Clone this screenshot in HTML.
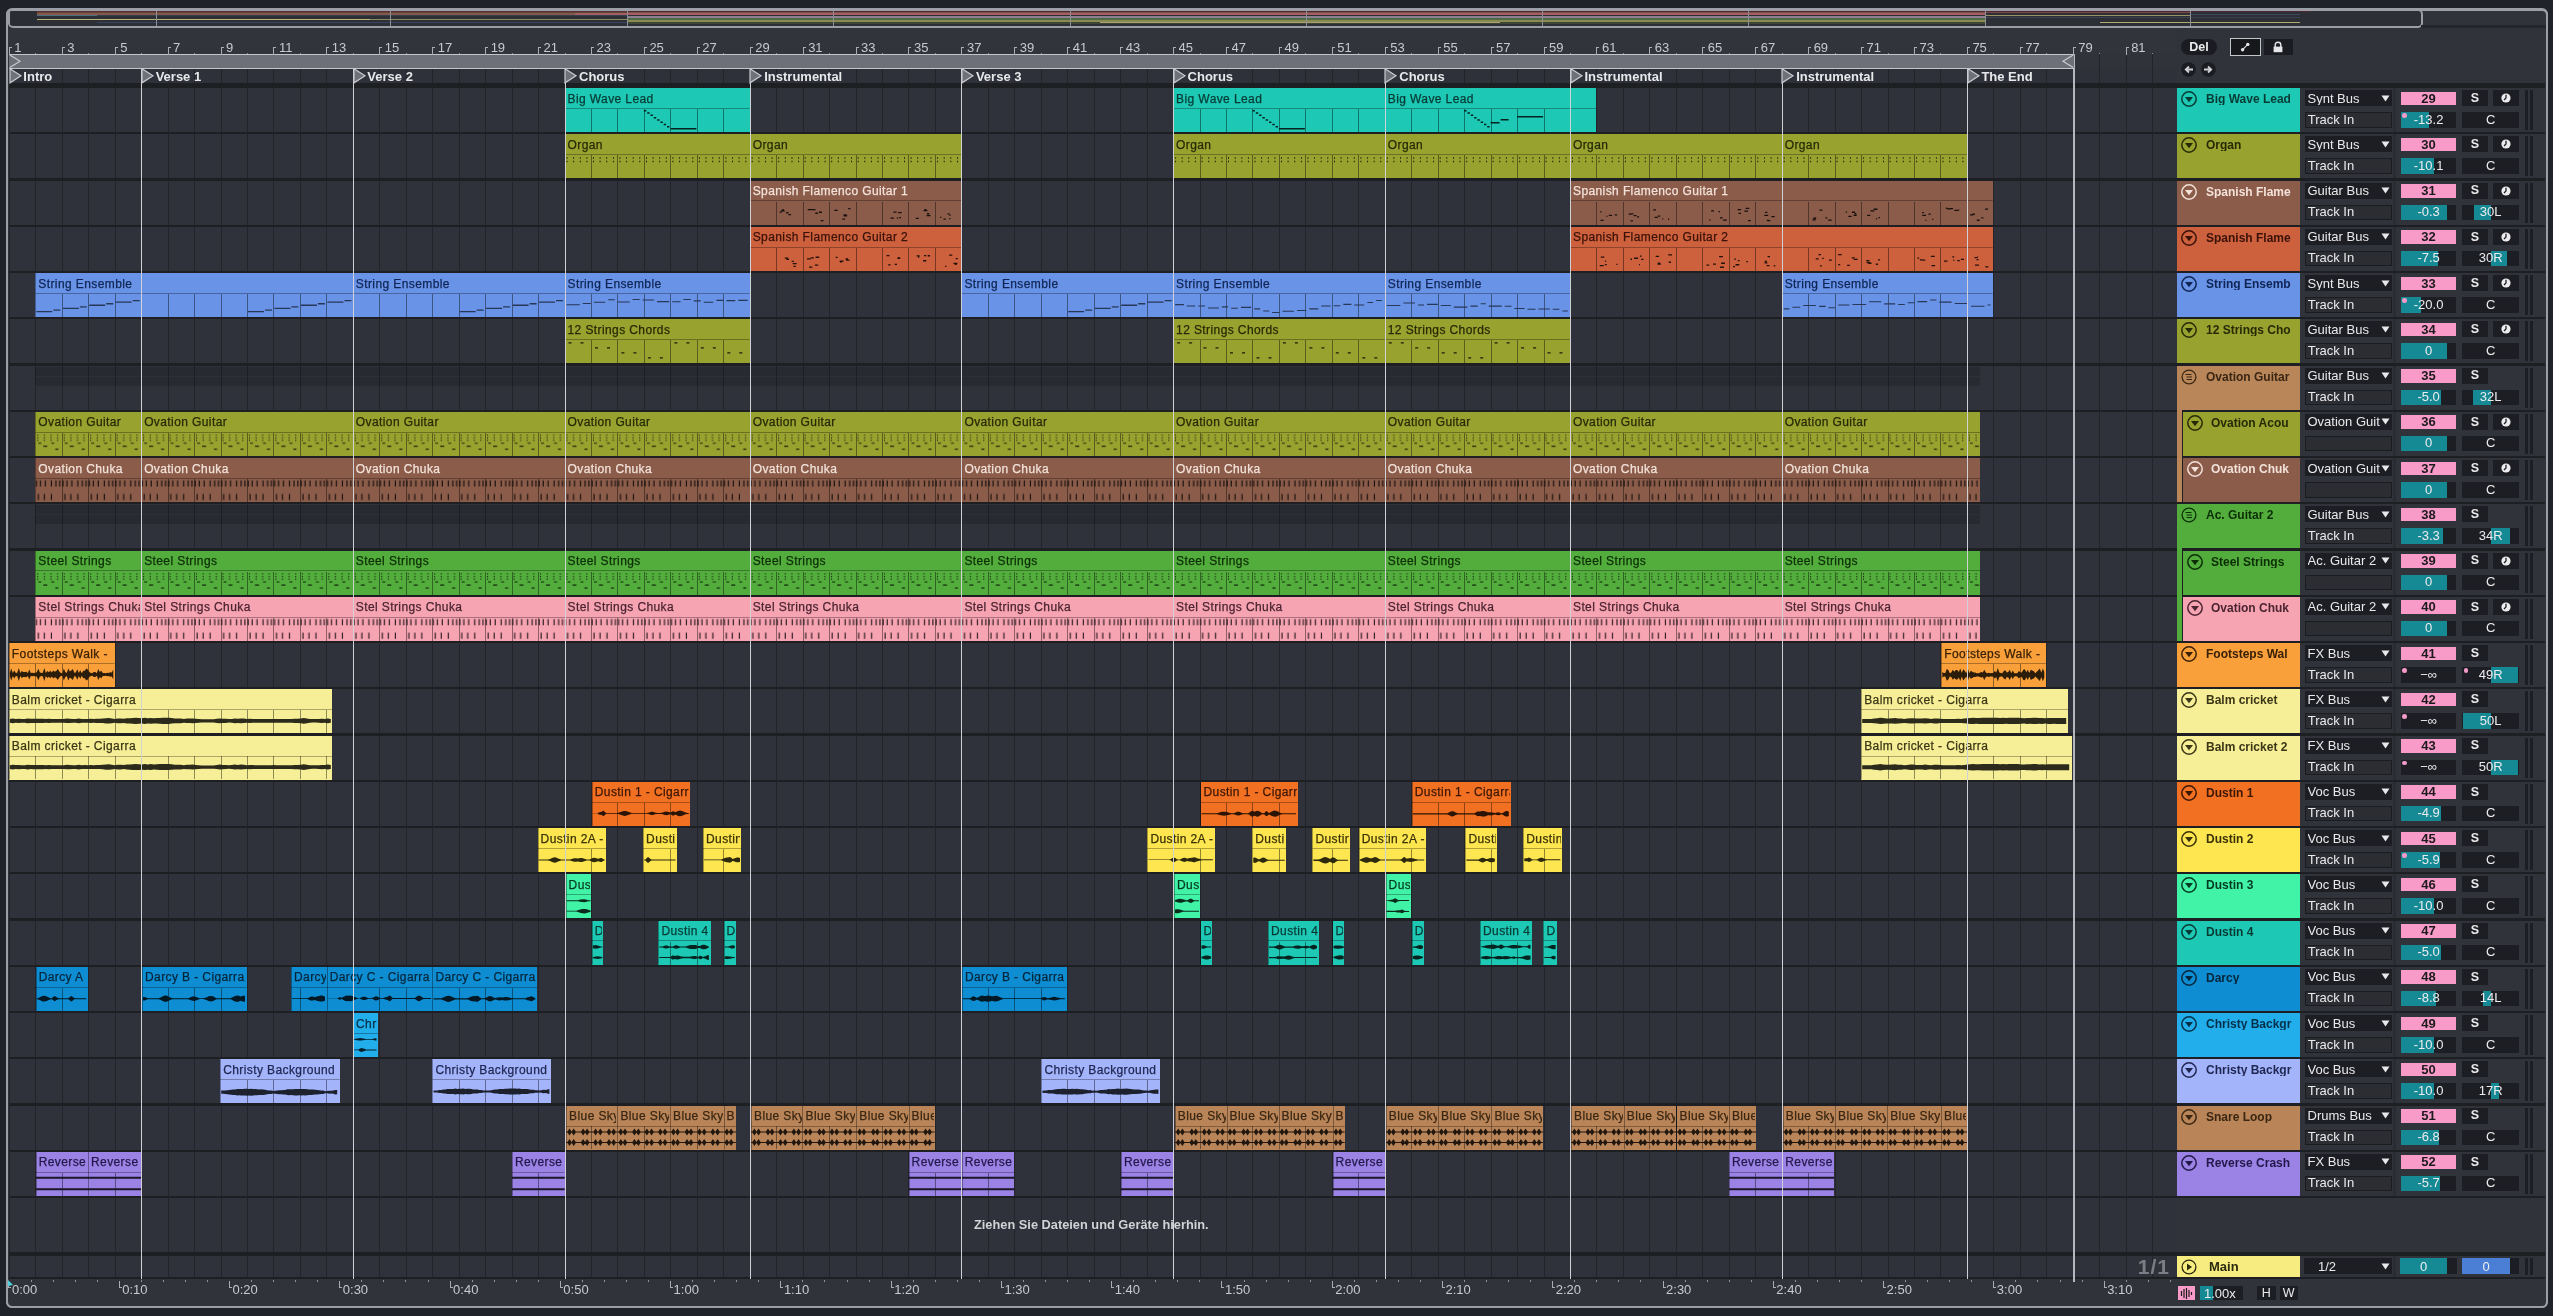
<!DOCTYPE html><html><head><meta charset="utf-8"><style>
html,body{margin:0;padding:0;background:#1f2228;width:2553px;height:1316px;overflow:hidden}
div,i{position:absolute;box-sizing:border-box;display:block}
body{font-family:'Liberation Sans', sans-serif;position:relative}
.t{white-space:nowrap;overflow:hidden;line-height:1}.cl{font-size:12px;letter-spacing:0.4px;padding-left:3px;height:15px;-webkit-text-stroke:0.25px currentColor}
svg{position:absolute;overflow:visible}
#root{position:absolute;left:0;top:0;width:2553px;height:1316px;will-change:transform}
</style></head><body><div id="root">
<i style="left:6px;top:8px;width:2542px;height:1300px;background:#30333a;border:2px solid #9b9ea6;border-radius:6px"></i>
<i style="left:7.5px;top:9px;width:2415px;height:19px;background:#2c2f36;border:2px solid #9b9ea6;border-radius:5px"></i>
<i style="left:37px;top:10.2px;width:590px;height:1.5px;background:#5a2f35"></i>
<i style="left:37px;top:11.7px;width:590px;height:1.6px;background:#5f4639"></i>
<i style="left:37px;top:13.3px;width:538px;height:1.3px;background:#86584c"></i>
<i style="left:575px;top:13.3px;width:52px;height:2.2px;background:#a55e62"></i>
<i style="left:97px;top:14.6px;width:530px;height:1.9px;background:#33404e"></i>
<i style="left:37px;top:14.6px;width:60px;height:1.9px;background:#4a7080"></i>
<i style="left:37px;top:18.5px;width:333px;height:1.3px;background:#bdb678"></i>
<i style="left:370px;top:18.5px;width:257px;height:1.3px;background:#8c8a5a"></i>
<i style="left:97px;top:21.5px;width:530px;height:1.5px;background:#384560"></i>
<i style="left:627px;top:10.2px;width:1683px;height:1.4px;background:#4a2a30"></i>
<i style="left:627px;top:11.6px;width:1358px;height:1.6px;background:#80504a"></i>
<i style="left:627px;top:13.2px;width:1358px;height:2.3px;background:#a55e62"></i>
<i style="left:627px;top:15.5px;width:1358px;height:2px;background:#8e8090"></i>
<i style="left:627px;top:17.5px;width:1358px;height:2px;background:#4e6a45"></i>
<i style="left:627px;top:19.5px;width:1358px;height:2px;background:#8a8a55"></i>
<i style="left:627px;top:21.5px;width:1358px;height:2px;background:#3d4535"></i>
<i style="left:1100px;top:22.2px;width:400px;height:1px;background:#a8a070"></i>
<i style="left:1985px;top:11.6px;width:205px;height:1.4px;background:#7a4448"></i>
<i style="left:1985px;top:14.5px;width:205px;height:1.2px;background:#9a9060"></i>
<i style="left:1985px;top:16.5px;width:315px;height:1.5px;background:#3a4050"></i>
<i style="left:2100px;top:21.8px;width:200px;height:1px;background:#b0ac70"></i>
<i style="left:2190px;top:13.5px;width:110px;height:1px;background:#3e4660"></i>
<i style="left:10px;top:10.5px;width:27px;height:14.5px;background:#2a2d33"></i>
<i style="left:155.5px;top:10px;width:1px;height:16px;background:#8d9098"></i>
<i style="left:390px;top:10px;width:1px;height:16px;background:#8d9098"></i>
<i style="left:627px;top:10px;width:1px;height:16px;background:#8d9098"></i>
<i style="left:833px;top:10px;width:1px;height:16px;background:#8d9098"></i>
<i style="left:1070px;top:10px;width:1px;height:16px;background:#8d9098"></i>
<i style="left:1306px;top:10px;width:1px;height:16px;background:#8d9098"></i>
<i style="left:1542px;top:10px;width:1px;height:16px;background:#8d9098"></i>
<i style="left:1748px;top:10px;width:1px;height:16px;background:#8d9098"></i>
<i style="left:1985px;top:10px;width:1px;height:16px;background:#8d9098"></i>
<i style="left:2190px;top:10px;width:1px;height:16px;background:#8d9098"></i>
<i style="left:2421px;top:25px;width:125px;height:3px;background:#24262b"></i>
<i style="left:8px;top:28px;width:2537px;height:26px;background:#31343b"></i>
<i style="left:9px;top:68px;width:2167.5px;height:1211px;background:#2f323a"></i>
<i style="left:9px;top:68px;width:2167.5px;height:15px;background:#2e3139"></i>
<i style="left:9px;top:54px;width:1px;height:1225px;background:#222429"></i>
<i style="left:35px;top:54px;width:1px;height:1225px;background:#222429"></i>
<i style="left:62px;top:54px;width:1px;height:1225px;background:#222429"></i>
<i style="left:88px;top:54px;width:1px;height:1225px;background:#222429"></i>
<i style="left:115px;top:54px;width:1px;height:1225px;background:#222429"></i>
<i style="left:141px;top:54px;width:1px;height:1225px;background:#222429"></i>
<i style="left:168px;top:54px;width:1px;height:1225px;background:#222429"></i>
<i style="left:194px;top:54px;width:1px;height:1225px;background:#222429"></i>
<i style="left:221px;top:54px;width:1px;height:1225px;background:#222429"></i>
<i style="left:247px;top:54px;width:1px;height:1225px;background:#222429"></i>
<i style="left:273px;top:54px;width:1px;height:1225px;background:#222429"></i>
<i style="left:300px;top:54px;width:1px;height:1225px;background:#222429"></i>
<i style="left:326px;top:54px;width:1px;height:1225px;background:#222429"></i>
<i style="left:353px;top:54px;width:1px;height:1225px;background:#222429"></i>
<i style="left:379px;top:54px;width:1px;height:1225px;background:#222429"></i>
<i style="left:406px;top:54px;width:1px;height:1225px;background:#222429"></i>
<i style="left:432px;top:54px;width:1px;height:1225px;background:#222429"></i>
<i style="left:459px;top:54px;width:1px;height:1225px;background:#222429"></i>
<i style="left:485px;top:54px;width:1px;height:1225px;background:#222429"></i>
<i style="left:512px;top:54px;width:1px;height:1225px;background:#222429"></i>
<i style="left:538px;top:54px;width:1px;height:1225px;background:#222429"></i>
<i style="left:565px;top:54px;width:1px;height:1225px;background:#222429"></i>
<i style="left:591px;top:54px;width:1px;height:1225px;background:#222429"></i>
<i style="left:617px;top:54px;width:1px;height:1225px;background:#222429"></i>
<i style="left:644px;top:54px;width:1px;height:1225px;background:#222429"></i>
<i style="left:670px;top:54px;width:1px;height:1225px;background:#222429"></i>
<i style="left:697px;top:54px;width:1px;height:1225px;background:#222429"></i>
<i style="left:723px;top:54px;width:1px;height:1225px;background:#222429"></i>
<i style="left:750px;top:54px;width:1px;height:1225px;background:#222429"></i>
<i style="left:776px;top:54px;width:1px;height:1225px;background:#222429"></i>
<i style="left:803px;top:54px;width:1px;height:1225px;background:#222429"></i>
<i style="left:829px;top:54px;width:1px;height:1225px;background:#222429"></i>
<i style="left:856px;top:54px;width:1px;height:1225px;background:#222429"></i>
<i style="left:882px;top:54px;width:1px;height:1225px;background:#222429"></i>
<i style="left:908px;top:54px;width:1px;height:1225px;background:#222429"></i>
<i style="left:935px;top:54px;width:1px;height:1225px;background:#222429"></i>
<i style="left:961px;top:54px;width:1px;height:1225px;background:#222429"></i>
<i style="left:988px;top:54px;width:1px;height:1225px;background:#222429"></i>
<i style="left:1014px;top:54px;width:1px;height:1225px;background:#222429"></i>
<i style="left:1041px;top:54px;width:1px;height:1225px;background:#222429"></i>
<i style="left:1067px;top:54px;width:1px;height:1225px;background:#222429"></i>
<i style="left:1094px;top:54px;width:1px;height:1225px;background:#222429"></i>
<i style="left:1120px;top:54px;width:1px;height:1225px;background:#222429"></i>
<i style="left:1147px;top:54px;width:1px;height:1225px;background:#222429"></i>
<i style="left:1173px;top:54px;width:1px;height:1225px;background:#222429"></i>
<i style="left:1200px;top:54px;width:1px;height:1225px;background:#222429"></i>
<i style="left:1226px;top:54px;width:1px;height:1225px;background:#222429"></i>
<i style="left:1252px;top:54px;width:1px;height:1225px;background:#222429"></i>
<i style="left:1279px;top:54px;width:1px;height:1225px;background:#222429"></i>
<i style="left:1305px;top:54px;width:1px;height:1225px;background:#222429"></i>
<i style="left:1332px;top:54px;width:1px;height:1225px;background:#222429"></i>
<i style="left:1358px;top:54px;width:1px;height:1225px;background:#222429"></i>
<i style="left:1385px;top:54px;width:1px;height:1225px;background:#222429"></i>
<i style="left:1411px;top:54px;width:1px;height:1225px;background:#222429"></i>
<i style="left:1438px;top:54px;width:1px;height:1225px;background:#222429"></i>
<i style="left:1464px;top:54px;width:1px;height:1225px;background:#222429"></i>
<i style="left:1491px;top:54px;width:1px;height:1225px;background:#222429"></i>
<i style="left:1517px;top:54px;width:1px;height:1225px;background:#222429"></i>
<i style="left:1544px;top:54px;width:1px;height:1225px;background:#222429"></i>
<i style="left:1570px;top:54px;width:1px;height:1225px;background:#222429"></i>
<i style="left:1596px;top:54px;width:1px;height:1225px;background:#222429"></i>
<i style="left:1623px;top:54px;width:1px;height:1225px;background:#222429"></i>
<i style="left:1649px;top:54px;width:1px;height:1225px;background:#222429"></i>
<i style="left:1676px;top:54px;width:1px;height:1225px;background:#222429"></i>
<i style="left:1702px;top:54px;width:1px;height:1225px;background:#222429"></i>
<i style="left:1729px;top:54px;width:1px;height:1225px;background:#222429"></i>
<i style="left:1755px;top:54px;width:1px;height:1225px;background:#222429"></i>
<i style="left:1782px;top:54px;width:1px;height:1225px;background:#222429"></i>
<i style="left:1808px;top:54px;width:1px;height:1225px;background:#222429"></i>
<i style="left:1835px;top:54px;width:1px;height:1225px;background:#222429"></i>
<i style="left:1861px;top:54px;width:1px;height:1225px;background:#222429"></i>
<i style="left:1888px;top:54px;width:1px;height:1225px;background:#222429"></i>
<i style="left:1914px;top:54px;width:1px;height:1225px;background:#222429"></i>
<i style="left:1940px;top:54px;width:1px;height:1225px;background:#222429"></i>
<i style="left:1967px;top:54px;width:1px;height:1225px;background:#222429"></i>
<i style="left:1993px;top:54px;width:1px;height:1225px;background:#222429"></i>
<i style="left:2020px;top:54px;width:1px;height:1225px;background:#222429"></i>
<i style="left:2046px;top:54px;width:1px;height:1225px;background:#222429"></i>
<i style="left:2073px;top:54px;width:1px;height:1225px;background:#222429"></i>
<i style="left:2099px;top:54px;width:1px;height:1225px;background:#222429"></i>
<i style="left:2126px;top:54px;width:1px;height:1225px;background:#222429"></i>
<i style="left:2152px;top:54px;width:1px;height:1225px;background:#222429"></i>
<i style="left:35.3px;top:366.5px;width:1944.7px;height:19px;background:rgba(0,0,0,0.14)"></i>
<i style="left:35.3px;top:375.5px;width:1944.7px;height:1px;background:rgba(255,255,255,0.03)"></i>
<i style="left:35.3px;top:505.25px;width:1944.7px;height:19px;background:rgba(0,0,0,0.14)"></i>
<i style="left:35.3px;top:514.25px;width:1944.7px;height:1px;background:rgba(255,255,255,0.03)"></i>
<i style="left:9px;top:83px;width:2536px;height:5px;background:#1d1f23"></i>
<i style="left:9px;top:132px;width:2536px;height:2.25px;background:#1d1f23"></i>
<i style="left:9px;top:178.25px;width:2536px;height:2.25px;background:#1d1f23"></i>
<i style="left:9px;top:224.5px;width:2536px;height:2.25px;background:#1d1f23"></i>
<i style="left:9px;top:270.75px;width:2536px;height:2.25px;background:#1d1f23"></i>
<i style="left:9px;top:317px;width:2536px;height:2.25px;background:#1d1f23"></i>
<i style="left:9px;top:363.25px;width:2536px;height:2.25px;background:#1d1f23"></i>
<i style="left:9px;top:409.5px;width:2536px;height:2.25px;background:#1d1f23"></i>
<i style="left:9px;top:455.75px;width:2536px;height:2.25px;background:#1d1f23"></i>
<i style="left:9px;top:502px;width:2536px;height:2.25px;background:#1d1f23"></i>
<i style="left:9px;top:548.25px;width:2536px;height:2.25px;background:#1d1f23"></i>
<i style="left:9px;top:594.5px;width:2536px;height:2.25px;background:#1d1f23"></i>
<i style="left:9px;top:640.75px;width:2536px;height:2.25px;background:#1d1f23"></i>
<i style="left:9px;top:687px;width:2536px;height:2.25px;background:#1d1f23"></i>
<i style="left:9px;top:733.25px;width:2536px;height:2.25px;background:#1d1f23"></i>
<i style="left:9px;top:779.5px;width:2536px;height:2.25px;background:#1d1f23"></i>
<i style="left:9px;top:825.75px;width:2536px;height:2.25px;background:#1d1f23"></i>
<i style="left:9px;top:872px;width:2536px;height:2.25px;background:#1d1f23"></i>
<i style="left:9px;top:918.25px;width:2536px;height:2.25px;background:#1d1f23"></i>
<i style="left:9px;top:964.5px;width:2536px;height:2.25px;background:#1d1f23"></i>
<i style="left:9px;top:1010.75px;width:2536px;height:2.25px;background:#1d1f23"></i>
<i style="left:9px;top:1057px;width:2536px;height:2.25px;background:#1d1f23"></i>
<i style="left:9px;top:1103.25px;width:2536px;height:2.25px;background:#1d1f23"></i>
<i style="left:9px;top:1149.5px;width:2536px;height:2.25px;background:#1d1f23"></i>
<i style="left:9px;top:1195.75px;width:2536px;height:2.25px;background:#1d1f23"></i>
<i style="left:564.51px;top:88px;width:185.22px;height:44px;background:#1dc8b4"></i>
<div class="t cl" style="left:564.51px;top:92.5px;width:184.22px;color:#083a34">Big Wave Lead</div>
<i style="left:1173.09px;top:88px;width:211.68px;height:44px;background:#1dc8b4"></i>
<div class="t cl" style="left:1173.09px;top:92.5px;width:210.68px;color:#083a34">Big Wave Lead</div>
<i style="left:1384.77px;top:88px;width:211.23px;height:44px;background:#1dc8b4"></i>
<div class="t cl" style="left:1384.77px;top:92.5px;width:210.23px;color:#083a34">Big Wave Lead</div>
<i style="left:564.51px;top:134.25px;width:185.22px;height:44px;background:#98a22f"></i>
<div class="t cl" style="left:564.51px;top:138.75px;width:184.22px;color:#262a06">Organ</div>
<i style="left:749.73px;top:134.25px;width:211.68px;height:44px;background:#98a22f"></i>
<div class="t cl" style="left:749.73px;top:138.75px;width:210.68px;color:#262a06">Organ</div>
<i style="left:1173.09px;top:134.25px;width:211.68px;height:44px;background:#98a22f"></i>
<div class="t cl" style="left:1173.09px;top:138.75px;width:210.68px;color:#262a06">Organ</div>
<i style="left:1384.77px;top:134.25px;width:185.22px;height:44px;background:#98a22f"></i>
<div class="t cl" style="left:1384.77px;top:138.75px;width:184.22px;color:#262a06">Organ</div>
<i style="left:1569.99px;top:134.25px;width:211.68px;height:44px;background:#98a22f"></i>
<div class="t cl" style="left:1569.99px;top:138.75px;width:210.68px;color:#262a06">Organ</div>
<i style="left:1781.67px;top:134.25px;width:185.22px;height:44px;background:#98a22f"></i>
<div class="t cl" style="left:1781.67px;top:138.75px;width:184.22px;color:#262a06">Organ</div>
<i style="left:749.73px;top:180.5px;width:211.68px;height:44px;background:#8b5c4a"></i>
<div class="t cl" style="left:749.73px;top:185px;width:210.68px;color:#f3e2da">Spanish Flamenco Guitar 1</div>
<i style="left:1569.99px;top:180.5px;width:422.61px;height:44px;background:#8b5c4a"></i>
<div class="t cl" style="left:1569.99px;top:185px;width:421.61px;color:#f3e2da">Spanish Flamenco Guitar 1</div>
<i style="left:749.73px;top:226.75px;width:211.68px;height:44px;background:#cd603d"></i>
<div class="t cl" style="left:749.73px;top:231.25px;width:210.68px;color:#3a1208">Spanish Flamenco Guitar 2</div>
<i style="left:1569.99px;top:226.75px;width:422.61px;height:44px;background:#cd603d"></i>
<div class="t cl" style="left:1569.99px;top:231.25px;width:421.61px;color:#3a1208">Spanish Flamenco Guitar 2</div>
<i style="left:35.31px;top:273px;width:317.52px;height:44px;background:#6993e6"></i>
<div class="t cl" style="left:35.31px;top:277.5px;width:316.52px;color:#0f2555">String Ensemble</div>
<i style="left:352.83px;top:273px;width:211.68px;height:44px;background:#6993e6"></i>
<div class="t cl" style="left:352.83px;top:277.5px;width:210.68px;color:#0f2555">String Ensemble</div>
<i style="left:564.51px;top:273px;width:185.22px;height:44px;background:#6993e6"></i>
<div class="t cl" style="left:564.51px;top:277.5px;width:184.22px;color:#0f2555">String Ensemble</div>
<i style="left:961.41px;top:273px;width:211.68px;height:44px;background:#6993e6"></i>
<div class="t cl" style="left:961.41px;top:277.5px;width:210.68px;color:#0f2555">String Ensemble</div>
<i style="left:1173.09px;top:273px;width:211.68px;height:44px;background:#6993e6"></i>
<div class="t cl" style="left:1173.09px;top:277.5px;width:210.68px;color:#0f2555">String Ensemble</div>
<i style="left:1384.77px;top:273px;width:185.22px;height:44px;background:#6993e6"></i>
<div class="t cl" style="left:1384.77px;top:277.5px;width:184.22px;color:#0f2555">String Ensemble</div>
<i style="left:1781.67px;top:273px;width:210.93px;height:44px;background:#6993e6"></i>
<div class="t cl" style="left:1781.67px;top:277.5px;width:209.93px;color:#0f2555">String Ensemble</div>
<i style="left:564.51px;top:319.25px;width:185.22px;height:44px;background:#98a22f"></i>
<div class="t cl" style="left:564.51px;top:323.75px;width:184.22px;color:#262a06">12 Strings Chords</div>
<i style="left:1173.09px;top:319.25px;width:211.68px;height:44px;background:#98a22f"></i>
<div class="t cl" style="left:1173.09px;top:323.75px;width:210.68px;color:#262a06">12 Strings Chords</div>
<i style="left:1384.77px;top:319.25px;width:185.22px;height:44px;background:#98a22f"></i>
<div class="t cl" style="left:1384.77px;top:323.75px;width:184.22px;color:#262a06">12 Strings Chords</div>
<i style="left:35.31px;top:411.75px;width:105.84px;height:44px;background:#98a22f"></i>
<div class="t cl" style="left:35.31px;top:416.25px;width:104.84px;color:#262a06">Ovation Guitar</div>
<i style="left:141.15px;top:411.75px;width:211.68px;height:44px;background:#98a22f"></i>
<div class="t cl" style="left:141.15px;top:416.25px;width:210.68px;color:#262a06">Ovation Guitar</div>
<i style="left:352.83px;top:411.75px;width:211.68px;height:44px;background:#98a22f"></i>
<div class="t cl" style="left:352.83px;top:416.25px;width:210.68px;color:#262a06">Ovation Guitar</div>
<i style="left:564.51px;top:411.75px;width:185.22px;height:44px;background:#98a22f"></i>
<div class="t cl" style="left:564.51px;top:416.25px;width:184.22px;color:#262a06">Ovation Guitar</div>
<i style="left:749.73px;top:411.75px;width:211.68px;height:44px;background:#98a22f"></i>
<div class="t cl" style="left:749.73px;top:416.25px;width:210.68px;color:#262a06">Ovation Guitar</div>
<i style="left:961.41px;top:411.75px;width:211.68px;height:44px;background:#98a22f"></i>
<div class="t cl" style="left:961.41px;top:416.25px;width:210.68px;color:#262a06">Ovation Guitar</div>
<i style="left:1173.09px;top:411.75px;width:211.68px;height:44px;background:#98a22f"></i>
<div class="t cl" style="left:1173.09px;top:416.25px;width:210.68px;color:#262a06">Ovation Guitar</div>
<i style="left:1384.77px;top:411.75px;width:185.22px;height:44px;background:#98a22f"></i>
<div class="t cl" style="left:1384.77px;top:416.25px;width:184.22px;color:#262a06">Ovation Guitar</div>
<i style="left:1569.99px;top:411.75px;width:211.68px;height:44px;background:#98a22f"></i>
<div class="t cl" style="left:1569.99px;top:416.25px;width:210.68px;color:#262a06">Ovation Guitar</div>
<i style="left:1781.67px;top:411.75px;width:198.33px;height:44px;background:#98a22f"></i>
<div class="t cl" style="left:1781.67px;top:416.25px;width:197.33px;color:#262a06">Ovation Guitar</div>
<i style="left:35.31px;top:458px;width:105.84px;height:44px;background:#8b5c4a"></i>
<div class="t cl" style="left:35.31px;top:462.5px;width:104.84px;color:#f3e2da">Ovation Chuka</div>
<i style="left:141.15px;top:458px;width:211.68px;height:44px;background:#8b5c4a"></i>
<div class="t cl" style="left:141.15px;top:462.5px;width:210.68px;color:#f3e2da">Ovation Chuka</div>
<i style="left:352.83px;top:458px;width:211.68px;height:44px;background:#8b5c4a"></i>
<div class="t cl" style="left:352.83px;top:462.5px;width:210.68px;color:#f3e2da">Ovation Chuka</div>
<i style="left:564.51px;top:458px;width:185.22px;height:44px;background:#8b5c4a"></i>
<div class="t cl" style="left:564.51px;top:462.5px;width:184.22px;color:#f3e2da">Ovation Chuka</div>
<i style="left:749.73px;top:458px;width:211.68px;height:44px;background:#8b5c4a"></i>
<div class="t cl" style="left:749.73px;top:462.5px;width:210.68px;color:#f3e2da">Ovation Chuka</div>
<i style="left:961.41px;top:458px;width:211.68px;height:44px;background:#8b5c4a"></i>
<div class="t cl" style="left:961.41px;top:462.5px;width:210.68px;color:#f3e2da">Ovation Chuka</div>
<i style="left:1173.09px;top:458px;width:211.68px;height:44px;background:#8b5c4a"></i>
<div class="t cl" style="left:1173.09px;top:462.5px;width:210.68px;color:#f3e2da">Ovation Chuka</div>
<i style="left:1384.77px;top:458px;width:185.22px;height:44px;background:#8b5c4a"></i>
<div class="t cl" style="left:1384.77px;top:462.5px;width:184.22px;color:#f3e2da">Ovation Chuka</div>
<i style="left:1569.99px;top:458px;width:211.68px;height:44px;background:#8b5c4a"></i>
<div class="t cl" style="left:1569.99px;top:462.5px;width:210.68px;color:#f3e2da">Ovation Chuka</div>
<i style="left:1781.67px;top:458px;width:198.33px;height:44px;background:#8b5c4a"></i>
<div class="t cl" style="left:1781.67px;top:462.5px;width:197.33px;color:#f3e2da">Ovation Chuka</div>
<i style="left:35.31px;top:550.5px;width:105.84px;height:44px;background:#53ad3c"></i>
<div class="t cl" style="left:35.31px;top:555px;width:104.84px;color:#0c2e06">Steel Strings</div>
<i style="left:141.15px;top:550.5px;width:211.68px;height:44px;background:#53ad3c"></i>
<div class="t cl" style="left:141.15px;top:555px;width:210.68px;color:#0c2e06">Steel Strings</div>
<i style="left:352.83px;top:550.5px;width:211.68px;height:44px;background:#53ad3c"></i>
<div class="t cl" style="left:352.83px;top:555px;width:210.68px;color:#0c2e06">Steel Strings</div>
<i style="left:564.51px;top:550.5px;width:185.22px;height:44px;background:#53ad3c"></i>
<div class="t cl" style="left:564.51px;top:555px;width:184.22px;color:#0c2e06">Steel Strings</div>
<i style="left:749.73px;top:550.5px;width:211.68px;height:44px;background:#53ad3c"></i>
<div class="t cl" style="left:749.73px;top:555px;width:210.68px;color:#0c2e06">Steel Strings</div>
<i style="left:961.41px;top:550.5px;width:211.68px;height:44px;background:#53ad3c"></i>
<div class="t cl" style="left:961.41px;top:555px;width:210.68px;color:#0c2e06">Steel Strings</div>
<i style="left:1173.09px;top:550.5px;width:211.68px;height:44px;background:#53ad3c"></i>
<div class="t cl" style="left:1173.09px;top:555px;width:210.68px;color:#0c2e06">Steel Strings</div>
<i style="left:1384.77px;top:550.5px;width:185.22px;height:44px;background:#53ad3c"></i>
<div class="t cl" style="left:1384.77px;top:555px;width:184.22px;color:#0c2e06">Steel Strings</div>
<i style="left:1569.99px;top:550.5px;width:211.68px;height:44px;background:#53ad3c"></i>
<div class="t cl" style="left:1569.99px;top:555px;width:210.68px;color:#0c2e06">Steel Strings</div>
<i style="left:1781.67px;top:550.5px;width:198.33px;height:44px;background:#53ad3c"></i>
<div class="t cl" style="left:1781.67px;top:555px;width:197.33px;color:#0c2e06">Steel Strings</div>
<i style="left:35.31px;top:596.75px;width:105.84px;height:44px;background:#f6a3b2"></i>
<div class="t cl" style="left:35.31px;top:601.25px;width:104.84px;color:#4a2430">Stel Strings Chuka</div>
<i style="left:141.15px;top:596.75px;width:211.68px;height:44px;background:#f6a3b2"></i>
<div class="t cl" style="left:141.15px;top:601.25px;width:210.68px;color:#4a2430">Stel Strings Chuka</div>
<i style="left:352.83px;top:596.75px;width:211.68px;height:44px;background:#f6a3b2"></i>
<div class="t cl" style="left:352.83px;top:601.25px;width:210.68px;color:#4a2430">Stel Strings Chuka</div>
<i style="left:564.51px;top:596.75px;width:185.22px;height:44px;background:#f6a3b2"></i>
<div class="t cl" style="left:564.51px;top:601.25px;width:184.22px;color:#4a2430">Stel Strings Chuka</div>
<i style="left:749.73px;top:596.75px;width:211.68px;height:44px;background:#f6a3b2"></i>
<div class="t cl" style="left:749.73px;top:601.25px;width:210.68px;color:#4a2430">Stel Strings Chuka</div>
<i style="left:961.41px;top:596.75px;width:211.68px;height:44px;background:#f6a3b2"></i>
<div class="t cl" style="left:961.41px;top:601.25px;width:210.68px;color:#4a2430">Stel Strings Chuka</div>
<i style="left:1173.09px;top:596.75px;width:211.68px;height:44px;background:#f6a3b2"></i>
<div class="t cl" style="left:1173.09px;top:601.25px;width:210.68px;color:#4a2430">Stel Strings Chuka</div>
<i style="left:1384.77px;top:596.75px;width:185.22px;height:44px;background:#f6a3b2"></i>
<div class="t cl" style="left:1384.77px;top:601.25px;width:184.22px;color:#4a2430">Stel Strings Chuka</div>
<i style="left:1569.99px;top:596.75px;width:211.68px;height:44px;background:#f6a3b2"></i>
<div class="t cl" style="left:1569.99px;top:601.25px;width:210.68px;color:#4a2430">Stel Strings Chuka</div>
<i style="left:1781.67px;top:596.75px;width:198.33px;height:44px;background:#f6a3b2"></i>
<div class="t cl" style="left:1781.67px;top:601.25px;width:197.33px;color:#4a2430">Stel Strings Chuka</div>
<i style="left:8.85px;top:643px;width:105.85px;height:44px;background:#f9a03a"></i>
<div class="t cl" style="left:8.85px;top:647.5px;width:104.85px;color:#3a2006">Footsteps Walk -</div>
<i style="left:1941.3px;top:643px;width:104.5px;height:44px;background:#f9a03a"></i>
<div class="t cl" style="left:1941.3px;top:647.5px;width:103.5px;color:#3a2006">Footsteps Walk -</div>
<i style="left:8.85px;top:689.25px;width:323.15px;height:44px;background:#f7ef97"></i>
<div class="t cl" style="left:8.85px;top:693.75px;width:322.15px;color:#3a3616">Balm cricket - Cigarra</div>
<i style="left:1861.2px;top:689.25px;width:206.8px;height:44px;background:#f7ef97"></i>
<div class="t cl" style="left:1861.2px;top:693.75px;width:205.8px;color:#3a3616">Balm cricket - Cigarra</div>
<i style="left:8.85px;top:735.5px;width:323.15px;height:44px;background:#f7ef97"></i>
<div class="t cl" style="left:8.85px;top:740px;width:322.15px;color:#3a3616">Balm cricket - Cigarra</div>
<i style="left:1861.2px;top:735.5px;width:211.3px;height:44px;background:#f7ef97"></i>
<div class="t cl" style="left:1861.2px;top:740px;width:210.3px;color:#3a3616">Balm cricket - Cigarra</div>
<i style="left:591.8px;top:781.75px;width:98.1px;height:44px;background:#f27022"></i>
<div class="t cl" style="left:591.8px;top:786.25px;width:97.1px;color:#3c1704">Dustin 1 - Cigarra</div>
<i style="left:1200.5px;top:781.75px;width:97.4px;height:44px;background:#f27022"></i>
<div class="t cl" style="left:1200.5px;top:786.25px;width:96.4px;color:#3c1704">Dustin 1 - Cigarra</div>
<i style="left:1411.8px;top:781.75px;width:99.2px;height:44px;background:#f27022"></i>
<div class="t cl" style="left:1411.8px;top:786.25px;width:98.2px;color:#3c1704">Dustin 1 - Cigarra</div>
<i style="left:537.6px;top:828px;width:68.4px;height:44px;background:#fde650"></i>
<div class="t cl" style="left:537.6px;top:832.5px;width:67.4px;color:#3a3206">Dustin 2A - Cigarra</div>
<i style="left:643.1px;top:828px;width:34.2px;height:44px;background:#fde650"></i>
<div class="t cl" style="left:643.1px;top:832.5px;width:33.2px;color:#3a3206">Dustin 2B</div>
<i style="left:703px;top:828px;width:38.2px;height:44px;background:#fde650"></i>
<div class="t cl" style="left:703px;top:832.5px;width:37.2px;color:#3a3206">Dustin 2C</div>
<i style="left:1147.4px;top:828px;width:67.3px;height:44px;background:#fde650"></i>
<div class="t cl" style="left:1147.4px;top:832.5px;width:66.3px;color:#3a3206">Dustin 2A - Cigarra</div>
<i style="left:1252.3px;top:828px;width:33.5px;height:44px;background:#fde650"></i>
<div class="t cl" style="left:1252.3px;top:832.5px;width:32.5px;color:#3a3206">Dustin 2B</div>
<i style="left:1312.4px;top:828px;width:37.2px;height:44px;background:#fde650"></i>
<div class="t cl" style="left:1312.4px;top:832.5px;width:36.2px;color:#3a3206">Dustin 2C</div>
<i style="left:1358.7px;top:828px;width:67.3px;height:44px;background:#fde650"></i>
<div class="t cl" style="left:1358.7px;top:832.5px;width:66.3px;color:#3a3206">Dustin 2A - Cigarra</div>
<i style="left:1465.4px;top:828px;width:31.2px;height:44px;background:#fde650"></i>
<div class="t cl" style="left:1465.4px;top:832.5px;width:30.2px;color:#3a3206">Dustin 2B</div>
<i style="left:1523.3px;top:828px;width:38.7px;height:44px;background:#fde650"></i>
<div class="t cl" style="left:1523.3px;top:832.5px;width:37.7px;color:#3a3206">Dustin 2C</div>
<i style="left:565.6px;top:874.25px;width:25.5px;height:44px;background:#41f3a6"></i>
<div class="t cl" style="left:565.6px;top:878.75px;width:24.5px;color:#053a22">Dustin 3</div>
<i style="left:1174px;top:874.25px;width:25.6px;height:44px;background:#41f3a6"></i>
<div class="t cl" style="left:1174px;top:878.75px;width:24.6px;color:#053a22">Dustin 3</div>
<i style="left:1385.6px;top:874.25px;width:25.1px;height:44px;background:#41f3a6"></i>
<div class="t cl" style="left:1385.6px;top:878.75px;width:24.1px;color:#053a22">Dustin 3</div>
<i style="left:591.8px;top:920.5px;width:11.4px;height:44px;background:#1dc8b4"></i>
<div class="t cl" style="left:591.8px;top:925px;width:10.4px;color:#083a34">D</div>
<i style="left:658.4px;top:920.5px;width:52.6px;height:44px;background:#1dc8b4"></i>
<div class="t cl" style="left:658.4px;top:925px;width:51.6px;color:#083a34">Dustin 4</div>
<i style="left:723.6px;top:920.5px;width:12.3px;height:44px;background:#1dc8b4"></i>
<div class="t cl" style="left:723.6px;top:925px;width:11.3px;color:#083a34">D</div>
<i style="left:1200.5px;top:920.5px;width:11.6px;height:44px;background:#1dc8b4"></i>
<div class="t cl" style="left:1200.5px;top:925px;width:10.6px;color:#083a34">D</div>
<i style="left:1268px;top:920.5px;width:51.3px;height:44px;background:#1dc8b4"></i>
<div class="t cl" style="left:1268px;top:925px;width:50.3px;color:#083a34">Dustin 4</div>
<i style="left:1332.5px;top:920.5px;width:11.9px;height:44px;background:#1dc8b4"></i>
<div class="t cl" style="left:1332.5px;top:925px;width:10.9px;color:#083a34">D</div>
<i style="left:1411.8px;top:920.5px;width:11.9px;height:44px;background:#1dc8b4"></i>
<div class="t cl" style="left:1411.8px;top:925px;width:10.9px;color:#083a34">D</div>
<i style="left:1480px;top:920.5px;width:52px;height:44px;background:#1dc8b4"></i>
<div class="t cl" style="left:1480px;top:925px;width:51px;color:#083a34">Dustin 4</div>
<i style="left:1543.4px;top:920.5px;width:13.2px;height:44px;background:#1dc8b4"></i>
<div class="t cl" style="left:1543.4px;top:925px;width:12.2px;color:#083a34">D</div>
<i style="left:35.7px;top:966.75px;width:52.4px;height:44px;background:#0e8dd3"></i>
<div class="t cl" style="left:35.7px;top:971.25px;width:51.4px;color:#05263a">Darcy A</div>
<i style="left:142px;top:966.75px;width:104.8px;height:44px;background:#0e8dd3"></i>
<div class="t cl" style="left:142px;top:971.25px;width:103.8px;color:#05263a">Darcy B - Cigarra</div>
<i style="left:291px;top:966.75px;width:35.7px;height:44px;background:#0e8dd3"></i>
<div class="t cl" style="left:291px;top:971.25px;width:34.7px;color:#05263a">Darcy C</div>
<i style="left:326.7px;top:966.75px;width:105.7px;height:44px;background:#0e8dd3"></i>
<div class="t cl" style="left:326.7px;top:971.25px;width:104.7px;color:#05263a">Darcy C - Cigarra</div>
<i style="left:432.4px;top:966.75px;width:104.6px;height:44px;background:#0e8dd3"></i>
<div class="t cl" style="left:432.4px;top:971.25px;width:103.6px;color:#05263a">Darcy C - Cigarra</div>
<i style="left:961.9px;top:966.75px;width:104.8px;height:44px;background:#0e8dd3"></i>
<div class="t cl" style="left:961.9px;top:971.25px;width:103.8px;color:#05263a">Darcy B - Cigarra</div>
<i style="left:353px;top:1013px;width:24.9px;height:44px;background:#22aeea"></i>
<div class="t cl" style="left:353px;top:1017.5px;width:23.9px;color:#05304a">Christy</div>
<i style="left:220.2px;top:1059.25px;width:119.4px;height:44px;background:#a3b4fb"></i>
<div class="t cl" style="left:220.2px;top:1063.75px;width:118.4px;color:#1e2650">Christy Background</div>
<i style="left:432.4px;top:1059.25px;width:118.2px;height:44px;background:#a3b4fb"></i>
<div class="t cl" style="left:432.4px;top:1063.75px;width:117.2px;color:#1e2650">Christy Background</div>
<i style="left:1041.4px;top:1059.25px;width:118.4px;height:44px;background:#a3b4fb"></i>
<div class="t cl" style="left:1041.4px;top:1063.75px;width:117.4px;color:#1e2650">Christy Background</div>
<i style="left:566.1px;top:1105.5px;width:51.3px;height:44px;background:#b98558"></i>
<div class="t cl" style="left:566.1px;top:1110px;width:50.3px;color:#3a2612">Blue Sky</div>
<i style="left:617.4px;top:1105.5px;width:52.6px;height:44px;background:#b98558"></i>
<div class="t cl" style="left:617.4px;top:1110px;width:51.6px;color:#3a2612">Blue Sky</div>
<i style="left:670px;top:1105.5px;width:53.5px;height:44px;background:#b98558"></i>
<div class="t cl" style="left:670px;top:1110px;width:52.5px;color:#3a2612">Blue Sky</div>
<i style="left:723.5px;top:1105.5px;width:12.4px;height:44px;background:#b98558"></i>
<div class="t cl" style="left:723.5px;top:1110px;width:11.4px;color:#3a2612">Blue Sky</div>
<i style="left:751px;top:1105.5px;width:51.5px;height:44px;background:#b98558"></i>
<div class="t cl" style="left:751px;top:1110px;width:50.5px;color:#3a2612">Blue Sky</div>
<i style="left:802.5px;top:1105.5px;width:53.8px;height:44px;background:#b98558"></i>
<div class="t cl" style="left:802.5px;top:1110px;width:52.8px;color:#3a2612">Blue Sky</div>
<i style="left:856.3px;top:1105.5px;width:52.3px;height:44px;background:#b98558"></i>
<div class="t cl" style="left:856.3px;top:1110px;width:51.3px;color:#3a2612">Blue Sky</div>
<i style="left:908.6px;top:1105.5px;width:26px;height:44px;background:#b98558"></i>
<div class="t cl" style="left:908.6px;top:1110px;width:25px;color:#3a2612">Blue Sky</div>
<i style="left:1174.8px;top:1105.5px;width:51.8px;height:44px;background:#b98558"></i>
<div class="t cl" style="left:1174.8px;top:1110px;width:50.8px;color:#3a2612">Blue Sky</div>
<i style="left:1226.6px;top:1105.5px;width:52px;height:44px;background:#b98558"></i>
<div class="t cl" style="left:1226.6px;top:1110px;width:51px;color:#3a2612">Blue Sky</div>
<i style="left:1278.6px;top:1105.5px;width:54px;height:44px;background:#b98558"></i>
<div class="t cl" style="left:1278.6px;top:1110px;width:53px;color:#3a2612">Blue Sky</div>
<i style="left:1332.6px;top:1105.5px;width:12.1px;height:44px;background:#b98558"></i>
<div class="t cl" style="left:1332.6px;top:1110px;width:11.1px;color:#3a2612">Blue Sky</div>
<i style="left:1385.8px;top:1105.5px;width:52.2px;height:44px;background:#b98558"></i>
<div class="t cl" style="left:1385.8px;top:1110px;width:51.2px;color:#3a2612">Blue Sky</div>
<i style="left:1438px;top:1105.5px;width:53.4px;height:44px;background:#b98558"></i>
<div class="t cl" style="left:1438px;top:1110px;width:52.4px;color:#3a2612">Blue Sky</div>
<i style="left:1491.4px;top:1105.5px;width:51.5px;height:44px;background:#b98558"></i>
<div class="t cl" style="left:1491.4px;top:1110px;width:50.5px;color:#3a2612">Blue Sky</div>
<i style="left:1571px;top:1105.5px;width:52.8px;height:44px;background:#b98558"></i>
<div class="t cl" style="left:1571px;top:1110px;width:51.8px;color:#3a2612">Blue Sky</div>
<i style="left:1623.8px;top:1105.5px;width:52.7px;height:44px;background:#b98558"></i>
<div class="t cl" style="left:1623.8px;top:1110px;width:51.7px;color:#3a2612">Blue Sky</div>
<i style="left:1676.5px;top:1105.5px;width:52.4px;height:44px;background:#b98558"></i>
<div class="t cl" style="left:1676.5px;top:1110px;width:51.4px;color:#3a2612">Blue Sky</div>
<i style="left:1728.9px;top:1105.5px;width:27.2px;height:44px;background:#b98558"></i>
<div class="t cl" style="left:1728.9px;top:1110px;width:26.2px;color:#3a2612">Blue Sky</div>
<i style="left:1782.8px;top:1105.5px;width:52.2px;height:44px;background:#b98558"></i>
<div class="t cl" style="left:1782.8px;top:1110px;width:51.2px;color:#3a2612">Blue Sky</div>
<i style="left:1835px;top:1105.5px;width:52.2px;height:44px;background:#b98558"></i>
<div class="t cl" style="left:1835px;top:1110px;width:51.2px;color:#3a2612">Blue Sky</div>
<i style="left:1887.2px;top:1105.5px;width:53.8px;height:44px;background:#b98558"></i>
<div class="t cl" style="left:1887.2px;top:1110px;width:52.8px;color:#3a2612">Blue Sky</div>
<i style="left:1941px;top:1105.5px;width:26.4px;height:44px;background:#b98558"></i>
<div class="t cl" style="left:1941px;top:1110px;width:25.4px;color:#3a2612">Blue Sky</div>
<i style="left:35.7px;top:1151.75px;width:52.3px;height:44px;background:#9b83e6"></i>
<div class="t cl" style="left:35.7px;top:1156.25px;width:51.3px;color:#22184a">Reverse</div>
<i style="left:88px;top:1151.75px;width:53.2px;height:44px;background:#9b83e6"></i>
<div class="t cl" style="left:88px;top:1156.25px;width:52.2px;color:#22184a">Reverse</div>
<i style="left:511.9px;top:1151.75px;width:52.8px;height:44px;background:#9b83e6"></i>
<div class="t cl" style="left:511.9px;top:1156.25px;width:51.8px;color:#22184a">Reverse</div>
<i style="left:908.6px;top:1151.75px;width:53.2px;height:44px;background:#9b83e6"></i>
<div class="t cl" style="left:908.6px;top:1156.25px;width:52.2px;color:#22184a">Reverse</div>
<i style="left:961.8px;top:1151.75px;width:52.7px;height:44px;background:#9b83e6"></i>
<div class="t cl" style="left:961.8px;top:1156.25px;width:51.7px;color:#22184a">Reverse</div>
<i style="left:1121px;top:1151.75px;width:52.5px;height:44px;background:#9b83e6"></i>
<div class="t cl" style="left:1121px;top:1156.25px;width:51.5px;color:#22184a">Reverse</div>
<i style="left:1332.6px;top:1151.75px;width:52.7px;height:44px;background:#9b83e6"></i>
<div class="t cl" style="left:1332.6px;top:1156.25px;width:51.7px;color:#22184a">Reverse</div>
<i style="left:1728.9px;top:1151.75px;width:53.4px;height:44px;background:#9b83e6"></i>
<div class="t cl" style="left:1728.9px;top:1156.25px;width:52.4px;color:#22184a">Reverse</div>
<i style="left:1782.3px;top:1151.75px;width:52px;height:44px;background:#9b83e6"></i>
<div class="t cl" style="left:1782.3px;top:1156.25px;width:51px;color:#22184a">Reverse</div>
<svg width="2553" height="1316" style="left:0;top:0"><defs><pattern id="poolive" patternUnits="userSpaceOnUse" x="8.85" y="88" width="26.46" height="46.25"><path d="M2 23h1v1.2h-1zM2 25.5h1v1.2h-1zM2 28h1v1.2h-1zM8.6 23h1v1.2h-1zM8.6 25.5h1v1.2h-1zM8.6 28h1v1.2h-1zM15.2 23h1v1.2h-1zM15.2 25.5h1v1.2h-1zM15.2 28h1v1.2h-1zM21.8 23h1v1.2h-1zM21.8 25.5h1v1.2h-1zM21.8 28h1v1.2h-1zM3 31h3v1.1h-3zM16 31h3v1.1h-3zM8 34h4v1.1h-4zM20 37h3v1.1h-3z" fill="#1e2009"/></pattern><pattern id="pogreen" patternUnits="userSpaceOnUse" x="8.85" y="88" width="26.46" height="46.25"><path d="M2 23h1v1.2h-1zM2 25.5h1v1.2h-1zM2 28h1v1.2h-1zM8.6 23h1v1.2h-1zM8.6 25.5h1v1.2h-1zM8.6 28h1v1.2h-1zM15.2 23h1v1.2h-1zM15.2 25.5h1v1.2h-1zM15.2 28h1v1.2h-1zM21.8 23h1v1.2h-1zM21.8 25.5h1v1.2h-1zM21.8 28h1v1.2h-1zM3 31h3v1.1h-3zM16 31h3v1.1h-3zM8 34h4v1.1h-4zM20 37h3v1.1h-3z" fill="#10220c"/></pattern><pattern id="pcbrown" patternUnits="userSpaceOnUse" x="8.85" y="88" width="26.46" height="46.25"><path d="M0.6 22.5h1.2v6h-1.2zM4.6 22.5h1.2v6h-1.2zM9.5 22.5h1.2v6h-1.2zM15.5 22.5h1.2v6h-1.2zM20 22.5h1.2v6h-1.2zM23.8 22.5h1.2v6h-1.2zM2.5 36h1.2v6h-1.2zM8.5 36h1.2v6h-1.2zM15.5 36h1.2v6h-1.2z" fill="#1b120e"/></pattern><pattern id="pcpink" patternUnits="userSpaceOnUse" x="8.85" y="88" width="26.46" height="46.25"><path d="M0.6 22.5h1.2v6h-1.2zM4.6 22.5h1.2v6h-1.2zM9.5 22.5h1.2v6h-1.2zM15.5 22.5h1.2v6h-1.2zM20 22.5h1.2v6h-1.2zM23.8 22.5h1.2v6h-1.2zM2.5 36h1.2v6h-1.2zM8.5 36h1.2v6h-1.2zM15.5 36h1.2v6h-1.2z" fill="#312023"/></pattern></defs><rect x="35.3" y="432.8" width="105.8" height="23" fill="url(#poolive)"/><rect x="141.2" y="432.8" width="211.7" height="23" fill="url(#poolive)"/><rect x="352.8" y="432.8" width="211.7" height="23" fill="url(#poolive)"/><rect x="564.5" y="432.8" width="185.2" height="23" fill="url(#poolive)"/><rect x="749.7" y="432.8" width="211.7" height="23" fill="url(#poolive)"/><rect x="961.4" y="432.8" width="211.7" height="23" fill="url(#poolive)"/><rect x="1173.1" y="432.8" width="211.7" height="23" fill="url(#poolive)"/><rect x="1384.8" y="432.8" width="185.2" height="23" fill="url(#poolive)"/><rect x="1570" y="432.8" width="211.7" height="23" fill="url(#poolive)"/><rect x="1781.7" y="432.8" width="198.3" height="23" fill="url(#poolive)"/><rect x="35.3" y="571.5" width="105.8" height="23" fill="url(#pogreen)"/><rect x="141.2" y="571.5" width="211.7" height="23" fill="url(#pogreen)"/><rect x="352.8" y="571.5" width="211.7" height="23" fill="url(#pogreen)"/><rect x="564.5" y="571.5" width="185.2" height="23" fill="url(#pogreen)"/><rect x="749.7" y="571.5" width="211.7" height="23" fill="url(#pogreen)"/><rect x="961.4" y="571.5" width="211.7" height="23" fill="url(#pogreen)"/><rect x="1173.1" y="571.5" width="211.7" height="23" fill="url(#pogreen)"/><rect x="1384.8" y="571.5" width="185.2" height="23" fill="url(#pogreen)"/><rect x="1570" y="571.5" width="211.7" height="23" fill="url(#pogreen)"/><rect x="1781.7" y="571.5" width="198.3" height="23" fill="url(#pogreen)"/><rect x="35.3" y="479" width="105.8" height="23" fill="url(#pcbrown)"/><rect x="141.2" y="479" width="211.7" height="23" fill="url(#pcbrown)"/><rect x="352.8" y="479" width="211.7" height="23" fill="url(#pcbrown)"/><rect x="564.5" y="479" width="185.2" height="23" fill="url(#pcbrown)"/><rect x="749.7" y="479" width="211.7" height="23" fill="url(#pcbrown)"/><rect x="961.4" y="479" width="211.7" height="23" fill="url(#pcbrown)"/><rect x="1173.1" y="479" width="211.7" height="23" fill="url(#pcbrown)"/><rect x="1384.8" y="479" width="185.2" height="23" fill="url(#pcbrown)"/><rect x="1570" y="479" width="211.7" height="23" fill="url(#pcbrown)"/><rect x="1781.7" y="479" width="198.3" height="23" fill="url(#pcbrown)"/><rect x="35.3" y="617.8" width="105.8" height="23" fill="url(#pcpink)"/><rect x="141.2" y="617.8" width="211.7" height="23" fill="url(#pcpink)"/><rect x="352.8" y="617.8" width="211.7" height="23" fill="url(#pcpink)"/><rect x="564.5" y="617.8" width="185.2" height="23" fill="url(#pcpink)"/><rect x="749.7" y="617.8" width="211.7" height="23" fill="url(#pcpink)"/><rect x="961.4" y="617.8" width="211.7" height="23" fill="url(#pcpink)"/><rect x="1173.1" y="617.8" width="211.7" height="23" fill="url(#pcpink)"/><rect x="1384.8" y="617.8" width="185.2" height="23" fill="url(#pcpink)"/><rect x="1570" y="617.8" width="211.7" height="23" fill="url(#pcpink)"/><rect x="1781.7" y="617.8" width="198.3" height="23" fill="url(#pcpink)"/><path d="M591 109v23M617 109v23M644 109v23M670 109v23M697 109v23M723 109v23M1200 109v23M1226 109v23M1252 109v23M1279 109v23M1305 109v23M1332 109v23M1358 109v23M1411 109v23M1438 109v23M1464 109v23M1491 109v23M1517 109v23M1544 109v23M1570 109v23M591 155v23M617 155v23M644 155v23M670 155v23M697 155v23M723 155v23M776 155v23M803 155v23M829 155v23M856 155v23M882 155v23M908 155v23M935 155v23M1200 155v23M1226 155v23M1252 155v23M1279 155v23M1305 155v23M1332 155v23M1358 155v23M1411 155v23M1438 155v23M1464 155v23M1491 155v23M1517 155v23M1544 155v23M1596 155v23M1623 155v23M1649 155v23M1676 155v23M1702 155v23M1729 155v23M1755 155v23M1808 155v23M1835 155v23M1861 155v23M1888 155v23M1914 155v23M1940 155v23M776 202v23M803 202v23M829 202v23M856 202v23M882 202v23M908 202v23M935 202v23M1596 202v23M1623 202v23M1649 202v23M1676 202v23M1702 202v23M1729 202v23M1755 202v23M1782 202v23M1808 202v23M1835 202v23M1861 202v23M1888 202v23M1914 202v23M1940 202v23M1967 202v23M776 248v23M803 248v23M829 248v23M856 248v23M882 248v23M908 248v23M935 248v23M1596 248v23M1623 248v23M1649 248v23M1676 248v23M1702 248v23M1729 248v23M1755 248v23M1782 248v23M1808 248v23M1835 248v23M1861 248v23M1888 248v23M1914 248v23M1940 248v23M1967 248v23M62 294v23M88 294v23M115 294v23M141 294v23M168 294v23M194 294v23M221 294v23M247 294v23M273 294v23M300 294v23M326 294v23M379 294v23M406 294v23M432 294v23M459 294v23M485 294v23M512 294v23M538 294v23M591 294v23M617 294v23M644 294v23M670 294v23M697 294v23M723 294v23M988 294v23M1014 294v23M1041 294v23M1067 294v23M1094 294v23M1120 294v23M1147 294v23M1200 294v23M1226 294v23M1252 294v23M1279 294v23M1305 294v23M1332 294v23M1358 294v23M1411 294v23M1438 294v23M1464 294v23M1491 294v23M1517 294v23M1544 294v23M1808 294v23M1835 294v23M1861 294v23M1888 294v23M1914 294v23M1940 294v23M1967 294v23M591 340v23M617 340v23M644 340v23M670 340v23M697 340v23M723 340v23M1200 340v23M1226 340v23M1252 340v23M1279 340v23M1305 340v23M1332 340v23M1358 340v23M1411 340v23M1438 340v23M1464 340v23M1491 340v23M1517 340v23M1544 340v23M62 433v23M88 433v23M115 433v23M168 433v23M194 433v23M221 433v23M247 433v23M273 433v23M300 433v23M326 433v23M379 433v23M406 433v23M432 433v23M459 433v23M485 433v23M512 433v23M538 433v23M591 433v23M617 433v23M644 433v23M670 433v23M697 433v23M723 433v23M776 433v23M803 433v23M829 433v23M856 433v23M882 433v23M908 433v23M935 433v23M988 433v23M1014 433v23M1041 433v23M1067 433v23M1094 433v23M1120 433v23M1147 433v23M1200 433v23M1226 433v23M1252 433v23M1279 433v23M1305 433v23M1332 433v23M1358 433v23M1411 433v23M1438 433v23M1464 433v23M1491 433v23M1517 433v23M1544 433v23M1596 433v23M1623 433v23M1649 433v23M1676 433v23M1702 433v23M1729 433v23M1755 433v23M1808 433v23M1835 433v23M1861 433v23M1888 433v23M1914 433v23M1940 433v23M1967 433v23M62 479v23M88 479v23M115 479v23M168 479v23M194 479v23M221 479v23M247 479v23M273 479v23M300 479v23M326 479v23M379 479v23M406 479v23M432 479v23M459 479v23M485 479v23M512 479v23M538 479v23M591 479v23M617 479v23M644 479v23M670 479v23M697 479v23M723 479v23M776 479v23M803 479v23M829 479v23M856 479v23M882 479v23M908 479v23M935 479v23M988 479v23M1014 479v23M1041 479v23M1067 479v23M1094 479v23M1120 479v23M1147 479v23M1200 479v23M1226 479v23M1252 479v23M1279 479v23M1305 479v23M1332 479v23M1358 479v23M1411 479v23M1438 479v23M1464 479v23M1491 479v23M1517 479v23M1544 479v23M1596 479v23M1623 479v23M1649 479v23M1676 479v23M1702 479v23M1729 479v23M1755 479v23M1808 479v23M1835 479v23M1861 479v23M1888 479v23M1914 479v23M1940 479v23M1967 479v23M62 572v23M88 572v23M115 572v23M168 572v23M194 572v23M221 572v23M247 572v23M273 572v23M300 572v23M326 572v23M379 572v23M406 572v23M432 572v23M459 572v23M485 572v23M512 572v23M538 572v23M591 572v23M617 572v23M644 572v23M670 572v23M697 572v23M723 572v23M776 572v23M803 572v23M829 572v23M856 572v23M882 572v23M908 572v23M935 572v23M988 572v23M1014 572v23M1041 572v23M1067 572v23M1094 572v23M1120 572v23M1147 572v23M1200 572v23M1226 572v23M1252 572v23M1279 572v23M1305 572v23M1332 572v23M1358 572v23M1411 572v23M1438 572v23M1464 572v23M1491 572v23M1517 572v23M1544 572v23M1596 572v23M1623 572v23M1649 572v23M1676 572v23M1702 572v23M1729 572v23M1755 572v23M1808 572v23M1835 572v23M1861 572v23M1888 572v23M1914 572v23M1940 572v23M1967 572v23M62 618v23M88 618v23M115 618v23M168 618v23M194 618v23M221 618v23M247 618v23M273 618v23M300 618v23M326 618v23M379 618v23M406 618v23M432 618v23M459 618v23M485 618v23M512 618v23M538 618v23M591 618v23M617 618v23M644 618v23M670 618v23M697 618v23M723 618v23M776 618v23M803 618v23M829 618v23M856 618v23M882 618v23M908 618v23M935 618v23M988 618v23M1014 618v23M1041 618v23M1067 618v23M1094 618v23M1120 618v23M1147 618v23M1200 618v23M1226 618v23M1252 618v23M1279 618v23M1305 618v23M1332 618v23M1358 618v23M1411 618v23M1438 618v23M1464 618v23M1491 618v23M1517 618v23M1544 618v23M1596 618v23M1623 618v23M1649 618v23M1676 618v23M1702 618v23M1729 618v23M1755 618v23M1808 618v23M1835 618v23M1861 618v23M1888 618v23M1914 618v23M1940 618v23M1967 618v23M35 664v23M62 664v23M88 664v23M1967 664v23M1993 664v23M2020 664v23M35 710v23M62 710v23M88 710v23M115 710v23M141 710v23M168 710v23M194 710v23M221 710v23M247 710v23M273 710v23M300 710v23M326 710v23M1888 710v23M1914 710v23M1940 710v23M1967 710v23M1993 710v23M2020 710v23M2046 710v23M35 756v23M62 756v23M88 756v23M115 756v23M141 756v23M168 756v23M194 756v23M221 756v23M247 756v23M273 756v23M300 756v23M326 756v23M1888 756v23M1914 756v23M1940 756v23M1967 756v23M1993 756v23M2020 756v23M2046 756v23M617 803v23M644 803v23M670 803v23M1226 803v23M1252 803v23M1279 803v23M1438 803v23M1464 803v23M1491 803v23M565 849v23M591 849v23M670 849v23M723 849v23M1173 849v23M1200 849v23M1279 849v23M1332 849v23M1385 849v23M1411 849v23M1491 849v23M1544 849v23M670 942v23M697 942v23M1279 942v23M1305 942v23M1491 942v23M1517 942v23M62 988v23M168 988v23M194 988v23M221 988v23M300 988v23M353 988v23M379 988v23M406 988v23M459 988v23M485 988v23M512 988v23M988 988v23M1014 988v23M1041 988v23M247 1080v23M273 1080v23M300 1080v23M326 1080v23M459 1080v23M485 1080v23M512 1080v23M538 1080v23M1067 1080v23M1094 1080v23M1120 1080v23M1147 1080v23M591 1126v23M644 1126v23M697 1126v23M776 1126v23M829 1126v23M882 1126v23M1200 1126v23M1252 1126v23M1305 1126v23M1411 1126v23M1464 1126v23M1517 1126v23M1596 1126v23M1649 1126v23M1702 1126v23M1808 1126v23M1861 1126v23M1914 1126v23M62 1173v23M115 1173v23M538 1173v23M935 1173v23M988 1173v23M1147 1173v23M1358 1173v23M1755 1173v23M1808 1173v23" stroke="rgba(0,0,0,0.42)" stroke-width="1" transform="translate(0.5 0)"/><path d="M564.5 108.5h185.2M1173.1 108.5h211.7M1384.8 108.5h211.2M564.5 154.5h185.2M749.7 154.5h211.7M1173.1 154.5h211.7M1384.8 154.5h185.2M1570 154.5h211.7M1781.7 154.5h185.2M749.7 200.5h211.7M1570 200.5h422.6M749.7 247.5h211.7M1570 247.5h422.6M35.3 293.5h317.5M352.8 293.5h211.7M564.5 293.5h185.2M961.4 293.5h211.7M1173.1 293.5h211.7M1384.8 293.5h185.2M1781.7 293.5h210.9M564.5 339.5h185.2M1173.1 339.5h211.7M1384.8 339.5h185.2M35.3 432.5h105.8M141.2 432.5h211.7M352.8 432.5h211.7M564.5 432.5h185.2M749.7 432.5h211.7M961.4 432.5h211.7M1173.1 432.5h211.7M1384.8 432.5h185.2M1570 432.5h211.7M1781.7 432.5h198.3M35.3 478.5h105.8M141.2 478.5h211.7M352.8 478.5h211.7M564.5 478.5h185.2M749.7 478.5h211.7M961.4 478.5h211.7M1173.1 478.5h211.7M1384.8 478.5h185.2M1570 478.5h211.7M1781.7 478.5h198.3M35.3 570.5h105.8M141.2 570.5h211.7M352.8 570.5h211.7M564.5 570.5h185.2M749.7 570.5h211.7M961.4 570.5h211.7M1173.1 570.5h211.7M1384.8 570.5h185.2M1570 570.5h211.7M1781.7 570.5h198.3M35.3 617.5h105.8M141.2 617.5h211.7M352.8 617.5h211.7M564.5 617.5h185.2M749.7 617.5h211.7M961.4 617.5h211.7M1173.1 617.5h211.7M1384.8 617.5h185.2M1570 617.5h211.7M1781.7 617.5h198.3M8.8 663.5h105.9M1941.3 663.5h104.5M8.8 709.5h323.1M1861.2 709.5h206.8M8.8 756.5h323.1M1861.2 756.5h211.3M591.8 802.5h98.1M1200.5 802.5h97.4M1411.8 802.5h99.2M537.6 848.5h68.4M643.1 848.5h34.2M703 848.5h38.2M1147.4 848.5h67.3M1252.3 848.5h33.5M1312.4 848.5h37.2M1358.7 848.5h67.3M1465.4 848.5h31.2M1523.3 848.5h38.7M565.6 894.5h25.5M1174 894.5h25.6M1385.6 894.5h25.1M591.8 940.5h11.4M658.4 940.5h52.6M723.6 940.5h12.3M1200.5 940.5h11.6M1268 940.5h51.3M1332.5 940.5h11.9M1411.8 940.5h11.9M1480 940.5h52M1543.4 940.5h13.2M35.7 987.5h52.4M142 987.5h104.8M291 987.5h35.7M326.7 987.5h105.7M432.4 987.5h104.6M961.9 987.5h104.8M353 1033.5h24.9M220.2 1079.5h119.4M432.4 1079.5h118.2M1041.4 1079.5h118.4M566.1 1126.5h51.3M617.4 1126.5h52.6M670 1126.5h53.5M723.5 1126.5h12.4M751 1126.5h51.5M802.5 1126.5h53.8M856.3 1126.5h52.3M908.6 1126.5h26M1174.8 1126.5h51.8M1226.6 1126.5h52M1278.6 1126.5h54M1332.6 1126.5h12.1M1385.8 1126.5h52.2M1438 1126.5h53.4M1491.4 1126.5h51.5M1571 1126.5h52.8M1623.8 1126.5h52.7M1676.5 1126.5h52.4M1728.9 1126.5h27.2M1782.8 1126.5h52.2M1835 1126.5h52.2M1887.2 1126.5h53.8M1941 1126.5h26.4M35.7 1172.5h52.3M88 1172.5h53.2M511.9 1172.5h52.8M908.6 1172.5h53.2M961.8 1172.5h52.7M1121 1172.5h52.5M1332.6 1172.5h52.7M1728.9 1172.5h53.4M1782.3 1172.5h52" stroke="rgba(0,0,0,0.3)" stroke-width="1"/><path d="M565.5 88v44M1173.5 88v44M1385.5 88v44M565.5 134.2v44M750.5 134.2v44M1173.5 134.2v44M1385.5 134.2v44M1570.5 134.2v44M1782.5 134.2v44M750.5 180.5v44M1570.5 180.5v44M750.5 226.8v44M1570.5 226.8v44M35.5 273v44M353.5 273v44M565.5 273v44M961.5 273v44M1173.5 273v44M1385.5 273v44M1782.5 273v44M565.5 319.2v44M1173.5 319.2v44M1385.5 319.2v44M35.5 411.8v44M141.5 411.8v44M353.5 411.8v44M565.5 411.8v44M750.5 411.8v44M961.5 411.8v44M1173.5 411.8v44M1385.5 411.8v44M1570.5 411.8v44M1782.5 411.8v44M35.5 458v44M141.5 458v44M353.5 458v44M565.5 458v44M750.5 458v44M961.5 458v44M1173.5 458v44M1385.5 458v44M1570.5 458v44M1782.5 458v44M35.5 550.5v44M141.5 550.5v44M353.5 550.5v44M565.5 550.5v44M750.5 550.5v44M961.5 550.5v44M1173.5 550.5v44M1385.5 550.5v44M1570.5 550.5v44M1782.5 550.5v44M35.5 596.8v44M141.5 596.8v44M353.5 596.8v44M565.5 596.8v44M750.5 596.8v44M961.5 596.8v44M1173.5 596.8v44M1385.5 596.8v44M1570.5 596.8v44M1782.5 596.8v44M9.5 643v44M1941.5 643v44M9.5 689.2v44M1861.5 689.2v44M9.5 735.5v44M1861.5 735.5v44M592.5 781.8v44M1200.5 781.8v44M1412.5 781.8v44M538.5 828v44M643.5 828v44M703.5 828v44M1147.5 828v44M1252.5 828v44M1312.5 828v44M1359.5 828v44M1465.5 828v44M1523.5 828v44M566.5 874.2v44M1174.5 874.2v44M1386.5 874.2v44M592.5 920.5v44M658.5 920.5v44M724.5 920.5v44M1200.5 920.5v44M1268.5 920.5v44M1332.5 920.5v44M1412.5 920.5v44M1480.5 920.5v44M1543.5 920.5v44M36.5 966.8v44M142.5 966.8v44M291.5 966.8v44M327.5 966.8v44M432.5 966.8v44M962.5 966.8v44M353.5 1013v44M220.5 1059.2v44M432.5 1059.2v44M1041.5 1059.2v44M566.5 1105.5v44M617.5 1105.5v44M670.5 1105.5v44M724.5 1105.5v44M751.5 1105.5v44M802.5 1105.5v44M856.5 1105.5v44M909.5 1105.5v44M1175.5 1105.5v44M1227.5 1105.5v44M1279.5 1105.5v44M1333.5 1105.5v44M1386.5 1105.5v44M1438.5 1105.5v44M1491.5 1105.5v44M1571.5 1105.5v44M1624.5 1105.5v44M1676.5 1105.5v44M1729.5 1105.5v44M1783.5 1105.5v44M1835.5 1105.5v44M1887.5 1105.5v44M1941.5 1105.5v44M36.5 1151.8v44M88.5 1151.8v44M512.5 1151.8v44M909.5 1151.8v44M962.5 1151.8v44M1121.5 1151.8v44M1333.5 1151.8v44M1729.5 1151.8v44M1782.5 1151.8v44" stroke="rgba(0,0,0,0.35)" stroke-width="1"/><path d="M643.9 110h2.4v1.5h-2.4zM647.2 112.3h2.4v1.5h-2.4zM650.5 114.6h2.4v1.5h-2.4zM653.8 116.9h2.4v1.5h-2.4zM657.1 119.2h2.4v1.5h-2.4zM660.4 121.5h2.4v1.5h-2.4zM663.7 123.8h2.4v1.5h-2.4zM667 126.1h2.4v1.5h-2.4zM670.4 128h26v1.4h-26z" fill="#052420"/><path d="M1252.5 110h2.4v1.5h-2.4zM1255.8 112.3h2.4v1.5h-2.4zM1259.1 114.6h2.4v1.5h-2.4zM1262.4 116.9h2.4v1.5h-2.4zM1265.7 119.2h2.4v1.5h-2.4zM1269 121.5h2.4v1.5h-2.4zM1272.3 123.8h2.4v1.5h-2.4zM1275.6 126.1h2.4v1.5h-2.4zM1278.9 128h26v1.4h-26z" fill="#052420"/><path d="M1464.2 110h2.4v1.5h-2.4zM1467.5 112.3h2.4v1.5h-2.4zM1470.8 114.6h2.4v1.5h-2.4zM1474.1 116.9h2.4v1.5h-2.4zM1477.4 119.2h2.4v1.5h-2.4zM1480.7 121.5h2.4v1.5h-2.4zM1484 123.8h2.4v1.5h-2.4zM1487.2 126.1h2.4v1.5h-2.4zM1490.6 122h9v1.4h-9zM1500.6 119h8v1.4h-8zM1517.1 116h26v1.4h-26z" fill="#052420"/><path d="M566.5 157.2h1v1.6h-1zM566.5 160.8h1v1.4h-1zM573.1 157.2h1v1.6h-1zM573.1 160.8h1v1.4h-1zM579.8 157.2h1v1.6h-1zM579.8 160.8h1v1.4h-1zM586.4 157.2h1v1.6h-1zM586.4 160.8h1v1.4h-1zM593 157.2h1v1.6h-1zM593 160.8h1v1.4h-1zM599.6 157.2h1v1.6h-1zM599.6 160.8h1v1.4h-1zM606.2 157.2h1v1.6h-1zM606.2 160.8h1v1.4h-1zM612.9 157.2h1v1.6h-1zM612.9 160.8h1v1.4h-1zM619.5 157.2h1v1.6h-1zM619.5 160.8h1v1.4h-1zM626.1 157.2h1v1.6h-1zM626.1 160.8h1v1.4h-1zM632.7 157.2h1v1.6h-1zM632.7 160.8h1v1.4h-1zM639.3 157.2h1v1.6h-1zM639.3 160.8h1v1.4h-1zM646 157.2h1v1.6h-1zM646 160.8h1v1.4h-1zM652.6 157.2h1v1.6h-1zM652.6 160.8h1v1.4h-1zM659.2 157.2h1v1.6h-1zM659.2 160.8h1v1.4h-1zM665.8 157.2h1v1.6h-1zM665.8 160.8h1v1.4h-1zM672.4 157.2h1v1.6h-1zM672.4 160.8h1v1.4h-1zM679.1 157.2h1v1.6h-1zM679.1 160.8h1v1.4h-1zM685.7 157.2h1v1.6h-1zM685.7 160.8h1v1.4h-1zM692.3 157.2h1v1.6h-1zM692.3 160.8h1v1.4h-1zM698.9 157.2h1v1.6h-1zM698.9 160.8h1v1.4h-1zM705.5 157.2h1v1.6h-1zM705.5 160.8h1v1.4h-1zM712.2 157.2h1v1.6h-1zM712.2 160.8h1v1.4h-1zM718.8 157.2h1v1.6h-1zM718.8 160.8h1v1.4h-1zM725.4 157.2h1v1.6h-1zM725.4 160.8h1v1.4h-1zM732 157.2h1v1.6h-1zM732 160.8h1v1.4h-1zM738.6 157.2h1v1.6h-1zM738.6 160.8h1v1.4h-1zM745.3 157.2h1v1.6h-1zM745.3 160.8h1v1.4h-1z" fill="#1b1d08"/><path d="M751.7 157.2h1v1.6h-1zM751.7 160.8h1v1.4h-1zM758.4 157.2h1v1.6h-1zM758.4 160.8h1v1.4h-1zM765 157.2h1v1.6h-1zM765 160.8h1v1.4h-1zM771.6 157.2h1v1.6h-1zM771.6 160.8h1v1.4h-1zM778.2 157.2h1v1.6h-1zM778.2 160.8h1v1.4h-1zM784.8 157.2h1v1.6h-1zM784.8 160.8h1v1.4h-1zM791.5 157.2h1v1.6h-1zM791.5 160.8h1v1.4h-1zM798.1 157.2h1v1.6h-1zM798.1 160.8h1v1.4h-1zM804.7 157.2h1v1.6h-1zM804.7 160.8h1v1.4h-1zM811.3 157.2h1v1.6h-1zM811.3 160.8h1v1.4h-1zM817.9 157.2h1v1.6h-1zM817.9 160.8h1v1.4h-1zM824.6 157.2h1v1.6h-1zM824.6 160.8h1v1.4h-1zM831.2 157.2h1v1.6h-1zM831.2 160.8h1v1.4h-1zM837.8 157.2h1v1.6h-1zM837.8 160.8h1v1.4h-1zM844.4 157.2h1v1.6h-1zM844.4 160.8h1v1.4h-1zM851 157.2h1v1.6h-1zM851 160.8h1v1.4h-1zM857.7 157.2h1v1.6h-1zM857.7 160.8h1v1.4h-1zM864.3 157.2h1v1.6h-1zM864.3 160.8h1v1.4h-1zM870.9 157.2h1v1.6h-1zM870.9 160.8h1v1.4h-1zM877.5 157.2h1v1.6h-1zM877.5 160.8h1v1.4h-1zM884.1 157.2h1v1.6h-1zM884.1 160.8h1v1.4h-1zM890.8 157.2h1v1.6h-1zM890.8 160.8h1v1.4h-1zM897.4 157.2h1v1.6h-1zM897.4 160.8h1v1.4h-1zM904 157.2h1v1.6h-1zM904 160.8h1v1.4h-1zM910.6 157.2h1v1.6h-1zM910.6 160.8h1v1.4h-1zM917.2 157.2h1v1.6h-1zM917.2 160.8h1v1.4h-1zM923.9 157.2h1v1.6h-1zM923.9 160.8h1v1.4h-1zM930.5 157.2h1v1.6h-1zM930.5 160.8h1v1.4h-1zM937.1 157.2h1v1.6h-1zM937.1 160.8h1v1.4h-1zM943.7 157.2h1v1.6h-1zM943.7 160.8h1v1.4h-1zM950.3 157.2h1v1.6h-1zM950.3 160.8h1v1.4h-1zM957 157.2h1v1.6h-1zM957 160.8h1v1.4h-1z" fill="#1b1d08"/><path d="M1175.1 157.2h1v1.6h-1zM1175.1 160.8h1v1.4h-1zM1181.7 157.2h1v1.6h-1zM1181.7 160.8h1v1.4h-1zM1188.3 157.2h1v1.6h-1zM1188.3 160.8h1v1.4h-1zM1194.9 157.2h1v1.6h-1zM1194.9 160.8h1v1.4h-1zM1201.6 157.2h1v1.6h-1zM1201.6 160.8h1v1.4h-1zM1208.2 157.2h1v1.6h-1zM1208.2 160.8h1v1.4h-1zM1214.8 157.2h1v1.6h-1zM1214.8 160.8h1v1.4h-1zM1221.4 157.2h1v1.6h-1zM1221.4 160.8h1v1.4h-1zM1228 157.2h1v1.6h-1zM1228 160.8h1v1.4h-1zM1234.7 157.2h1v1.6h-1zM1234.7 160.8h1v1.4h-1zM1241.3 157.2h1v1.6h-1zM1241.3 160.8h1v1.4h-1zM1247.9 157.2h1v1.6h-1zM1247.9 160.8h1v1.4h-1zM1254.5 157.2h1v1.6h-1zM1254.5 160.8h1v1.4h-1zM1261.1 157.2h1v1.6h-1zM1261.1 160.8h1v1.4h-1zM1267.8 157.2h1v1.6h-1zM1267.8 160.8h1v1.4h-1zM1274.4 157.2h1v1.6h-1zM1274.4 160.8h1v1.4h-1zM1281 157.2h1v1.6h-1zM1281 160.8h1v1.4h-1zM1287.6 157.2h1v1.6h-1zM1287.6 160.8h1v1.4h-1zM1294.2 157.2h1v1.6h-1zM1294.2 160.8h1v1.4h-1zM1300.9 157.2h1v1.6h-1zM1300.9 160.8h1v1.4h-1zM1307.5 157.2h1v1.6h-1zM1307.5 160.8h1v1.4h-1zM1314.1 157.2h1v1.6h-1zM1314.1 160.8h1v1.4h-1zM1320.7 157.2h1v1.6h-1zM1320.7 160.8h1v1.4h-1zM1327.3 157.2h1v1.6h-1zM1327.3 160.8h1v1.4h-1zM1334 157.2h1v1.6h-1zM1334 160.8h1v1.4h-1zM1340.6 157.2h1v1.6h-1zM1340.6 160.8h1v1.4h-1zM1347.2 157.2h1v1.6h-1zM1347.2 160.8h1v1.4h-1zM1353.8 157.2h1v1.6h-1zM1353.8 160.8h1v1.4h-1zM1360.4 157.2h1v1.6h-1zM1360.4 160.8h1v1.4h-1zM1367.1 157.2h1v1.6h-1zM1367.1 160.8h1v1.4h-1zM1373.7 157.2h1v1.6h-1zM1373.7 160.8h1v1.4h-1zM1380.3 157.2h1v1.6h-1zM1380.3 160.8h1v1.4h-1z" fill="#1b1d08"/><path d="M1386.8 157.2h1v1.6h-1zM1386.8 160.8h1v1.4h-1zM1393.4 157.2h1v1.6h-1zM1393.4 160.8h1v1.4h-1zM1400 157.2h1v1.6h-1zM1400 160.8h1v1.4h-1zM1406.6 157.2h1v1.6h-1zM1406.6 160.8h1v1.4h-1zM1413.2 157.2h1v1.6h-1zM1413.2 160.8h1v1.4h-1zM1419.9 157.2h1v1.6h-1zM1419.9 160.8h1v1.4h-1zM1426.5 157.2h1v1.6h-1zM1426.5 160.8h1v1.4h-1zM1433.1 157.2h1v1.6h-1zM1433.1 160.8h1v1.4h-1zM1439.7 157.2h1v1.6h-1zM1439.7 160.8h1v1.4h-1zM1446.3 157.2h1v1.6h-1zM1446.3 160.8h1v1.4h-1zM1453 157.2h1v1.6h-1zM1453 160.8h1v1.4h-1zM1459.6 157.2h1v1.6h-1zM1459.6 160.8h1v1.4h-1zM1466.2 157.2h1v1.6h-1zM1466.2 160.8h1v1.4h-1zM1472.8 157.2h1v1.6h-1zM1472.8 160.8h1v1.4h-1zM1479.4 157.2h1v1.6h-1zM1479.4 160.8h1v1.4h-1zM1486.1 157.2h1v1.6h-1zM1486.1 160.8h1v1.4h-1zM1492.7 157.2h1v1.6h-1zM1492.7 160.8h1v1.4h-1zM1499.3 157.2h1v1.6h-1zM1499.3 160.8h1v1.4h-1zM1505.9 157.2h1v1.6h-1zM1505.9 160.8h1v1.4h-1zM1512.5 157.2h1v1.6h-1zM1512.5 160.8h1v1.4h-1zM1519.2 157.2h1v1.6h-1zM1519.2 160.8h1v1.4h-1zM1525.8 157.2h1v1.6h-1zM1525.8 160.8h1v1.4h-1zM1532.4 157.2h1v1.6h-1zM1532.4 160.8h1v1.4h-1zM1539 157.2h1v1.6h-1zM1539 160.8h1v1.4h-1zM1545.6 157.2h1v1.6h-1zM1545.6 160.8h1v1.4h-1zM1552.3 157.2h1v1.6h-1zM1552.3 160.8h1v1.4h-1zM1558.9 157.2h1v1.6h-1zM1558.9 160.8h1v1.4h-1zM1565.5 157.2h1v1.6h-1zM1565.5 160.8h1v1.4h-1z" fill="#1b1d08"/><path d="M1572 157.2h1v1.6h-1zM1572 160.8h1v1.4h-1zM1578.6 157.2h1v1.6h-1zM1578.6 160.8h1v1.4h-1zM1585.2 157.2h1v1.6h-1zM1585.2 160.8h1v1.4h-1zM1591.8 157.2h1v1.6h-1zM1591.8 160.8h1v1.4h-1zM1598.5 157.2h1v1.6h-1zM1598.5 160.8h1v1.4h-1zM1605.1 157.2h1v1.6h-1zM1605.1 160.8h1v1.4h-1zM1611.7 157.2h1v1.6h-1zM1611.7 160.8h1v1.4h-1zM1618.3 157.2h1v1.6h-1zM1618.3 160.8h1v1.4h-1zM1624.9 157.2h1v1.6h-1zM1624.9 160.8h1v1.4h-1zM1631.6 157.2h1v1.6h-1zM1631.6 160.8h1v1.4h-1zM1638.2 157.2h1v1.6h-1zM1638.2 160.8h1v1.4h-1zM1644.8 157.2h1v1.6h-1zM1644.8 160.8h1v1.4h-1zM1651.4 157.2h1v1.6h-1zM1651.4 160.8h1v1.4h-1zM1658 157.2h1v1.6h-1zM1658 160.8h1v1.4h-1zM1664.7 157.2h1v1.6h-1zM1664.7 160.8h1v1.4h-1zM1671.3 157.2h1v1.6h-1zM1671.3 160.8h1v1.4h-1zM1677.9 157.2h1v1.6h-1zM1677.9 160.8h1v1.4h-1zM1684.5 157.2h1v1.6h-1zM1684.5 160.8h1v1.4h-1zM1691.1 157.2h1v1.6h-1zM1691.1 160.8h1v1.4h-1zM1697.8 157.2h1v1.6h-1zM1697.8 160.8h1v1.4h-1zM1704.4 157.2h1v1.6h-1zM1704.4 160.8h1v1.4h-1zM1711 157.2h1v1.6h-1zM1711 160.8h1v1.4h-1zM1717.6 157.2h1v1.6h-1zM1717.6 160.8h1v1.4h-1zM1724.2 157.2h1v1.6h-1zM1724.2 160.8h1v1.4h-1zM1730.9 157.2h1v1.6h-1zM1730.9 160.8h1v1.4h-1zM1737.5 157.2h1v1.6h-1zM1737.5 160.8h1v1.4h-1zM1744.1 157.2h1v1.6h-1zM1744.1 160.8h1v1.4h-1zM1750.7 157.2h1v1.6h-1zM1750.7 160.8h1v1.4h-1zM1757.3 157.2h1v1.6h-1zM1757.3 160.8h1v1.4h-1zM1764 157.2h1v1.6h-1zM1764 160.8h1v1.4h-1zM1770.6 157.2h1v1.6h-1zM1770.6 160.8h1v1.4h-1zM1777.2 157.2h1v1.6h-1zM1777.2 160.8h1v1.4h-1z" fill="#1b1d08"/><path d="M1783.7 157.2h1v1.6h-1zM1783.7 160.8h1v1.4h-1zM1790.3 157.2h1v1.6h-1zM1790.3 160.8h1v1.4h-1zM1796.9 157.2h1v1.6h-1zM1796.9 160.8h1v1.4h-1zM1803.5 157.2h1v1.6h-1zM1803.5 160.8h1v1.4h-1zM1810.1 157.2h1v1.6h-1zM1810.1 160.8h1v1.4h-1zM1816.8 157.2h1v1.6h-1zM1816.8 160.8h1v1.4h-1zM1823.4 157.2h1v1.6h-1zM1823.4 160.8h1v1.4h-1zM1830 157.2h1v1.6h-1zM1830 160.8h1v1.4h-1zM1836.6 157.2h1v1.6h-1zM1836.6 160.8h1v1.4h-1zM1843.2 157.2h1v1.6h-1zM1843.2 160.8h1v1.4h-1zM1849.9 157.2h1v1.6h-1zM1849.9 160.8h1v1.4h-1zM1856.5 157.2h1v1.6h-1zM1856.5 160.8h1v1.4h-1zM1863.1 157.2h1v1.6h-1zM1863.1 160.8h1v1.4h-1zM1869.7 157.2h1v1.6h-1zM1869.7 160.8h1v1.4h-1zM1876.3 157.2h1v1.6h-1zM1876.3 160.8h1v1.4h-1zM1883 157.2h1v1.6h-1zM1883 160.8h1v1.4h-1zM1889.6 157.2h1v1.6h-1zM1889.6 160.8h1v1.4h-1zM1896.2 157.2h1v1.6h-1zM1896.2 160.8h1v1.4h-1zM1902.8 157.2h1v1.6h-1zM1902.8 160.8h1v1.4h-1zM1909.4 157.2h1v1.6h-1zM1909.4 160.8h1v1.4h-1zM1916.1 157.2h1v1.6h-1zM1916.1 160.8h1v1.4h-1zM1922.7 157.2h1v1.6h-1zM1922.7 160.8h1v1.4h-1zM1929.3 157.2h1v1.6h-1zM1929.3 160.8h1v1.4h-1zM1935.9 157.2h1v1.6h-1zM1935.9 160.8h1v1.4h-1zM1942.5 157.2h1v1.6h-1zM1942.5 160.8h1v1.4h-1zM1949.2 157.2h1v1.6h-1zM1949.2 160.8h1v1.4h-1zM1955.8 157.2h1v1.6h-1zM1955.8 160.8h1v1.4h-1zM1962.4 157.2h1v1.6h-1zM1962.4 160.8h1v1.4h-1z" fill="#1b1d08"/><path d="M781 210.3h3.7v1.3h-3.7zM788.4 213.9h2.7v1.3h-2.7zM786.1 212.1h2.4v1.3h-2.4zM779.6 211.5h2v1.3h-2zM781.9 209.2h2.1v1.3h-2.1zM815.3 212.6h2.6v1.3h-2.6zM807.7 209h3.9v1.3h-3.9zM818.9 211.6h3v1.3h-3zM820.7 219.9h2.8v1.3h-2.8zM811.6 208.9h3.9v1.3h-3.9zM842.3 218.5h2.7v1.3h-2.7zM834.3 209.7h3.4v1.3h-3.4zM843.5 214.2h3v1.3h-3zM843.7 215.1h3.5v1.3h-3.5zM848.2 207.9h2.2v1.3h-2.2zM896.8 217.4h1.4v1.3h-1.4zM890.5 217.5h3.4v1.3h-3.4zM898.1 211.9h3.5v1.3h-3.5zM899.2 216.9h1.8v1.3h-1.8zM893.5 211.4h3.1v1.3h-3.1zM927 213.1h2.3v1.3h-2.3zM923.6 210h3.8v1.3h-3.8zM926.6 215h3.9v1.3h-3.9zM915.7 217.7h3.1v1.3h-3.1zM924.4 209h2.1v1.3h-2.1zM947.6 213.3h1.9v1.3h-1.9zM949.2 218h1.3v1.3h-1.3zM943.5 218.5h2.3v1.3h-2.3zM949.4 214.6h1.1v1.3h-1.1zM940.1 216.7h1.2v1.3h-1.2z" fill="#19100d"/><path d="M1608.8 214.8h3.3v1.3h-3.3zM1606.4 215.7h1v1.3h-1zM1600.5 219.8h3.1v1.3h-3.1zM1600.1 211.3h1.4v1.3h-1.4zM1614.7 214.2h2.4v1.3h-2.4zM1628.6 213.4h2.3v1.3h-2.3zM1630.5 213.2h2.8v1.3h-2.8zM1637 216.2h2.1v1.3h-2.1zM1633.6 214.9h2.9v1.3h-2.9zM1630.6 220.2h2.3v1.3h-2.3zM1654.6 216.8h3.2v1.3h-3.2zM1653.2 209.2h2.8v1.3h-2.8zM1662.2 218.3h1v1.3h-1zM1657.8 215.4h2.5v1.3h-2.5zM1668.1 218.6h1.1v1.3h-1.1zM1720 217.2h2.6v1.3h-2.6zM1723 219.5h3.8v1.3h-3.8zM1711.1 210.3h2.9v1.3h-2.9zM1718.5 210.9h1.5v1.3h-1.5zM1709.2 219.4h1.3v1.3h-1.3zM1737.5 209h3.7v1.3h-3.7zM1744.3 210.4h3.8v1.3h-3.8zM1745.7 207.8h3.6v1.3h-3.6zM1738.5 212.8h2.5v1.3h-2.5zM1748 219.9h2.7v1.3h-2.7zM1764.3 214.7h3.9v1.3h-3.9zM1766.8 219.8h1.9v1.3h-1.9zM1771.4 215.9h3.3v1.3h-3.3zM1767.3 219.9h3v1.3h-3zM1765 211.8h2.4v1.3h-2.4zM1812.4 219.2h3.4v1.3h-3.4zM1825.4 217.3h1.9v1.3h-1.9zM1819.4 209.4h3v1.3h-3zM1828.2 219.5h3.5v1.3h-3.5zM1813.3 217.6h2.9v1.3h-2.9zM1853.6 214.6h3.1v1.3h-3.1zM1848.3 215.7h3.3v1.3h-3.3zM1845.7 211.4h1.4v1.3h-1.4zM1854.6 213h1.7v1.3h-1.7zM1851.9 211.6h3.2v1.3h-3.2zM1878.5 216.9h1.6v1.3h-1.6zM1873.6 208.6h3.9v1.3h-3.9zM1870.4 210.3h4v1.3h-4zM1875.9 218.2h1.3v1.3h-1.3zM1867.2 214.8h3.1v1.3h-3.1zM1922.3 214.8h3.7v1.3h-3.7zM1925.4 219.8h1v1.3h-1zM1928.5 213.4h2.2v1.3h-2.2zM1932.2 218.8h1.1v1.3h-1.1zM1922.1 211.9h1.7v1.3h-1.7zM1949.6 208h3.4v1.3h-3.4zM1945.9 207.6h1.3v1.3h-1.3zM1947.2 208.3h3.5v1.3h-3.5zM1954.3 209.7h4v1.3h-4zM1958.1 209.4h1.1v1.3h-1.1zM1976.8 219.6h2.8v1.3h-2.8zM1985 208.5h3.1v1.3h-3.1zM1972.4 213.6h2.4v1.3h-2.4zM1970 214.3h3.3v1.3h-3.3zM1981.3 217.2h2.1v1.3h-2.1z" fill="#19100d"/><path d="M786.5 258.8h2.6v1.3h-2.6zM793.4 265.8h2.4v1.3h-2.4zM784.8 257.5h3.3v1.3h-3.3zM792.7 263h4v1.3h-4zM791.7 260.7h2v1.3h-2zM809.1 266.4h3.2v1.3h-3.2zM815.6 256.6h3.6v1.3h-3.6zM814.9 264.5h3.3v1.3h-3.3zM810.8 257.2h3.1v1.3h-3.1zM807 258.3h3.8v1.3h-3.8zM846.1 259.5h3.5v1.3h-3.5zM845.5 258.3h2.5v1.3h-2.5zM835.7 256.7h2v1.3h-2zM839.6 260.4h4v1.3h-4zM840 261.2h2.1v1.3h-2.1zM898 257.1h1.2v1.3h-1.2zM886.5 255h3v1.3h-3zM894.7 263.7h2.3v1.3h-2.3zM888.2 264.3h2.4v1.3h-2.4zM897.4 257.6h2.9v1.3h-2.9zM924 255h2.3v1.3h-2.3zM927.7 255.1h2.3v1.3h-2.3zM916.6 255.3h3v1.3h-3zM923.1 260.1h3.2v1.3h-3.2zM918.2 256.6h1.1v1.3h-1.1zM949.2 254.4h3.1v1.3h-3.1zM954.7 263.6h2v1.3h-2zM953.5 262.8h3.9v1.3h-3.9zM955.7 258h2.1v1.3h-2.1zM945.1 265.8h1.3v1.3h-1.3z" fill="#24110a"/><path d="M1605 260.5h1.2v1.3h-1.2zM1604.8 264h1.9v1.3h-1.9zM1600.8 256.5h3.5v1.3h-3.5zM1599.8 265h3.9v1.3h-3.9zM1616.3 263.7h1.2v1.3h-1.2zM1639.9 255.4h1.8v1.3h-1.8zM1641.2 258.7h2.3v1.3h-2.3zM1634.1 257.6h4v1.3h-4zM1630.5 258.6h1.5v1.3h-1.5zM1639 263.9h1v1.3h-1zM1657.5 263.4h3.3v1.3h-3.3zM1655.7 255.8h3.4v1.3h-3.4zM1668.7 261.6h2.3v1.3h-2.3zM1657.7 262.5h2.5v1.3h-2.5zM1668.2 254.2h3.8v1.3h-3.8zM1721.1 262.6h3.8v1.3h-3.8zM1706.5 264.4h2.7v1.3h-2.7zM1713 263.5h3v1.3h-3zM1719.1 256h3.8v1.3h-3.8zM1720.1 266.6h3.8v1.3h-3.8zM1746.3 261h1.6v1.3h-1.6zM1734.3 258.4h1.6v1.3h-1.6zM1733 266h1.9v1.3h-1.9zM1735.5 264.1h3.8v1.3h-3.8zM1737.8 259.9h1.8v1.3h-1.8zM1773.8 265.1h1.4v1.3h-1.4zM1764.6 262.2h2.8v1.3h-2.8zM1764.7 260.7h2.2v1.3h-2.2zM1766.7 265h2.8v1.3h-2.8zM1767.6 255.9h2.4v1.3h-2.4zM1829 259.4h2.8v1.3h-2.8zM1815.8 258.2h2.9v1.3h-2.9zM1818.5 253.9h2.5v1.3h-2.5zM1820 265.2h1.8v1.3h-1.8zM1822.1 257.8h1.6v1.3h-1.6zM1851.7 257.2h3v1.3h-3zM1847.1 264.8h2.8v1.3h-2.8zM1853.8 258.8h3.9v1.3h-3.9zM1838.1 254h3.6v1.3h-3.6zM1838.2 263.9h2v1.3h-2zM1878.1 259.3h2v1.3h-2zM1875.8 263.6h2.2v1.3h-2.2zM1866.3 260.1h3.1v1.3h-3.1zM1866.7 261.9h3.4v1.3h-3.4zM1868.4 262.6h3.1v1.3h-3.1zM1931.5 265h3.6v1.3h-3.6zM1923.2 259.5h2.1v1.3h-2.1zM1917.4 257.5h1.8v1.3h-1.8zM1930.9 255.8h3.8v1.3h-3.8zM1919.9 259.2h3.2v1.3h-3.2zM1957.3 259.9h2.5v1.3h-2.5zM1960.9 258.7h3.1v1.3h-3.1zM1953.3 259.6h1v1.3h-1zM1952.3 256.2h1.9v1.3h-1.9zM1943.9 260.5h3.6v1.3h-3.6zM1974.5 257h2.5v1.3h-2.5zM1977.1 256.4h1v1.3h-1zM1975 264.5h4v1.3h-4zM1976.6 259h1.9v1.3h-1.9zM1985.2 266.2h3.2v1.3h-3.2z" fill="#24110a"/><path d="M36.3 311h16v1.3h-16zM53.3 309.5h7v1.3h-7zM62.8 307.8h16v1.3h-16zM79.8 306.3h7v1.3h-7zM89.2 304.6h16v1.3h-16zM106.2 303.1h7v1.3h-7zM115.7 301.4h16v1.3h-16zM132.7 299.9h7v1.3h-7zM248 311h16v1.3h-16zM265 309.5h7v1.3h-7zM274.4 307.8h16v1.3h-16zM291.4 306.3h7v1.3h-7zM300.9 304.6h16v1.3h-16zM317.9 303.1h7v1.3h-7zM327.4 301.4h16v1.3h-16zM344.4 299.9h7v1.3h-7z" fill="#273757"/><path d="M459.7 311h16v1.3h-16zM476.7 309.5h7v1.3h-7zM486.1 307.8h16v1.3h-16zM503.1 306.3h7v1.3h-7zM512.6 304.6h16v1.3h-16zM529.6 303.1h7v1.3h-7zM539 301.4h16v1.3h-16zM556 299.9h7v1.3h-7z" fill="#273757"/><path d="M566.5 304.2h13.3v1.1h-13.3zM582.8 303h8v1.1h-8zM593.8 301.7h11.4v1.1h-11.4zM608.2 299.2h6.6v1.1h-6.6zM617.8 301.5h11.8v1.1h-11.8zM632.6 299h7.1v1.1h-7.1zM642.7 299.5h11.3v1.1h-11.3zM657 301.1h12.2v1.1h-12.2zM672.2 301.2h8.3v1.1h-8.3zM683.4 299h7.4v1.1h-7.4zM693.8 300.3h6.9v1.1h-6.9zM703.7 301.7h9.6v1.1h-9.6zM716.4 299.8h7.1v1.1h-7.1zM726.5 300.1h8.8v1.1h-8.8zM738.3 299.8h9.4v1.1h-9.4z" fill="#273757"/><path d="M1068.2 311h16v1.3h-16zM1085.2 309.5h7v1.3h-7zM1094.7 307.8h16v1.3h-16zM1111.7 306.3h7v1.3h-7zM1121.2 304.6h16v1.3h-16zM1138.2 303.1h7v1.3h-7zM1147.6 301.4h16v1.3h-16zM1164.6 299.9h7v1.3h-7z" fill="#273757"/><path d="M1175.1 304.1h8.8v1.1h-8.8zM1186.8 305.4h8.4v1.1h-8.4zM1198.3 305.5h6.8v1.1h-6.8zM1208.1 307.5h10.8v1.1h-10.8zM1221.9 306.3h6.2v1.1h-6.2zM1231.1 307.7h6.8v1.1h-6.8zM1240.9 306.8h10.3v1.1h-10.3zM1254.2 308.3h5.9v1.1h-5.9zM1263.2 310.4h6v1.1h-6zM1272.1 312h7.4v1.1h-7.4zM1282.5 310.7h11.4v1.1h-11.4zM1297 310h9.3v1.1h-9.3zM1309.3 308.3h9v1.1h-9zM1321.3 305.5h9.3v1.1h-9.3zM1333.7 305.2h6.6v1.1h-6.6zM1343.3 303.8h8.1v1.1h-8.1zM1354.3 304.4h9.9v1.1h-9.9zM1367.3 301.9h5.8v1.1h-5.8zM1376.1 300h5.8v1.1h-5.8z" fill="#273757"/><path d="M1386.8 304.9h13.6v1.1h-13.6zM1403.4 302.5h11.6v1.1h-11.6zM1418 304.5h6v1.1h-6zM1427 303.8h10.8v1.1h-10.8zM1440.7 304.9h10.1v1.1h-10.1zM1453.8 306.6h13.6v1.1h-13.6zM1470.5 305.6h7.2v1.1h-7.2zM1480.7 303.2h5.1v1.1h-5.1zM1488.8 305.6h12.9v1.1h-12.9zM1504.7 305.7h6.8v1.1h-6.8zM1514.5 307.9h10v1.1h-10zM1527.5 308.7h8v1.1h-8zM1538.4 308.5h11.4v1.1h-11.4zM1552.8 308.7h6.6v1.1h-6.6zM1562.4 310.4h5.5v1.1h-5.5z" fill="#273757"/><path d="M1783.7 308.3h5.7v1.1h-5.7zM1792.4 306.7h7.8v1.1h-7.8zM1803.2 304.9h12.8v1.1h-12.8zM1819.1 305.8h6.5v1.1h-6.5zM1828.5 307.2h6.6v1.1h-6.6zM1838.2 304.4h11.2v1.1h-11.2zM1852.4 304h13.7v1.1h-13.7zM1869.1 301.2h12.1v1.1h-12.1zM1884.2 303.3h10.9v1.1h-10.9zM1898.1 303.9h6.7v1.1h-6.7zM1907.7 302.2h6.7v1.1h-6.7zM1917.5 301.1h9.7v1.1h-9.7zM1930.2 299.5h6.2v1.1h-6.2zM1939.3 301.6h12.3v1.1h-12.3zM1954.7 303h13.3v1.1h-13.3zM1971 305.7h13.5v1.1h-13.5zM1987.5 304.5h3.1v1.1h-3.1z" fill="#273757"/><path d="M568.5 342.2h3v1.2h-3zM580.5 342.2h3v1.2h-3zM595 347.2h3v1.2h-3zM607 347.2h3v1.2h-3zM621.4 352.2h3v1.2h-3zM633.4 352.2h3v1.2h-3zM647.9 357.2h3v1.2h-3zM659.9 357.2h3v1.2h-3zM674.4 342.2h3v1.2h-3zM686.4 342.2h3v1.2h-3zM700.8 347.2h3v1.2h-3zM712.8 347.2h3v1.2h-3zM727.3 352.2h3v1.2h-3zM739.3 352.2h3v1.2h-3z" fill="#1b1d08"/><path d="M1177.1 342.2h3v1.2h-3zM1189.1 342.2h3v1.2h-3zM1203.5 347.2h3v1.2h-3zM1215.5 347.2h3v1.2h-3zM1230 352.2h3v1.2h-3zM1242 352.2h3v1.2h-3zM1256.5 357.2h3v1.2h-3zM1268.5 357.2h3v1.2h-3zM1282.9 342.2h3v1.2h-3zM1294.9 342.2h3v1.2h-3zM1309.4 347.2h3v1.2h-3zM1321.4 347.2h3v1.2h-3zM1335.8 352.2h3v1.2h-3zM1347.8 352.2h3v1.2h-3zM1362.3 357.2h3v1.2h-3zM1374.3 357.2h3v1.2h-3z" fill="#1b1d08"/><path d="M1388.8 342.2h3v1.2h-3zM1400.8 342.2h3v1.2h-3zM1415.2 347.2h3v1.2h-3zM1427.2 347.2h3v1.2h-3zM1441.7 352.2h3v1.2h-3zM1453.7 352.2h3v1.2h-3zM1468.2 357.2h3v1.2h-3zM1480.2 357.2h3v1.2h-3zM1494.6 342.2h3v1.2h-3zM1506.6 342.2h3v1.2h-3zM1521.1 347.2h3v1.2h-3zM1533.1 347.2h3v1.2h-3zM1547.5 352.2h3v1.2h-3zM1559.5 352.2h3v1.2h-3z" fill="#1b1d08"/><path d="M9.8 672.9l1.5 -4.5 1.5 4.7 1.5 -2.5 1.5 2.5 1.5 -0.3 1.5 -4.9 1.5 5 1.5 -1.9 1.5 1 1.5 0 1.5 -0.2 1.5 1.1 1.5 -3.4 1.5 3.5 1.5 -0.2 1.5 0.3 1.5 -0.4 1.5 -0.5 1.5 -3.4 1.5 3.5 1.5 0.7 1.5 -0.3 1.5 -4.8 1.5 5.1 1.5 -2 1.5 1.3 1.5 -1.5 1.5 1.7 1.5 -1.9 1.5 1.2 1.5 -0.9 1.5 -2 1.5 2.5 1.5 1.7 1.5 0.1 1.5 -4.6 1.5 3.4 1.5 1 1.5 -4.5 1.5 2.9 1.5 -1 1.5 -1.3 1.5 3.6 1.5 -0.2 1.5 -3.3 1.5 3.9 1.5 -2.9 1.5 3 1.5 -2.4 1.5 -0.1 1.5 -2.1 1.5 1 1.5 2.4 1.5 1.1 1.5 0.1 1.5 -1.3 1.5 0.1 1.5 1.3 1.5 -4.2 1.5 2.9 1.5 -1.2 1.5 2.3 1.5 -0.1 1.5 0.3 1.5 -0.6 1.5 0.2 1.5 -0.6 1.5 0.2 1.5 -2.9v9.8l-1.5 -2.9 -1.5 0.2 -1.5 -0.6 -1.5 0.2 -1.5 -0.6 -1.5 0.3 -1.5 -0.1 -1.5 2.3 -1.5 -1.2 -1.5 2.9 -1.5 -4.2 -1.5 1.3 -1.5 0.1 -1.5 -1.3 -1.5 0.1 -1.5 1.1 -1.5 2.4 -1.5 1 -1.5 -2.1 -1.5 -0.1 -1.5 -2.4 -1.5 3 -1.5 -2.9 -1.5 3.9 -1.5 -3.3 -1.5 -0.2 -1.5 3.6 -1.5 -1.3 -1.5 -1 -1.5 2.9 -1.5 -4.5 -1.5 1 -1.5 3.4 -1.5 -4.6 -1.5 0.1 -1.5 1.7 -1.5 2.5 -1.5 -2 -1.5 -0.9 -1.5 1.2 -1.5 -1.9 -1.5 1.7 -1.5 -1.5 -1.5 1.3 -1.5 -2 -1.5 5.1 -1.5 -4.8 -1.5 -0.3 -1.5 0.7 -1.5 3.5 -1.5 -3.4 -1.5 -0.5 -1.5 -0.4 -1.5 0.3 -1.5 -0.2 -1.5 3.5 -1.5 -3.4 -1.5 1.1 -1.5 -0.2 -1.5 0 -1.5 1 -1.5 -1.9 -1.5 5 -1.5 -4.9 -1.5 -0.3 -1.5 2.5 -1.5 -2.5 -1.5 4.7 -1.5 -4.5z" fill="#2c1c0a"/><path d="M1942.3 671.9l1.5 1.2 1.5 -0.1 1.5 -4.1 1.5 1.2 1.5 3.1 1.5 -0.7 1.5 -2.7 1.5 1.9 1.5 -1.7 1.5 -0 1.5 2.1 1.5 -3.5 1.5 4.5 1.5 -3.9 1.5 1.9 1.5 2.1 1.5 -4.9 1.5 4.9 1.5 -2.4 1.5 0.9 1.5 0.9 1.5 -0 1.5 0.6 1.5 -0 1.5 -0.5 1.5 -0.7 1.5 0.6 1.5 -2.9 1.5 2.8 1.5 0.7 1.5 -0.5 1.5 0.5 1.5 -0.1 1.5 -0.2 1.5 -1.8 1.5 1.4 1.5 -4.4 1.5 4.4 1.5 0.5 1.5 0.2 1.5 -2.1 1.5 -0.9 1.5 2.3 1.5 -0.5 1.5 -2.3 1.5 3.5 1.5 -2.7 1.5 2.7 1.5 0.1 1.5 -0.1 1.5 -2.1 1.5 1.2 1.5 0.2 1.5 -2.8 1.5 -0.4 1.5 3 1.5 -2.6 1.5 3.3 1.5 -3.3 1.5 0.9 1.5 0.6 1.5 2 1.5 -1.5 1.5 -1.4 1.5 -1.8 1.5 4.2 1.5 -4.3 1.5 3.7v5.4l-1.5 3.7 -1.5 -4.3 -1.5 4.2 -1.5 -1.8 -1.5 -1.4 -1.5 -1.5 -1.5 2 -1.5 0.6 -1.5 0.9 -1.5 -3.3 -1.5 3.3 -1.5 -2.6 -1.5 3 -1.5 -0.4 -1.5 -2.8 -1.5 0.2 -1.5 1.2 -1.5 -2.1 -1.5 -0.1 -1.5 0.1 -1.5 2.7 -1.5 -2.7 -1.5 3.5 -1.5 -2.3 -1.5 -0.5 -1.5 2.3 -1.5 -0.9 -1.5 -2.1 -1.5 0.2 -1.5 0.5 -1.5 4.4 -1.5 -4.4 -1.5 1.4 -1.5 -1.8 -1.5 -0.2 -1.5 -0.1 -1.5 0.5 -1.5 -0.5 -1.5 0.7 -1.5 2.8 -1.5 -2.9 -1.5 0.6 -1.5 -0.7 -1.5 -0.5 -1.5 -0 -1.5 0.6 -1.5 -0 -1.5 0.9 -1.5 0.9 -1.5 -2.4 -1.5 4.9 -1.5 -4.9 -1.5 2.1 -1.5 1.9 -1.5 -3.9 -1.5 4.5 -1.5 -3.5 -1.5 2.1 -1.5 -0 -1.5 -1.7 -1.5 1.9 -1.5 -2.7 -1.5 -0.7 -1.5 3.1 -1.5 1.2 -1.5 -4.1 -1.5 -0.1 -1.5 1.2z" fill="#2c1c0a"/><path d="M9.8 719l3 -0.5 3 0.4 3 -0.2 3 0.3 3 -0 3 -0.5 3 0.3 3 -0.1 3 0 3 0 3 0 3 0.3 3 -0.3 3 0.3 3 -0 3 -0 3 -0 3 -0 3 -0.4 3 0.1 3 0.3 3 -0 3 -0.5 3 0.5 3 -0.1 3 0.1 3 -0.2 3 0.2 3 -0.2 3 0 3 -0.2 3 -0.4 3 -0.1 3 0.4 3 0.5 3 -0.5 3 0 3 0.3 3 -0.5 3 -0.1 3 -0.2 3 -0.2 3 0.2 3 0.2 3 -0.4 3 0.4 3 -0.3 3 0.4 3 -0.2 3 -0.2 3 -0.1 3 -0 3 -0 3 0.3 3 0.4 3 -0 3 -0 3 0.5 3 -0.4 3 -0 3 -0.2 3 0.3 3 0.3 3 0.2 3 -0 3 -0 3 -0 3 -0 3 -0.4 3 -0.4 3 0.3 3 0.1 3 0.3 3 -0.2 3 -0.5 3 0.3 3 -0.3 3 0.2 3 0.4 3 -0.3 3 0.2 3 0.1 3 -0 3 -0 3 -0 3 -0 3 -0 3 -0.1 3 0.1 3 -0 3 -0 3 -0 3 -0 3 0 3 -0.3 3 -0 3 -0.2 3 -0.5 3 0.5 3 0.5 3 0.1 3 -0 3 -0.1 3 -0.3 3 0.2 3 -0.5 3 0.5v3.9l-3 0.5 -3 -0.5 -3 0.2 -3 -0.3 -3 -0.1 -3 0 -3 0.1 -3 0.5 -3 0.5 -3 -0.5 -3 -0.2 -3 -0 -3 -0.3 -3 0 -3 -0 -3 0 -3 0 -3 0 -3 0.1 -3 -0.1 -3 0 -3 0 -3 0 -3 0 -3 0 -3 0.1 -3 0.2 -3 -0.3 -3 0.4 -3 0.2 -3 -0.3 -3 0.3 -3 -0.5 -3 -0.2 -3 0.3 -3 0.1 -3 0.3 -3 -0.4 -3 -0.4 -3 0 -3 0 -3 0 -3 0 -3 0.2 -3 0.3 -3 0.3 -3 -0.2 -3 -0 -3 -0.4 -3 0.5 -3 -0 -3 -0 -3 0.4 -3 0.3 -3 0 -3 0 -3 -0.1 -3 -0.2 -3 -0.2 -3 0.4 -3 -0.3 -3 0.4 -3 -0.4 -3 0.2 -3 0.2 -3 -0.2 -3 -0.2 -3 -0.1 -3 -0.5 -3 0.3 -3 0 -3 -0.5 -3 0.5 -3 0.4 -3 -0.1 -3 -0.4 -3 -0.2 -3 0 -3 -0.2 -3 0.2 -3 -0.2 -3 0.1 -3 -0.1 -3 0.5 -3 -0.5 -3 0 -3 0.3 -3 0.1 -3 -0.4 -3 0 -3 0 -3 0 -3 0 -3 0.3 -3 -0.3 -3 0.3 -3 0 -3 0 -3 0 -3 -0.1 -3 0.3 -3 -0.5 -3 0 -3 0.3 -3 -0.2 -3 0.4 -3 -0.5z" fill="#2c2b1b"/><path d="M1862.2 718.9l3 0 3 -0 3 0 3 -0.4 3 -0.3 3 -0.5 3 0.4 3 0.3 3 -0 3 -0.2 3 -0.2 3 0.4 3 0.1 3 0.4 3 -0.3 3 -0.4 3 0.1 3 0.3 3 -0 3 0 3 -0.3 3 0.3 3 0.3 3 -0.5 3 -0 3 0.4 3 0.1 3 -0 3 -0 3 -0 3 -0 3 -0.1 3 0.1 3 -0.3 3 -0.4 3 -0.3 3 -0.1 3 0.2 3 -0.1 3 -0.1 3 -0 3 -0 3 -0 3 -0 3 -0 3 0.1 3 -0.1 3 0.2 3 -0.2 3 -0 3 -0 3 -0 3 0.3 3 0.2 3 -0.4 3 0.1 3 -0.2 3 -0 3 0.3 3 -0.2 3 0.3 3 -0.3 3 -0 3 0.1 3 -0.1 3 -0 3 0 3 -0v6l-3 -0 -3 0 -3 0 -3 -0.1 -3 0.1 -3 -0 -3 -0.3 -3 0.3 -3 -0.2 -3 0.3 -3 0 -3 -0.2 -3 0.1 -3 -0.4 -3 0.2 -3 0.3 -3 0 -3 0 -3 0 -3 -0.2 -3 0.2 -3 -0.1 -3 0.1 -3 0 -3 0 -3 0 -3 0 -3 0 -3 -0.1 -3 -0.1 -3 0.2 -3 -0.1 -3 -0.3 -3 -0.4 -3 -0.3 -3 0.1 -3 -0.1 -3 0 -3 0 -3 0 -3 0 -3 0.1 -3 0.4 -3 -0 -3 -0.5 -3 0.3 -3 0.3 -3 -0.3 -3 0 -3 -0 -3 0.3 -3 0.1 -3 -0.4 -3 -0.3 -3 0.4 -3 0.1 -3 0.4 -3 -0.2 -3 -0.2 -3 -0 -3 0.3 -3 0.4 -3 -0.5 -3 -0.3 -3 -0.4 -3 0 -3 -0 -3 0z" fill="#2c2b1b"/><path d="M9.8 765.2l3 -0.5 3 0.4 3 -0.2 3 0.3 3 -0 3 -0.5 3 0.3 3 -0.1 3 0 3 0 3 0 3 0.3 3 -0.3 3 0.3 3 -0 3 -0 3 -0 3 -0 3 -0.4 3 0.1 3 0.3 3 -0 3 -0.5 3 0.5 3 -0.1 3 0.1 3 -0.2 3 0.2 3 -0.2 3 0 3 -0.2 3 -0.4 3 -0.1 3 0.4 3 0.5 3 -0.5 3 0 3 0.3 3 -0.5 3 -0.1 3 -0.2 3 -0.2 3 0.2 3 0.2 3 -0.4 3 0.4 3 -0.3 3 0.4 3 -0.2 3 -0.2 3 -0.1 3 -0 3 -0 3 0.3 3 0.4 3 -0 3 -0 3 0.5 3 -0.4 3 -0 3 -0.2 3 0.3 3 0.3 3 0.2 3 -0 3 -0 3 -0 3 -0 3 -0.4 3 -0.4 3 0.3 3 0.1 3 0.3 3 -0.2 3 -0.5 3 0.3 3 -0.3 3 0.2 3 0.4 3 -0.3 3 0.2 3 0.1 3 -0 3 -0 3 -0 3 -0 3 -0 3 -0.1 3 0.1 3 -0 3 -0 3 -0 3 -0 3 0 3 -0.3 3 -0 3 -0.2 3 -0.5 3 0.5 3 0.5 3 0.1 3 -0 3 -0.1 3 -0.3 3 0.2 3 -0.5 3 0.5v3.9l-3 0.5 -3 -0.5 -3 0.2 -3 -0.3 -3 -0.1 -3 0 -3 0.1 -3 0.5 -3 0.5 -3 -0.5 -3 -0.2 -3 -0 -3 -0.3 -3 0 -3 -0 -3 0 -3 0 -3 0 -3 0.1 -3 -0.1 -3 0 -3 0 -3 0 -3 0 -3 0 -3 0.1 -3 0.2 -3 -0.3 -3 0.4 -3 0.2 -3 -0.3 -3 0.3 -3 -0.5 -3 -0.2 -3 0.3 -3 0.1 -3 0.3 -3 -0.4 -3 -0.4 -3 0 -3 0 -3 0 -3 0 -3 0.2 -3 0.3 -3 0.3 -3 -0.2 -3 -0 -3 -0.4 -3 0.5 -3 -0 -3 -0 -3 0.4 -3 0.3 -3 0 -3 0 -3 -0.1 -3 -0.2 -3 -0.2 -3 0.4 -3 -0.3 -3 0.4 -3 -0.4 -3 0.2 -3 0.2 -3 -0.2 -3 -0.2 -3 -0.1 -3 -0.5 -3 0.3 -3 0 -3 -0.5 -3 0.5 -3 0.4 -3 -0.1 -3 -0.4 -3 -0.2 -3 0 -3 -0.2 -3 0.2 -3 -0.2 -3 0.1 -3 -0.1 -3 0.5 -3 -0.5 -3 0 -3 0.3 -3 0.1 -3 -0.4 -3 0 -3 0 -3 0 -3 0 -3 0.3 -3 -0.3 -3 0.3 -3 0 -3 0 -3 0 -3 -0.1 -3 0.3 -3 -0.5 -3 0 -3 0.3 -3 -0.2 -3 0.4 -3 -0.5z" fill="#2c2b1b"/><path d="M1862.2 765.2l3 0 3 -0 3 0 3 -0.4 3 -0.3 3 -0.5 3 0.4 3 0.3 3 -0 3 -0.2 3 -0.2 3 0.4 3 0.1 3 0.4 3 -0.3 3 -0.4 3 0.1 3 0.3 3 -0 3 0 3 -0.3 3 0.3 3 0.3 3 -0.5 3 -0 3 0.4 3 0.1 3 -0 3 -0 3 -0 3 -0 3 -0.1 3 0.1 3 -0.3 3 -0.4 3 -0.3 3 -0.1 3 0.2 3 -0.1 3 -0.1 3 -0 3 -0 3 -0 3 -0 3 -0 3 0.1 3 -0.1 3 0.2 3 -0.2 3 -0 3 -0 3 -0 3 0.3 3 0.2 3 -0.4 3 0.1 3 -0.2 3 -0 3 0.3 3 -0.2 3 0.3 3 -0.3 3 -0 3 0.1 3 -0.1 3 -0 3 0 3 -0 3 0.1v5.9l-3 0.1 -3 -0 -3 0 -3 0 -3 -0.1 -3 0.1 -3 -0 -3 -0.3 -3 0.3 -3 -0.2 -3 0.3 -3 0 -3 -0.2 -3 0.1 -3 -0.4 -3 0.2 -3 0.3 -3 0 -3 0 -3 0 -3 -0.2 -3 0.2 -3 -0.1 -3 0.1 -3 0 -3 0 -3 0 -3 0 -3 0 -3 -0.1 -3 -0.1 -3 0.2 -3 -0.1 -3 -0.3 -3 -0.4 -3 -0.3 -3 0.1 -3 -0.1 -3 0 -3 0 -3 0 -3 0 -3 0.1 -3 0.4 -3 -0 -3 -0.5 -3 0.3 -3 0.3 -3 -0.3 -3 0 -3 -0 -3 0.3 -3 0.1 -3 -0.4 -3 -0.3 -3 0.4 -3 0.1 -3 0.4 -3 -0.2 -3 -0.2 -3 -0 -3 0.3 -3 0.4 -3 -0.5 -3 -0.3 -3 -0.4 -3 0 -3 -0 -3 0z" fill="#2c2b1b"/><path d="M592.8 813.2l1.5 -0 1.5 -0 1.5 -0 1.5 -0.8 1.5 -0.4 1.5 -0.2 1.5 -1.3 1.5 1.4 1.5 1.2 1.5 -0 1.5 -0 1.5 -0 1.5 -0 1.5 -0 1.5 -0 1.5 -0 1.5 -0.3 1.5 -0.5 1.5 -0.6 1.5 -0.5 1.5 -0.3 1.5 0.2 1.5 0.4 1.5 0.6 1.5 0.5 1.5 0.4 1.5 0 1.5 -0 1.5 -0 1.5 -0 1.5 -0 1.5 -0 1.5 -0 1.5 -0 1.5 -0 1.5 -0 1.5 -0.3 1.5 -0.5 1.5 -0.4 1.5 0 1.5 0.4 1.5 0.5 1.5 0.2 1.5 -0 1.5 -0 1.5 -0.2 1.5 -0.5 1.5 -0.5 1.5 -0.2 1.5 0.2 1.5 0.5 1.5 0.4 1.5 -1.2 1.5 -0.2 1.5 1.1 1.5 -0.7 1.5 -0.7 1.5 -0.3 1.5 0.1 1.5 0.6 1.5 0.7 1.5 0.6 1.5 0.3 1.5 -0v1l-1.5 0 -1.5 0.3 -1.5 0.6 -1.5 0.7 -1.5 0.6 -1.5 0.1 -1.5 -0.3 -1.5 -0.7 -1.5 -0.7 -1.5 1.1 -1.5 -0.2 -1.5 -1.2 -1.5 0.4 -1.5 0.5 -1.5 0.2 -1.5 -0.2 -1.5 -0.5 -1.5 -0.5 -1.5 -0.2 -1.5 0 -1.5 0 -1.5 0.2 -1.5 0.5 -1.5 0.4 -1.5 0 -1.5 -0.4 -1.5 -0.5 -1.5 -0.3 -1.5 0 -1.5 0 -1.5 0 -1.5 0 -1.5 0 -1.5 0 -1.5 0 -1.5 0 -1.5 0 -1.5 0 -1.5 0.4 -1.5 0.5 -1.5 0.6 -1.5 0.4 -1.5 0.2 -1.5 -0.3 -1.5 -0.5 -1.5 -0.6 -1.5 -0.5 -1.5 -0.3 -1.5 0 -1.5 0 -1.5 0 -1.5 0 -1.5 0 -1.5 0 -1.5 0 -1.5 1.2 -1.5 1.4 -1.5 -1.3 -1.5 -0.2 -1.5 -0.4 -1.5 -0.8 -1.5 0 -1.5 0 -1.5 0z" fill="#2b1406"/><path d="M1201.5 813.2l1.5 -0 1.5 -0 1.5 -0 1.5 -0 1.5 -0 1.5 -0 1.5 -0 1.5 -0 1.5 -0 1.5 -0 1.5 -0.3 1.5 -0.4 1.5 -0.4 1.5 -0.3 1.5 -0.1 1.5 0.1 1.5 0.3 1.5 0.4 1.5 0.4 1.5 0.3 1.5 -0 1.5 -0.3 1.5 -0.6 1.5 -0.5 1.5 0 1.5 0.5 1.5 0.6 1.5 0.3 1.5 -0 1.5 -0 1.5 -0 1.5 -0.6 1.5 -1.4 1.5 -0.5 1.5 0.9 1.5 -0.2 1.5 -0.7 1.5 0.2 1.5 0.9 1.5 1 1.5 0.4 1.5 -0.2 1.5 -1.9 1.5 0.6 1.5 1.2 1.5 -0.7 1.5 -0.8 1.5 -0.6 1.5 -0.2 1.5 0.3 1.5 0.7 1.5 0.8 1.5 0.6 1.5 0.2 1.5 -0 1.5 -0 1.5 -0 1.5 -0 1.5 -0 1.5 -0 1.5 -0 1.5 -0 1.5 -0v1l-1.5 0 -1.5 0 -1.5 0 -1.5 0 -1.5 0 -1.5 0 -1.5 0 -1.5 0 -1.5 0 -1.5 0.2 -1.5 0.6 -1.5 0.8 -1.5 0.7 -1.5 0.3 -1.5 -0.2 -1.5 -0.6 -1.5 -0.8 -1.5 -0.7 -1.5 1.2 -1.5 0.6 -1.5 -1.9 -1.5 -0.2 -1.5 0.4 -1.5 1 -1.5 0.9 -1.5 0.2 -1.5 -0.7 -1.5 -0.2 -1.5 0.9 -1.5 -0.5 -1.5 -1.4 -1.5 -0.6 -1.5 0 -1.5 0 -1.5 0 -1.5 0.3 -1.5 0.6 -1.5 0.5 -1.5 0 -1.5 -0.5 -1.5 -0.6 -1.5 -0.3 -1.5 0 -1.5 0.3 -1.5 0.4 -1.5 0.4 -1.5 0.3 -1.5 0.1 -1.5 -0.1 -1.5 -0.3 -1.5 -0.4 -1.5 -0.4 -1.5 -0.3 -1.5 0 -1.5 0 -1.5 0 -1.5 0 -1.5 0 -1.5 0 -1.5 0 -1.5 0 -1.5 0 -1.5 0z" fill="#2b1406"/><path d="M1412.8 813.2l1.5 -0 1.5 -0 1.5 -0 1.5 -0 1.5 -0 1.5 -0 1.5 -0 1.5 -0 1.5 -0 1.5 -0 1.5 -0 1.5 -0 1.5 -0 1.5 -0 1.5 -0 1.5 -0 1.5 -0 1.5 -0 1.5 -0 1.5 -0 1.5 -0 1.5 -0 1.5 -0 1.5 -0.6 1.5 -0.8 1.5 -0.6 1.5 0.1 1.5 0.7 1.5 0.8 1.5 0.4 1.5 -0 1.5 -0 1.5 -0 1.5 -0 1.5 -0 1.5 -0 1.5 -0 1.5 -0 1.5 -0 1.5 -0 1.5 -0 1.5 -0.7 1.5 -1.1 1.5 0.1 1.5 -0 1.5 -0.4 1.5 -0.1 1.5 0.2 1.5 0.5 1.5 0.6 1.5 -0 1.5 -0.1 1.5 0.2 1.5 0.4 1.5 0.3 1.5 -0.6 1.5 -0.2 1.5 0.4 1.5 0.6 1.5 -0.4 1.5 -1 1.5 -0.8 1.5 -0.1 1.5 0.7v4.2l-1.5 0.7 -1.5 -0.1 -1.5 -0.8 -1.5 -1 -1.5 -0.4 -1.5 0.6 -1.5 0.4 -1.5 -0.2 -1.5 -0.6 -1.5 0.3 -1.5 0.4 -1.5 0.2 -1.5 -0.1 -1.5 -0 -1.5 0.6 -1.5 0.5 -1.5 0.2 -1.5 -0.1 -1.5 -0.4 -1.5 -0 -1.5 0.1 -1.5 -1.1 -1.5 -0.7 -1.5 0 -1.5 0 -1.5 0 -1.5 0 -1.5 0 -1.5 0 -1.5 0 -1.5 0 -1.5 0 -1.5 0 -1.5 0 -1.5 0.4 -1.5 0.8 -1.5 0.7 -1.5 0.1 -1.5 -0.6 -1.5 -0.8 -1.5 -0.6 -1.5 0 -1.5 0 -1.5 0 -1.5 0 -1.5 0 -1.5 0 -1.5 0 -1.5 0 -1.5 0 -1.5 0 -1.5 0 -1.5 0 -1.5 0 -1.5 0 -1.5 0 -1.5 0 -1.5 0 -1.5 0 -1.5 0 -1.5 0 -1.5 0 -1.5 0 -1.5 0z" fill="#2b1406"/><path d="M538.6 859.5l1.5 -0 1.5 -0 1.5 -0 1.5 -0 1.5 -0 1.5 -0 1.5 -0.2 1.5 -0.6 1.5 -0.7 1.5 -0.6 1.5 -0.1 1.5 0.4 1.5 0.7 1.5 0.7 1.5 0.4 1.5 -0 1.5 -0 1.5 -0 1.5 -0 1.5 -0 1.5 -0.1 1.5 -0.4 1.5 -0.4 1.5 -0.3 1.5 -0 1.5 0.2 1.5 -0.3 1.5 -0.2 1.5 0.1 1.5 0.4 1.5 0.5 1.5 0.4 1.5 0.1 1.5 -0.1 1.5 -0.6 1.5 -0.7 1.5 -0.4 1.5 0.2 1.5 0.6 1.5 0.3 1.5 -0.8 1.5 0.1 1.5 0.9 1.5 0.5v1l-1.5 0.5 -1.5 0.9 -1.5 0.1 -1.5 -0.8 -1.5 0.3 -1.5 0.6 -1.5 0.2 -1.5 -0.4 -1.5 -0.7 -1.5 -0.6 -1.5 -0.1 -1.5 0.1 -1.5 0.4 -1.5 0.5 -1.5 0.4 -1.5 0.1 -1.5 -0.2 -1.5 -0.3 -1.5 0.2 -1.5 -0 -1.5 -0.3 -1.5 -0.4 -1.5 -0.4 -1.5 -0.1 -1.5 0 -1.5 0 -1.5 0 -1.5 0 -1.5 0 -1.5 0.4 -1.5 0.7 -1.5 0.7 -1.5 0.4 -1.5 -0.1 -1.5 -0.6 -1.5 -0.7 -1.5 -0.6 -1.5 -0.2 -1.5 0 -1.5 0 -1.5 0 -1.5 0 -1.5 0 -1.5 0z" fill="#2d290e"/><path d="M644.1 859.5l1.5 -0.1 1.5 -1.9 1.5 -0.2 1.5 1.5 1.5 0.7 1.5 -0 1.5 -0 1.5 -0 1.5 -0 1.5 -0 1.5 -0 1.5 -0 1.5 -0 1.5 -0 1.5 -0 1.5 -0 1.5 -0 1.5 -0 1.5 -0 1.5 -0 1.5 -0v1l-1.5 0 -1.5 0 -1.5 0 -1.5 0 -1.5 0 -1.5 0 -1.5 0 -1.5 0 -1.5 0 -1.5 0 -1.5 0 -1.5 0 -1.5 0 -1.5 0 -1.5 0 -1.5 0 -1.5 0.7 -1.5 1.5 -1.5 -0.2 -1.5 -1.9 -1.5 -0.1z" fill="#2d290e"/><path d="M704 859.5l1.5 -0 1.5 -0 1.5 -0 1.5 -0 1.5 -0 1.5 -0 1.5 -0 1.5 -0 1.5 -0 1.5 -0 1.5 -0 1.5 -0.3 1.5 -0.6 1.5 -0.6 1.5 -0.4 1.5 -0.1 1.5 -0.5 1.5 0.5 1.5 1.4 1.5 -0.4 1.5 -0.6 1.5 -0.4 1.5 0 1.5 0.4v4l-1.5 0.4 -1.5 0 -1.5 -0.4 -1.5 -0.6 -1.5 -0.4 -1.5 1.4 -1.5 0.5 -1.5 -0.5 -1.5 -0.1 -1.5 -0.4 -1.5 -0.6 -1.5 -0.6 -1.5 -0.3 -1.5 0 -1.5 0 -1.5 0 -1.5 0 -1.5 0 -1.5 0 -1.5 0 -1.5 0 -1.5 0 -1.5 0 -1.5 0z" fill="#2d290e"/><path d="M1148.4 859.5l1.5 -0 1.5 -0 1.5 -0 1.5 -0 1.5 -0 1.5 -0 1.5 -0 1.5 -0 1.5 -0 1.5 -0 1.5 -0 1.5 -0 1.5 -0 1.5 -0 1.5 -0.5 1.5 -1.1 1.5 -0.5 1.5 0.7 1.5 1.1 1.5 0.2 1.5 -0 1.5 -0.7 1.5 -0.7 1.5 -0.3 1.5 0.3 1.5 0.7 1.5 -0.6 1.5 -0 1.5 -0.3 1.5 -0.4 1.5 -0.1 1.5 0.7 1.5 0.4 1.5 0.4 1.5 0.4 1.5 0.1 1.5 -0 1.5 -0 1.5 -0 1.5 -0 1.5 -0 1.5 -0 1.5 -0v1l-1.5 0 -1.5 0 -1.5 0 -1.5 0 -1.5 0 -1.5 0 -1.5 0 -1.5 0.1 -1.5 0.4 -1.5 0.4 -1.5 0.4 -1.5 0.7 -1.5 -0.1 -1.5 -0.4 -1.5 -0.3 -1.5 -0 -1.5 -0.6 -1.5 0.7 -1.5 0.3 -1.5 -0.3 -1.5 -0.7 -1.5 -0.7 -1.5 -0 -1.5 0.2 -1.5 1.1 -1.5 0.7 -1.5 -0.5 -1.5 -1.1 -1.5 -0.5 -1.5 0 -1.5 0 -1.5 0 -1.5 0 -1.5 0 -1.5 0 -1.5 0 -1.5 0 -1.5 0 -1.5 0 -1.5 0 -1.5 0 -1.5 0 -1.5 0z" fill="#2d290e"/><path d="M1253.3 857.8l1.5 -0.3 1.5 0.5 1.5 0.9 1.5 0.3 1.5 -0.8 1.5 -0.7 1.5 -0.1 1.5 0.7 1.5 0.9 1.5 0.5 1.5 -0 1.5 -0 1.5 -0 1.5 -0 1.5 -0 1.5 -0 1.5 -0 1.5 -0 1.5 -0 1.5 -0 1.5 -0v1l-1.5 0 -1.5 0 -1.5 0 -1.5 0 -1.5 0 -1.5 0 -1.5 0 -1.5 0 -1.5 0 -1.5 0 -1.5 0 -1.5 0.5 -1.5 0.9 -1.5 0.7 -1.5 -0.1 -1.5 -0.7 -1.5 -0.8 -1.5 0.3 -1.5 0.9 -1.5 0.5 -1.5 -0.3z" fill="#2d290e"/><path d="M1313.4 859.5l1.5 -0 1.5 -0 1.5 -0 1.5 -0.2 1.5 -0.6 1.5 -0.8 1.5 -0.6 1.5 -0.2 1.5 0.3 1.5 0.7 1.5 0.8 1.5 -0.9 1.5 -0.7 1.5 0.4 1.5 1.1 1.5 0.9 1.5 0.1 1.5 -0 1.5 -0 1.5 -0 1.5 -0 1.5 -0 1.5 -0v1l-1.5 0 -1.5 0 -1.5 0 -1.5 0 -1.5 0 -1.5 0 -1.5 0.1 -1.5 0.9 -1.5 1.1 -1.5 0.4 -1.5 -0.7 -1.5 -0.9 -1.5 0.8 -1.5 0.7 -1.5 0.3 -1.5 -0.2 -1.5 -0.6 -1.5 -0.8 -1.5 -0.6 -1.5 -0.2 -1.5 0 -1.5 0 -1.5 0z" fill="#2d290e"/><path d="M1359.7 859.4l1.5 -0.5 1.5 -0.6 1.5 -0.6 1.5 -0.4 1.5 -0 1.5 0.4 1.5 0.6 1.5 -0 1.5 -0.6 1.5 -0.6 1.5 0.2 1.5 0.8 1.5 0.9 1.5 0.5 1.5 -0 1.5 -0 1.5 -0 1.5 -0 1.5 -0 1.5 -0 1.5 -0 1.5 -0 1.5 -0 1.5 -0 1.5 -0 1.5 -0 1.5 -0 1.5 -0.5 1.5 -1.6 1.5 -0.4 1.5 1.4 1.5 0.1 1.5 -0.3 1.5 -0.1 1.5 0.1 1.5 0.3 1.5 0.4 1.5 0.4 1.5 0.2 1.5 -0 1.5 -0 1.5 -0 1.5 -0v1l-1.5 0 -1.5 0 -1.5 0 -1.5 0 -1.5 0.2 -1.5 0.4 -1.5 0.4 -1.5 0.3 -1.5 0.1 -1.5 -0.1 -1.5 -0.3 -1.5 0.1 -1.5 1.4 -1.5 -0.4 -1.5 -1.6 -1.5 -0.5 -1.5 0 -1.5 0 -1.5 0 -1.5 0 -1.5 0 -1.5 0 -1.5 0 -1.5 0 -1.5 0 -1.5 0 -1.5 0 -1.5 0 -1.5 0 -1.5 0.5 -1.5 0.9 -1.5 0.8 -1.5 0.2 -1.5 -0.6 -1.5 -0.6 -1.5 -0 -1.5 0.6 -1.5 0.4 -1.5 -0 -1.5 -0.4 -1.5 -0.6 -1.5 -0.6 -1.5 -0.5z" fill="#2d290e"/><path d="M1466.4 859.5l1.5 -0 1.5 -0 1.5 -0 1.5 -0 1.5 -0 1.5 -0 1.5 -0 1.5 -0.1 1.5 -0.7 1.5 -0.7 1.5 -0.2 1.5 0.5 1.5 0.8 1.5 0 1.5 -0.6 1.5 -0.5 1.5 -0.1 1.5 0.3 1.5 0.6v2.6l-1.5 0.6 -1.5 0.3 -1.5 -0.1 -1.5 -0.5 -1.5 -0.6 -1.5 0 -1.5 0.8 -1.5 0.5 -1.5 -0.2 -1.5 -0.7 -1.5 -0.7 -1.5 -0.1 -1.5 0 -1.5 0 -1.5 0 -1.5 0 -1.5 0 -1.5 0 -1.5 0z" fill="#2d290e"/><path d="M1524.3 858.5l1.5 -0.2 1.5 0 1.5 -0.7 1.5 0.4 1.5 1.2 1.5 0.2 1.5 -0 1.5 -0 1.5 -0.4 1.5 -0.8 1.5 -0.5 1.5 0.1 1.5 0.6 1.5 0.7 1.5 0.2 1.5 -0 1.5 -0 1.5 -0 1.5 -0 1.5 -0 1.5 -0 1.5 -0 1.5 -0 1.5 -0v1l-1.5 0 -1.5 0 -1.5 0 -1.5 0 -1.5 0 -1.5 0 -1.5 0 -1.5 0 -1.5 0 -1.5 0.2 -1.5 0.7 -1.5 0.6 -1.5 0.1 -1.5 -0.5 -1.5 -0.8 -1.5 -0.4 -1.5 0 -1.5 0 -1.5 0.2 -1.5 1.2 -1.5 0.4 -1.5 -0.7 -1.5 0 -1.5 -0.2z" fill="#2d290e"/><path d="M566.6 900.2l1.6 -0 1.6 -0 1.6 -0 1.6 -0 1.6 -0 1.6 -0 1.6 -0 1.6 -0.4 1.6 -0.3 1.6 -0.2 1.6 -0.1 1.6 0.3 1.6 0.4 1.6 0.3 1.6 -0v1l-1.6 0 -1.6 0.3 -1.6 0.4 -1.6 0.3 -1.6 -0.1 -1.6 -0.2 -1.6 -0.3 -1.6 -0.4 -1.6 0 -1.6 0 -1.6 0 -1.6 0 -1.6 0 -1.6 0 -1.6 0zM566.6 910.8l1.6 -0 1.6 -0 1.6 -0 1.6 -0 1.6 -0 1.6 -0.1 1.6 -0.4 1.6 -0.5 1.6 -0.5 1.6 -0.3 1.6 -0.1 1.6 0.2 1.6 0.4 1.6 0.5 1.6 0.4v1.5l-1.6 0.4 -1.6 0.5 -1.6 0.4 -1.6 0.2 -1.6 -0.1 -1.6 -0.3 -1.6 -0.5 -1.6 -0.5 -1.6 -0.4 -1.6 -0.1 -1.6 0 -1.6 0 -1.6 0 -1.6 0 -1.6 0z" fill="#0b2b1d"/><path d="M1175 900.1l1.6 -0.5 1.6 -0.5 1.6 -0.3 1.6 0.1 1.6 0.4 1.6 0.5 1.6 0.4 1.6 -0.2 1.6 -1 1.6 -0.4 1.6 0.8 1.6 0.9 1.6 -0 1.6 -0 1.6 -0v1l-1.6 0 -1.6 0 -1.6 0 -1.6 0.9 -1.6 0.8 -1.6 -0.4 -1.6 -1 -1.6 -0.2 -1.6 0.4 -1.6 0.5 -1.6 0.4 -1.6 0.1 -1.6 -0.3 -1.6 -0.5 -1.6 -0.5zM1175 909.5l1.6 -0.3 1.6 0 1.6 0.4 1.6 0.5 1.6 0.5 1.6 0.1 1.6 -0 1.6 -0 1.6 -0 1.6 -0 1.6 -0 1.6 -0 1.6 -0 1.6 -0 1.6 -0v1l-1.6 0 -1.6 0 -1.6 0 -1.6 0 -1.6 0 -1.6 0 -1.6 0 -1.6 0 -1.6 0 -1.6 0.1 -1.6 0.5 -1.6 0.5 -1.6 0.4 -1.6 0 -1.6 -0.3z" fill="#0b2b1d"/><path d="M1386.6 900.2l1.5 -0 1.5 -0.2 1.5 -0.3 1.5 -0.2 1.5 -0.7 1.5 -0.5 1.5 1.2 1.5 0.5 1.5 0.1 1.5 -0 1.5 -0 1.5 -0 1.5 -0 1.5 -0 1.5 -0v1l-1.5 0 -1.5 0 -1.5 0 -1.5 0 -1.5 0 -1.5 0 -1.5 0.1 -1.5 0.5 -1.5 1.2 -1.5 -0.5 -1.5 -0.7 -1.5 -0.2 -1.5 -0.3 -1.5 -0.2 -1.5 0zM1386.6 910.8l1.5 -0 1.5 -0 1.5 -0 1.5 -0 1.5 -0 1.5 -0 1.5 -0.6 1.5 0.1 1.5 -0.1 1.5 -0.6 1.5 0.4 1.5 0.8 1.5 0.1 1.5 -0 1.5 -0v1l-1.5 0 -1.5 0 -1.5 0.1 -1.5 0.8 -1.5 0.4 -1.5 -0.6 -1.5 -0.1 -1.5 0.1 -1.5 -0.6 -1.5 0 -1.5 0 -1.5 0 -1.5 0 -1.5 0 -1.5 0z" fill="#0b2b1d"/><path d="M592.8 945.6l1.6 -0.4 1.6 -0.1 1.6 0.3 1.6 0.5 1.6 0.5 1.6 0v1l-1.6 0 -1.6 0.5 -1.6 0.5 -1.6 0.3 -1.6 -0.1 -1.6 -0.4zM592.8 957l1.6 -0.2 1.6 -0.4 1.6 -0.2 1.6 0.2 1.6 0.4 1.6 0.3v1l-1.6 0.3 -1.6 0.4 -1.6 0.2 -1.6 -0.2 -1.6 -0.4 -1.6 -0.2z" fill="#052420"/><path d="M659.4 946.5l1.5 -0 1.5 -0 1.5 -0.5 1.5 -0.4 1.5 0 1.5 0.4 1.5 0.4 1.5 -0 1.5 -0 1.5 -0.6 1.5 -0.5 1.5 0.2 1.5 0.7 1.5 0.3 1.5 -0 1.5 -0 1.5 -0 1.5 -0.2 1.5 -0.5 1.5 -0.5 1.5 -0.3 1.5 0.1 1.5 -0 1.5 0 1.5 0.4 1.5 0.5 1.5 0 1.5 -0.7 1.5 -0.5 1.5 -0 1.5 0.4 1.5 0.7 1.5 0.6v1.1l-1.5 0.6 -1.5 0.7 -1.5 0.4 -1.5 -0 -1.5 -0.5 -1.5 -0.7 -1.5 0 -1.5 0.5 -1.5 0.4 -1.5 0 -1.5 -0 -1.5 0.1 -1.5 -0.3 -1.5 -0.5 -1.5 -0.5 -1.5 -0.2 -1.5 0 -1.5 0 -1.5 0 -1.5 0.3 -1.5 0.7 -1.5 0.2 -1.5 -0.5 -1.5 -0.6 -1.5 0 -1.5 0 -1.5 0.4 -1.5 0.4 -1.5 0 -1.5 -0.4 -1.5 -0.5 -1.5 0 -1.5 0zM659.4 957l1.5 -0 1.5 -0 1.5 -0 1.5 -0 1.5 -0 1.5 -0 1.5 -0 1.5 -0.7 1.5 -1 1.5 0.7 1.5 -0.3 1.5 -0.1 1.5 0.2 1.5 0.4 1.5 0.4 1.5 0.2 1.5 -0 1.5 -0 1.5 -0 1.5 -0 1.5 -0.2 1.5 -0.4 1.5 -0.2 1.5 0.1 1.5 0.4 1.5 0.3 1.5 -1 1.5 0.3 1.5 0.8 1.5 -0.3 1.5 -0.7 1.5 -0.6 1.5 -0.2v4.8l-1.5 -0.2 -1.5 -0.6 -1.5 -0.7 -1.5 -0.3 -1.5 0.8 -1.5 0.3 -1.5 -1 -1.5 0.3 -1.5 0.4 -1.5 0.1 -1.5 -0.2 -1.5 -0.4 -1.5 -0.2 -1.5 0 -1.5 0 -1.5 0 -1.5 0 -1.5 0.2 -1.5 0.4 -1.5 0.4 -1.5 0.2 -1.5 -0.1 -1.5 -0.3 -1.5 0.7 -1.5 -1 -1.5 -0.7 -1.5 0 -1.5 0 -1.5 0 -1.5 0 -1.5 0 -1.5 0 -1.5 0z" fill="#052420"/><path d="M724.6 946.5l1.7 -0 1.7 -0 1.7 -0.4 1.7 -0.6 1.7 -0.2 1.7 0.5v2.3l-1.7 0.5 -1.7 -0.2 -1.7 -0.6 -1.7 -0.4 -1.7 0 -1.7 0zM724.6 956.5l1.7 -0.2 1.7 -0 1.7 0.2 1.7 0.3 1.7 0.3 1.7 -0v1l-1.7 0 -1.7 0.3 -1.7 0.3 -1.7 0.2 -1.7 -0 -1.7 -0.2z" fill="#052420"/><path d="M1201.5 945.5l1.6 -0.3 1.6 0.3 1.6 0.7 1.6 0.3 1.6 -0 1.6 -0v1l-1.6 0 -1.6 0 -1.6 0.3 -1.6 0.7 -1.6 0.3 -1.6 -0.3zM1201.5 956.8l1.6 -0.5 1.6 -0.5 1.6 -0.3 1.6 0.1 1.6 0.4 1.6 0.5v2l-1.6 0.5 -1.6 0.4 -1.6 0.1 -1.6 -0.3 -1.6 -0.5 -1.6 -0.5z" fill="#052420"/><path d="M1269 946.5l1.5 -0 1.5 -0 1.5 -0 1.5 -0.2 1.5 -0.6 1.5 -0.7 1.5 -0.3 1.5 0.3 1.5 0.6 1.5 0.7 1.5 0.2 1.5 -0 1.5 -0 1.5 -0 1.5 -0 1.5 -0.1 1.5 -0.4 1.5 -0.4 1.5 -0.2 1.5 0.1 1.5 0.4 1.5 0.4 1.5 0 1.5 -0.4 1.5 -0.1 1.5 0.3 1.5 0.3 1.5 -0.7 1.5 -0.7 1.5 -0.2 1.5 0.5 1.5 0.8v2l-1.5 0.8 -1.5 0.5 -1.5 -0.2 -1.5 -0.7 -1.5 -0.7 -1.5 0.3 -1.5 0.3 -1.5 -0.1 -1.5 -0.4 -1.5 0 -1.5 0.4 -1.5 0.4 -1.5 0.1 -1.5 -0.2 -1.5 -0.4 -1.5 -0.4 -1.5 -0.1 -1.5 0 -1.5 0 -1.5 0 -1.5 0 -1.5 0.2 -1.5 0.7 -1.5 0.6 -1.5 0.3 -1.5 -0.3 -1.5 -0.7 -1.5 -0.6 -1.5 -0.2 -1.5 0 -1.5 0 -1.5 0zM1269 957l1.5 -0 1.5 -0 1.5 -0 1.5 -0 1.5 -0.3 1.5 -0.7 1.5 0.4 1.5 -0.1 1.5 0.1 1.5 0.1 1.5 -0.3 1.5 -0.5 1.5 -0.2 1.5 0.2 1.5 0.5 1.5 0.6 1.5 0.3 1.5 -0 1.5 -0 1.5 -0 1.5 -0 1.5 -0 1.5 -0 1.5 -0 1.5 -0 1.5 -0 1.5 -0 1.5 -0 1.5 -0 1.5 -0 1.5 -0 1.5 -0v1l-1.5 0 -1.5 0 -1.5 0 -1.5 0 -1.5 0 -1.5 0 -1.5 0 -1.5 0 -1.5 0 -1.5 0 -1.5 0 -1.5 0 -1.5 0 -1.5 0 -1.5 0 -1.5 0.3 -1.5 0.6 -1.5 0.5 -1.5 0.2 -1.5 -0.2 -1.5 -0.5 -1.5 -0.3 -1.5 0.1 -1.5 0.1 -1.5 -0.1 -1.5 0.4 -1.5 -0.7 -1.5 -0.3 -1.5 0 -1.5 0 -1.5 0 -1.5 0z" fill="#052420"/><path d="M1333.5 946l1.7 -0.4 1.7 -0.2 1.7 -0 1.7 0.2 1.7 0.3 1.7 0.4v1.6l-1.7 0.4 -1.7 0.3 -1.7 0.2 -1.7 -0 -1.7 -0.2 -1.7 -0.4zM1333.5 956.8l1.7 -0.5 1.7 -0.5 1.7 -0.4 1.7 -0.1 1.7 0.2 1.7 0.4v3l-1.7 0.4 -1.7 0.2 -1.7 -0.1 -1.7 -0.4 -1.7 -0.5 -1.7 -0.5z" fill="#052420"/><path d="M1412.8 946.5l1.7 -0 1.7 -0.2 1.7 -0.7 1.7 -0.5 1.7 0.1 1.7 0.7v2.4l-1.7 0.7 -1.7 0.1 -1.7 -0.5 -1.7 -0.7 -1.7 -0.2 -1.7 0zM1412.8 956.2l1.7 -0.5 1.7 -0.3 1.7 0.1 1.7 0.3 1.7 0.5 1.7 0.5v1.3l-1.7 0.5 -1.7 0.5 -1.7 0.3 -1.7 0.1 -1.7 -0.3 -1.7 -0.5z" fill="#052420"/><path d="M1481 946.5l1.5 -0.2 1.5 -0.4 1.5 -0.4 1.5 -0.3 1.5 -0.1 1.5 -0.1 1.5 -0.3 1.5 -0.1 1.5 0.2 1.5 0.4 1.5 0.5 1.5 -0.1 1.5 -1 1.5 0.1 1.5 1 1.5 0.6 1.5 -0 1.5 -0.2 1.5 -0.4 1.5 -0.4 1.5 -0.3 1.5 -0.1 1.5 0.1 1.5 0.3 1.5 0.2 1.5 0.1 1.5 0.4 1.5 0.3 1.5 -0 1.5 -0 1.5 -0.2 1.5 -1.4 1.5 0.4v3.3l-1.5 0.4 -1.5 -1.4 -1.5 -0.2 -1.5 0 -1.5 0 -1.5 0.3 -1.5 0.4 -1.5 0.1 -1.5 0.2 -1.5 0.3 -1.5 0.1 -1.5 -0.1 -1.5 -0.3 -1.5 -0.4 -1.5 -0.4 -1.5 -0.2 -1.5 0 -1.5 0.6 -1.5 1 -1.5 0.1 -1.5 -1 -1.5 -0.1 -1.5 0.5 -1.5 0.4 -1.5 0.2 -1.5 -0.1 -1.5 -0.3 -1.5 -0.1 -1.5 -0.1 -1.5 -0.3 -1.5 -0.4 -1.5 -0.4 -1.5 -0.2zM1481 957l1.5 -0.4 1.5 -0.4 1.5 -0.2 1.5 0 1.5 0.2 1.5 0.4 1.5 0.4 1.5 0 1.5 -0.2 1.5 -0.4 1.5 -0.3 1.5 -0.1 1.5 0.1 1.5 0.3 1.5 -0.1 1.5 -0.3 1.5 -0 1.5 0.2 1.5 0.4 1.5 0.4 1.5 -0.2 1.5 -0.5 1.5 0.8 1.5 -0 1.5 -0 1.5 -0 1.5 -0.2 1.5 -0.4 1.5 -0.5 1.5 -0.4 1.5 -0.2 1.5 0.1 1.5 0.3v3.7l-1.5 0.3 -1.5 0.1 -1.5 -0.2 -1.5 -0.4 -1.5 -0.5 -1.5 -0.4 -1.5 -0.2 -1.5 0 -1.5 0 -1.5 0 -1.5 0.8 -1.5 -0.5 -1.5 -0.2 -1.5 0.4 -1.5 0.4 -1.5 0.2 -1.5 -0 -1.5 -0.3 -1.5 -0.1 -1.5 0.3 -1.5 0.1 -1.5 -0.1 -1.5 -0.3 -1.5 -0.4 -1.5 -0.2 -1.5 0 -1.5 0.4 -1.5 0.4 -1.5 0.2 -1.5 0 -1.5 -0.2 -1.5 -0.4 -1.5 -0.4z" fill="#052420"/><path d="M1544.4 946.5l1.6 -0 1.6 -0 1.6 -0.4 1.6 -0.5 1.6 -0.5 1.6 -0.2 1.6 0.1v4.1l-1.6 0.1 -1.6 -0.2 -1.6 -0.5 -1.6 -0.5 -1.6 -0.4 -1.6 0 -1.6 0zM1544.4 957l1.6 -0 1.6 -0 1.6 -0 1.6 -0 1.6 -0.9 1.6 -0.4 1.6 0.7v2.3l-1.6 0.7 -1.6 -0.4 -1.6 -0.9 -1.6 -0 -1.6 0 -1.6 0 -1.6 0z" fill="#052420"/><path d="M36.7 998.2l1.5 -0.3 1.5 -0.6 1.5 -0.7 1.5 -0.6 1.5 -0.2 1.5 0.3 1.5 0.6 1.5 0.7 1.5 0.6 1.5 0.2 1.5 -1.1 1.5 -1 1.5 1 1.5 0.7 1.5 0.4 1.5 -0 1.5 -0 1.5 -0 1.5 -0 1.5 -0 1.5 -0 1.5 -1.1 1.5 -1.2 1.5 0.8 1.5 1.4 1.5 0.1 1.5 -0 1.5 -0 1.5 -0 1.5 -0 1.5 -0 1.5 -0 1.5 -0v1l-1.5 0 -1.5 0 -1.5 0 -1.5 0 -1.5 0 -1.5 0 -1.5 0 -1.5 0.1 -1.5 1.4 -1.5 0.8 -1.5 -1.2 -1.5 -1.1 -1.5 0 -1.5 0 -1.5 0 -1.5 0 -1.5 0 -1.5 0 -1.5 0.4 -1.5 0.7 -1.5 1 -1.5 -1 -1.5 -1.1 -1.5 0.2 -1.5 0.6 -1.5 0.7 -1.5 0.6 -1.5 0.3 -1.5 -0.2 -1.5 -0.6 -1.5 -0.7 -1.5 -0.6 -1.5 -0.3z" fill="#021925"/><path d="M143 996.9l1.5 0.1 1.5 0.5 1.5 0.6 1.5 0.1 1.5 -0 1.5 -0 1.5 -0 1.5 -0 1.5 -0 1.5 -0 1.5 -0.2 1.5 -0.7 1.5 -0.8 1.5 -0.7 1.5 -0.3 1.5 0.3 1.5 0.7 1.5 0.8 1.5 0.7 1.5 0.2 1.5 -0 1.5 -0 1.5 -0 1.5 -0 1.5 -0 1.5 -0 1.5 -0 1.5 -0 1.5 -0 1.5 -0 1.5 -0.5 1.5 -0.6 1.5 -0.5 1.5 -0.2 1.5 0.3 1.5 0.6 1.5 0.6 1.5 0.4 1.5 -0 1.5 -0 1.5 -0.3 1.5 -0.4 1.5 -0.6 1.5 -0.9 1.5 0.1 1.5 -0.2 1.5 0.6 1.5 0.9 1.5 0.7 1.5 0 1.5 -0 1.5 -0 1.5 -0 1.5 -0 1.5 -0 1.5 -0 1.5 -0 1.5 -0 1.5 -0.4 1.5 -0.8 1.5 -0.8 1.5 -0.5 1.5 -0.2 1.5 0.3 1.5 0.8 1.5 -0.5 1.5 -0.4 1.5 0.1v5.8l-1.5 0.1 -1.5 -0.4 -1.5 -0.5 -1.5 0.8 -1.5 0.3 -1.5 -0.2 -1.5 -0.5 -1.5 -0.8 -1.5 -0.8 -1.5 -0.4 -1.5 0 -1.5 0 -1.5 0 -1.5 0 -1.5 0 -1.5 0 -1.5 0 -1.5 0 -1.5 0 -1.5 0.7 -1.5 0.9 -1.5 0.6 -1.5 -0.2 -1.5 0.1 -1.5 -0.9 -1.5 -0.6 -1.5 -0.4 -1.5 -0.3 -1.5 0 -1.5 0 -1.5 0.4 -1.5 0.6 -1.5 0.6 -1.5 0.3 -1.5 -0.2 -1.5 -0.5 -1.5 -0.6 -1.5 -0.5 -1.5 -0 -1.5 0 -1.5 0 -1.5 0 -1.5 0 -1.5 0 -1.5 0 -1.5 0 -1.5 0 -1.5 0 -1.5 0.2 -1.5 0.7 -1.5 0.8 -1.5 0.7 -1.5 0.3 -1.5 -0.3 -1.5 -0.7 -1.5 -0.8 -1.5 -0.7 -1.5 -0.2 -1.5 0 -1.5 0 -1.5 0 -1.5 0 -1.5 0 -1.5 0 -1.5 0.1 -1.5 0.6 -1.5 0.5 -1.5 0.1z" fill="#021925"/><path d="M292 998.2l1.5 -0 1.5 -0 1.5 -0 1.5 -0 1.5 -0 1.5 -0 1.5 -0 1.5 -0 1.5 -0 1.5 -0 1.5 -0.5 1.5 -0.7 1.5 -0.5 1.5 0.1 1.5 0.6 1.5 -0.5 1.5 -0.5 1.5 -0.2 1.5 -0.4 1.5 0 1.5 0.4 1.5 0.7v3.8l-1.5 0.7 -1.5 0.4 -1.5 0 -1.5 -0.4 -1.5 -0.2 -1.5 -0.5 -1.5 -0.5 -1.5 0.6 -1.5 0.1 -1.5 -0.5 -1.5 -0.7 -1.5 -0.5 -1.5 0 -1.5 0 -1.5 0 -1.5 0 -1.5 0 -1.5 0 -1.5 0 -1.5 0 -1.5 0 -1.5 0z" fill="#021925"/><path d="M327.7 998.2l1.5 -0 1.5 -0 1.5 -0 1.5 -0 1.5 -0 1.5 -0 1.5 -0.2 1.5 -1.1 1.5 0.9 1.5 -0.5 1.5 -0.9 1.5 -0.7 1.5 -0.2 1.5 0.2 1.5 -0.1 1.5 0.2 1.5 0.5 1.5 0.7 1.5 0.6 1.5 0.5 1.5 0.1 1.5 -0.4 1.5 -0.7 1.5 -0.4 1.5 0.1 1.5 0.6 1.5 0.6 1.5 0.1 1.5 -0 1.5 -0.3 1.5 -0.9 1.5 -0.6 1.5 0.3 1.5 0.7 1.5 0.7 1.5 0 1.5 -0 1.5 -0.5 1.5 -0.5 1.5 -0.2 1.5 -1.3 1.5 0.6 1.5 1.7 1.5 0.1 1.5 -0 1.5 -0 1.5 -0 1.5 -0 1.5 -0 1.5 -0 1.5 -0 1.5 -0 1.5 -0 1.5 -0 1.5 -0 1.5 -0 1.5 -0 1.5 -0 1.5 -0.9 1.5 -1.1 1.5 -0.4 1.5 0.7 1.5 1.1 1.5 0.6 1.5 -0 1.5 -0 1.5 -0 1.5 -0 1.5 -0v1l-1.5 0 -1.5 0 -1.5 0 -1.5 0 -1.5 0 -1.5 0.6 -1.5 1.1 -1.5 0.7 -1.5 -0.4 -1.5 -1.1 -1.5 -0.9 -1.5 -0 -1.5 0 -1.5 0 -1.5 0 -1.5 0 -1.5 0 -1.5 0 -1.5 0 -1.5 0 -1.5 0 -1.5 0 -1.5 0 -1.5 0 -1.5 0 -1.5 0.1 -1.5 1.7 -1.5 0.6 -1.5 -1.3 -1.5 -0.2 -1.5 -0.5 -1.5 -0.5 -1.5 -0 -1.5 0 -1.5 0.7 -1.5 0.7 -1.5 0.3 -1.5 -0.6 -1.5 -0.9 -1.5 -0.3 -1.5 0 -1.5 0.1 -1.5 0.6 -1.5 0.6 -1.5 0.1 -1.5 -0.4 -1.5 -0.7 -1.5 -0.4 -1.5 0.1 -1.5 0.5 -1.5 0.6 -1.5 0.7 -1.5 0.5 -1.5 0.2 -1.5 -0.1 -1.5 0.2 -1.5 -0.2 -1.5 -0.7 -1.5 -0.9 -1.5 -0.5 -1.5 0.9 -1.5 -1.1 -1.5 -0.2 -1.5 0 -1.5 0 -1.5 0 -1.5 0 -1.5 0 -1.5 0z" fill="#021925"/><path d="M433.4 998.2l1.5 -0 1.5 -0 1.5 -0 1.5 -0 1.5 -0 1.5 -0.4 1.5 -0.6 1.5 -0.7 1.5 -0.6 1.5 -0.2 1.5 0.2 1.5 0.6 1.5 0.7 1.5 0.6 1.5 0.4 1.5 -0 1.5 -0 1.5 -0 1.5 -0 1.5 -0 1.5 -0 1.5 -0 1.5 -0.2 1.5 -0.6 1.5 -0.7 1.5 -0.4 1.5 -0.2 1.5 0.2 1.5 -0.6 1.5 0.6 1.5 1.1 1.5 0.9 1.5 -0 1.5 -0 1.5 -0.5 1.5 -0.8 1.5 -0.7 1.5 -0.2 1.5 0.5 1.5 0.8 1.5 0.7 1.5 -0.3 1.5 -0.4 1.5 -0.2 1.5 0.1 1.5 0.3 1.5 -0.4 1.5 -0.2 1.5 0 1.5 0.3 1.5 0.4 1.5 0.4 1.5 0.2 1.5 -0 1.5 -0 1.5 -0 1.5 -0 1.5 -0 1.5 -0 1.5 -0 1.5 -0 1.5 -0.4 1.5 -0.8 1.5 -0.1 1.5 -0.7 1.5 0.3 1.5 1 1.5 0.7v1l-1.5 0.7 -1.5 1 -1.5 0.3 -1.5 -0.7 -1.5 -0.1 -1.5 -0.8 -1.5 -0.4 -1.5 0 -1.5 0 -1.5 0 -1.5 0 -1.5 0 -1.5 0 -1.5 0 -1.5 0 -1.5 0.2 -1.5 0.4 -1.5 0.4 -1.5 0.3 -1.5 0 -1.5 -0.2 -1.5 -0.4 -1.5 0.3 -1.5 0.1 -1.5 -0.2 -1.5 -0.4 -1.5 -0.3 -1.5 0.7 -1.5 0.8 -1.5 0.5 -1.5 -0.2 -1.5 -0.7 -1.5 -0.8 -1.5 -0.5 -1.5 0 -1.5 0 -1.5 0.9 -1.5 1.1 -1.5 0.6 -1.5 -0.6 -1.5 0.2 -1.5 -0.2 -1.5 -0.4 -1.5 -0.7 -1.5 -0.6 -1.5 -0.2 -1.5 0 -1.5 0 -1.5 0 -1.5 0 -1.5 0 -1.5 0 -1.5 0 -1.5 0.4 -1.5 0.6 -1.5 0.7 -1.5 0.6 -1.5 0.2 -1.5 -0.2 -1.5 -0.6 -1.5 -0.7 -1.5 -0.6 -1.5 -0.4 -1.5 0 -1.5 0 -1.5 0 -1.5 0 -1.5 0z" fill="#021925"/><path d="M962.9 998.2l1.5 -0 1.5 -0 1.5 -0 1.5 -0 1.5 -0.2 1.5 -1 1.5 -0.7 1.5 0.4 1.5 1 1.5 -0.2 1.5 -0.9 1.5 -0.8 1.5 -0.2 1.5 0.5 1.5 -0 1.5 -0.4 1.5 -0.1 1.5 0.2 1.5 0.5 1.5 -0 1.5 -0.4 1.5 -0.1 1.5 0.3 1.5 0.6 1.5 0.6 1.5 0.6 1.5 0.4 1.5 -0 1.5 -0 1.5 -0 1.5 -0 1.5 -0 1.5 -0 1.5 -0 1.5 -0 1.5 -0 1.5 -0 1.5 -0 1.5 -0 1.5 -0 1.5 -0 1.5 -0 1.5 -0 1.5 -0 1.5 -0 1.5 -0 1.5 -0 1.5 -0 1.5 -0 1.5 -0 1.5 -0 1.5 -0 1.5 -0.7 1.5 -0.6 1.5 0.2 1.5 0.7 1.5 0.1 1.5 -0.3 1.5 -0.3 1.5 -0.3 1.5 -0.3 1.5 0.4 1.5 0.3 1.5 0.3 1.5 0.3 1.5 0.1 1.5 -0 1.5 -0v1l-1.5 0 -1.5 0 -1.5 0.1 -1.5 0.3 -1.5 0.3 -1.5 0.3 -1.5 0.4 -1.5 -0.3 -1.5 -0.3 -1.5 -0.3 -1.5 -0.3 -1.5 0.1 -1.5 0.7 -1.5 0.2 -1.5 -0.6 -1.5 -0.7 -1.5 0 -1.5 0 -1.5 0 -1.5 0 -1.5 0 -1.5 0 -1.5 0 -1.5 0 -1.5 0 -1.5 0 -1.5 0 -1.5 0 -1.5 0 -1.5 0 -1.5 0 -1.5 0 -1.5 0 -1.5 0 -1.5 0 -1.5 0 -1.5 0 -1.5 0 -1.5 0 -1.5 0 -1.5 0 -1.5 0.4 -1.5 0.6 -1.5 0.6 -1.5 0.6 -1.5 0.3 -1.5 -0.1 -1.5 -0.4 -1.5 -0 -1.5 0.5 -1.5 0.2 -1.5 -0.1 -1.5 -0.4 -1.5 -0 -1.5 0.5 -1.5 -0.2 -1.5 -0.8 -1.5 -0.9 -1.5 -0.2 -1.5 1 -1.5 0.4 -1.5 -0.7 -1.5 -1 -1.5 -0.2 -1.5 0 -1.5 0 -1.5 0 -1.5 0z" fill="#021925"/><path d="M354 1039l1.5 -0.3 1.5 -0.3 1.5 -0.2 1.5 -0.1 1.5 0.1 1.5 0.2 1.5 0.3 1.5 0.2 1.5 -0 1.5 -0 1.5 -0 1.5 -0 1.5 -0.1 1.5 -0.6 1.5 0.1v2.1l-1.5 0.1 -1.5 -0.6 -1.5 -0.1 -1.5 0 -1.5 0 -1.5 0 -1.5 0 -1.5 0.2 -1.5 0.3 -1.5 0.2 -1.5 0.1 -1.5 -0.1 -1.5 -0.2 -1.5 -0.3 -1.5 -0.3zM354 1049.5l1.5 -0 1.5 -0 1.5 -0 1.5 -1.1 1.5 -0.5 1.5 0.5 1.5 0.4 1.5 0.6 1.5 0 1.5 -0 1.5 -0 1.5 -0 1.5 -0 1.5 -0 1.5 -0v1l-1.5 0 -1.5 0 -1.5 0 -1.5 0 -1.5 0 -1.5 0 -1.5 0 -1.5 0.6 -1.5 0.4 -1.5 0.5 -1.5 -0.5 -1.5 -1.1 -1.5 0 -1.5 0 -1.5 0z" fill="#061f2a"/><path d="M221.2 1090.6l2 0 2 -0.2 2 -0.2 2 -0.3 2 -0.2 2 -0.3 2 0.1 2 -0.5 2 0.1 2 -0.1 2 0 2 -0.2 2 -0.1 2 0.2 2 -0.2 2 0.2 2 0.2 2 0.1 2 0.3 2 -0.2 2 0.1 2 0.3 2 0.5 2 0.2 2 0 2 0.6 2 -0.3 2 -0.3 2 -0.2 2 -0 2 -0.2 2 -0.1 2 -0.6 2 -0.1 2 0.1 2 -0.1 2 -0.2 2 0 2 0.1 2 -0.2 2 0.2 2 -0.1 2 0.2 2 0.3 2 0 2 0.1 2 0.2 2 0.1 2 0.3 2 0.3 2 -0 2 0.7 2 -0.1 2 -0.4 2 0.1 2 -0.2 2 -0.6 2 0.1v4.2l-2 0.1 -2 -0.6 -2 -0.2 -2 0.1 -2 -0.4 -2 -0.1 -2 0.7 -2 -0 -2 0.3 -2 0.3 -2 0.1 -2 0.2 -2 0.1 -2 0 -2 0.3 -2 0.2 -2 -0.1 -2 0.2 -2 -0.2 -2 0.1 -2 0 -2 -0.2 -2 -0.1 -2 0.1 -2 -0.1 -2 -0.6 -2 -0.1 -2 -0.2 -2 -0 -2 -0.2 -2 -0.3 -2 -0.3 -2 0.6 -2 0 -2 0.2 -2 0.5 -2 0.3 -2 0.1 -2 -0.2 -2 0.3 -2 0.1 -2 0.2 -2 0.2 -2 -0.2 -2 0.2 -2 -0.1 -2 -0.2 -2 0 -2 -0.1 -2 0.1 -2 -0.5 -2 0.1 -2 -0.3 -2 -0.2 -2 -0.3 -2 -0.2 -2 -0.2 -2 0z" fill="#1d202d"/><path d="M433.4 1090.7l2 -0.3 2 0.1 2 -0.6 2 -0 2 -0.4 2 0.1 2 -0.5 2 -0.1 2 -0.1 2 -0 2 -0.3 2 0.3 2 -0.1 2 0 2 -0.2 2 0.3 2 -0.1 2 0 2 0.1 2 0.6 2 0.1 2 -0 2 0.4 2 -0.1 2 0.6 2 -0 2 0 2 0 2 -0.3 2 -0.5 2 -0.3 2 0.1 2 -0.5 2 0 2 -0.1 2 -0.2 2 0.1 2 -0.3 2 -0 2 0 2 0.1 2 0.1 2 -0.2 2 0.5 2 0 2 -0 2 0.1 2 0.5 2 0.1 2 -0 2 0.6 2 -0.1 2 0.4 2 -0.4 2 -0.4 2 0.1 2 -0.4 2 -0.4v4.8l-2 -0.4 -2 -0.4 -2 0.1 -2 -0.4 -2 -0.4 -2 0.4 -2 -0.1 -2 0.6 -2 -0 -2 0.1 -2 0.5 -2 0.1 -2 -0 -2 0 -2 0.5 -2 -0.2 -2 0.1 -2 0.1 -2 0 -2 -0 -2 -0.3 -2 0.1 -2 -0.2 -2 -0.1 -2 0 -2 -0.5 -2 0.1 -2 -0.3 -2 -0.5 -2 -0.3 -2 0 -2 0 -2 -0 -2 0.6 -2 -0.1 -2 0.4 -2 -0 -2 0.1 -2 0.6 -2 0.1 -2 0 -2 -0.1 -2 0.3 -2 -0.2 -2 0 -2 -0.1 -2 0.3 -2 -0.3 -2 -0 -2 -0.1 -2 -0.1 -2 -0.5 -2 0.1 -2 -0.4 -2 -0 -2 -0.6 -2 0.1 -2 -0.3z" fill="#1d202d"/><path d="M1042.4 1090.7l2 -0.2 2 -0 2 -0.6 2 0.1 2 -0.1 2 -0.3 2 -0.4 2 -0.1 2 0 2 -0.3 2 0 2 0.1 2 0.1 2 -0.1 2 -0.1 2 0.3 2 -0.3 2 0.2 2 0.2 2 0 2 0.4 2 0.2 2 0.4 2 -0.1 2 0.6 2 -0.1 2 0.2 2 -0.4 2 -0.4 2 -0.1 2 -0.1 2 -0.1 2 -0.6 2 0.2 2 -0.4 2 0.1 2 -0.2 2 -0.2 2 0.3 2 -0.1 2 -0.1 2 -0.1 2 0.2 2 0.3 2 0.2 2 0.1 2 0.1 2 0.1 2 0.1 2 0.5 2 0.2 2 0.2 2 0.1 2 -0.4 2 -0.3 2 -0.3 2 -0.1 2 -0.1v4.4l-2 -0.1 -2 -0.1 -2 -0.3 -2 -0.3 -2 -0.4 -2 0.1 -2 0.2 -2 0.2 -2 0.5 -2 0.1 -2 0.1 -2 0.1 -2 0.1 -2 0.2 -2 0.3 -2 0.2 -2 -0.1 -2 -0.1 -2 -0.1 -2 0.3 -2 -0.2 -2 -0.2 -2 0.1 -2 -0.4 -2 0.2 -2 -0.6 -2 -0.1 -2 -0.1 -2 -0.1 -2 -0.4 -2 -0.4 -2 0.2 -2 -0.1 -2 0.6 -2 -0.1 -2 0.4 -2 0.2 -2 0.4 -2 0 -2 0.2 -2 0.2 -2 -0.3 -2 0.3 -2 -0.1 -2 -0.1 -2 0.1 -2 0.1 -2 0 -2 -0.3 -2 0 -2 -0.1 -2 -0.4 -2 -0.3 -2 -0.1 -2 0.1 -2 -0.6 -2 -0 -2 -0.2z" fill="#1d202d"/><path d="M566.1 1131.5h51.3v1h-51.3zM567.1 1132l2.4 -3.6l2.4 3.6l-2.4 3.6zM571.3 1132l2.4 -3.6l2.4 3.6l-2.4 3.6zM580.7 1132l2.4 -3.6l2.4 3.6l-2.4 3.6zM584.7 1132l2.4 -3.6l2.4 3.6l-2.4 3.6zM593.2 1132l2.4 -3.6l2.4 3.6l-2.4 3.6zM597.9 1132l2.4 -3.6l2.4 3.6l-2.4 3.6zM606.6 1132l2.4 -3.6l2.4 3.6l-2.4 3.6zM611.3 1132l2.4 -3.6l2.4 3.6l-2.4 3.6zM566.1 1142h51.3v1h-51.3zM567.1 1142.5l2.4 -3.6l2.4 3.6l-2.4 3.6zM571.3 1142.5l2.4 -3.6l2.4 3.6l-2.4 3.6zM580.7 1142.5l2.4 -3.6l2.4 3.6l-2.4 3.6zM584.7 1142.5l2.4 -3.6l2.4 3.6l-2.4 3.6zM593.2 1142.5l2.4 -3.6l2.4 3.6l-2.4 3.6zM597.9 1142.5l2.4 -3.6l2.4 3.6l-2.4 3.6zM606.6 1142.5l2.4 -3.6l2.4 3.6l-2.4 3.6zM611.3 1142.5l2.4 -3.6l2.4 3.6l-2.4 3.6z" fill="#21170f"/><path d="M617.4 1131.5h52.6v1h-52.6zM618.4 1132l2.4 -3.6l2.4 3.6l-2.4 3.6zM622.6 1132l2.4 -3.6l2.4 3.6l-2.4 3.6zM632 1132l2.4 -3.6l2.4 3.6l-2.4 3.6zM636 1132l2.4 -3.6l2.4 3.6l-2.4 3.6zM644.5 1132l2.4 -3.6l2.4 3.6l-2.4 3.6zM649.2 1132l2.4 -3.6l2.4 3.6l-2.4 3.6zM657.9 1132l2.4 -3.6l2.4 3.6l-2.4 3.6zM662.6 1132l2.4 -3.6l2.4 3.6l-2.4 3.6zM617.4 1142h52.6v1h-52.6zM618.4 1142.5l2.4 -3.6l2.4 3.6l-2.4 3.6zM622.6 1142.5l2.4 -3.6l2.4 3.6l-2.4 3.6zM632 1142.5l2.4 -3.6l2.4 3.6l-2.4 3.6zM636 1142.5l2.4 -3.6l2.4 3.6l-2.4 3.6zM644.5 1142.5l2.4 -3.6l2.4 3.6l-2.4 3.6zM649.2 1142.5l2.4 -3.6l2.4 3.6l-2.4 3.6zM657.9 1142.5l2.4 -3.6l2.4 3.6l-2.4 3.6zM662.6 1142.5l2.4 -3.6l2.4 3.6l-2.4 3.6z" fill="#21170f"/><path d="M670 1131.5h53.5v1h-53.5zM671 1132l2.4 -3.6l2.4 3.6l-2.4 3.6zM675.2 1132l2.4 -3.6l2.4 3.6l-2.4 3.6zM684.6 1132l2.4 -3.6l2.4 3.6l-2.4 3.6zM688.6 1132l2.4 -3.6l2.4 3.6l-2.4 3.6zM697.1 1132l2.4 -3.6l2.4 3.6l-2.4 3.6zM701.8 1132l2.4 -3.6l2.4 3.6l-2.4 3.6zM710.5 1132l2.4 -3.6l2.4 3.6l-2.4 3.6zM715.2 1132l2.4 -3.6l2.4 3.6l-2.4 3.6zM670 1142h53.5v1h-53.5zM671 1142.5l2.4 -3.6l2.4 3.6l-2.4 3.6zM675.2 1142.5l2.4 -3.6l2.4 3.6l-2.4 3.6zM684.6 1142.5l2.4 -3.6l2.4 3.6l-2.4 3.6zM688.6 1142.5l2.4 -3.6l2.4 3.6l-2.4 3.6zM697.1 1142.5l2.4 -3.6l2.4 3.6l-2.4 3.6zM701.8 1142.5l2.4 -3.6l2.4 3.6l-2.4 3.6zM710.5 1142.5l2.4 -3.6l2.4 3.6l-2.4 3.6zM715.2 1142.5l2.4 -3.6l2.4 3.6l-2.4 3.6z" fill="#21170f"/><path d="M723.5 1131.5h12.4v1h-12.4zM724.5 1132l2.4 -3.6l2.4 3.6l-2.4 3.6zM728.7 1132l2.4 -3.6l2.4 3.6l-2.4 3.6zM723.5 1142h12.4v1h-12.4zM724.5 1142.5l2.4 -3.6l2.4 3.6l-2.4 3.6zM728.7 1142.5l2.4 -3.6l2.4 3.6l-2.4 3.6z" fill="#21170f"/><path d="M751 1131.5h51.5v1h-51.5zM752 1132l2.4 -3.6l2.4 3.6l-2.4 3.6zM756.2 1132l2.4 -3.6l2.4 3.6l-2.4 3.6zM765.6 1132l2.4 -3.6l2.4 3.6l-2.4 3.6zM769.6 1132l2.4 -3.6l2.4 3.6l-2.4 3.6zM778.1 1132l2.4 -3.6l2.4 3.6l-2.4 3.6zM782.8 1132l2.4 -3.6l2.4 3.6l-2.4 3.6zM791.5 1132l2.4 -3.6l2.4 3.6l-2.4 3.6zM796.2 1132l2.4 -3.6l2.4 3.6l-2.4 3.6zM751 1142h51.5v1h-51.5zM752 1142.5l2.4 -3.6l2.4 3.6l-2.4 3.6zM756.2 1142.5l2.4 -3.6l2.4 3.6l-2.4 3.6zM765.6 1142.5l2.4 -3.6l2.4 3.6l-2.4 3.6zM769.6 1142.5l2.4 -3.6l2.4 3.6l-2.4 3.6zM778.1 1142.5l2.4 -3.6l2.4 3.6l-2.4 3.6zM782.8 1142.5l2.4 -3.6l2.4 3.6l-2.4 3.6zM791.5 1142.5l2.4 -3.6l2.4 3.6l-2.4 3.6zM796.2 1142.5l2.4 -3.6l2.4 3.6l-2.4 3.6z" fill="#21170f"/><path d="M802.5 1131.5h53.8v1h-53.8zM803.5 1132l2.4 -3.6l2.4 3.6l-2.4 3.6zM807.7 1132l2.4 -3.6l2.4 3.6l-2.4 3.6zM817.1 1132l2.4 -3.6l2.4 3.6l-2.4 3.6zM821.1 1132l2.4 -3.6l2.4 3.6l-2.4 3.6zM829.6 1132l2.4 -3.6l2.4 3.6l-2.4 3.6zM834.3 1132l2.4 -3.6l2.4 3.6l-2.4 3.6zM843 1132l2.4 -3.6l2.4 3.6l-2.4 3.6zM847.7 1132l2.4 -3.6l2.4 3.6l-2.4 3.6zM802.5 1142h53.8v1h-53.8zM803.5 1142.5l2.4 -3.6l2.4 3.6l-2.4 3.6zM807.7 1142.5l2.4 -3.6l2.4 3.6l-2.4 3.6zM817.1 1142.5l2.4 -3.6l2.4 3.6l-2.4 3.6zM821.1 1142.5l2.4 -3.6l2.4 3.6l-2.4 3.6zM829.6 1142.5l2.4 -3.6l2.4 3.6l-2.4 3.6zM834.3 1142.5l2.4 -3.6l2.4 3.6l-2.4 3.6zM843 1142.5l2.4 -3.6l2.4 3.6l-2.4 3.6zM847.7 1142.5l2.4 -3.6l2.4 3.6l-2.4 3.6z" fill="#21170f"/><path d="M856.3 1131.5h52.3v1h-52.3zM857.3 1132l2.4 -3.6l2.4 3.6l-2.4 3.6zM861.5 1132l2.4 -3.6l2.4 3.6l-2.4 3.6zM870.9 1132l2.4 -3.6l2.4 3.6l-2.4 3.6zM874.9 1132l2.4 -3.6l2.4 3.6l-2.4 3.6zM883.4 1132l2.4 -3.6l2.4 3.6l-2.4 3.6zM888.1 1132l2.4 -3.6l2.4 3.6l-2.4 3.6zM896.8 1132l2.4 -3.6l2.4 3.6l-2.4 3.6zM901.5 1132l2.4 -3.6l2.4 3.6l-2.4 3.6zM856.3 1142h52.3v1h-52.3zM857.3 1142.5l2.4 -3.6l2.4 3.6l-2.4 3.6zM861.5 1142.5l2.4 -3.6l2.4 3.6l-2.4 3.6zM870.9 1142.5l2.4 -3.6l2.4 3.6l-2.4 3.6zM874.9 1142.5l2.4 -3.6l2.4 3.6l-2.4 3.6zM883.4 1142.5l2.4 -3.6l2.4 3.6l-2.4 3.6zM888.1 1142.5l2.4 -3.6l2.4 3.6l-2.4 3.6zM896.8 1142.5l2.4 -3.6l2.4 3.6l-2.4 3.6zM901.5 1142.5l2.4 -3.6l2.4 3.6l-2.4 3.6z" fill="#21170f"/><path d="M908.6 1131.5h26v1h-26zM909.6 1132l2.4 -3.6l2.4 3.6l-2.4 3.6zM913.8 1132l2.4 -3.6l2.4 3.6l-2.4 3.6zM923.2 1132l2.4 -3.6l2.4 3.6l-2.4 3.6zM927.2 1132l2.4 -3.6l2.4 3.6l-2.4 3.6zM908.6 1142h26v1h-26zM909.6 1142.5l2.4 -3.6l2.4 3.6l-2.4 3.6zM913.8 1142.5l2.4 -3.6l2.4 3.6l-2.4 3.6zM923.2 1142.5l2.4 -3.6l2.4 3.6l-2.4 3.6zM927.2 1142.5l2.4 -3.6l2.4 3.6l-2.4 3.6z" fill="#21170f"/><path d="M1174.8 1131.5h51.8v1h-51.8zM1175.8 1132l2.4 -3.6l2.4 3.6l-2.4 3.6zM1180 1132l2.4 -3.6l2.4 3.6l-2.4 3.6zM1189.4 1132l2.4 -3.6l2.4 3.6l-2.4 3.6zM1193.4 1132l2.4 -3.6l2.4 3.6l-2.4 3.6zM1201.9 1132l2.4 -3.6l2.4 3.6l-2.4 3.6zM1206.6 1132l2.4 -3.6l2.4 3.6l-2.4 3.6zM1215.3 1132l2.4 -3.6l2.4 3.6l-2.4 3.6zM1220 1132l2.4 -3.6l2.4 3.6l-2.4 3.6zM1174.8 1142h51.8v1h-51.8zM1175.8 1142.5l2.4 -3.6l2.4 3.6l-2.4 3.6zM1180 1142.5l2.4 -3.6l2.4 3.6l-2.4 3.6zM1189.4 1142.5l2.4 -3.6l2.4 3.6l-2.4 3.6zM1193.4 1142.5l2.4 -3.6l2.4 3.6l-2.4 3.6zM1201.9 1142.5l2.4 -3.6l2.4 3.6l-2.4 3.6zM1206.6 1142.5l2.4 -3.6l2.4 3.6l-2.4 3.6zM1215.3 1142.5l2.4 -3.6l2.4 3.6l-2.4 3.6zM1220 1142.5l2.4 -3.6l2.4 3.6l-2.4 3.6z" fill="#21170f"/><path d="M1226.6 1131.5h52v1h-52zM1227.6 1132l2.4 -3.6l2.4 3.6l-2.4 3.6zM1231.8 1132l2.4 -3.6l2.4 3.6l-2.4 3.6zM1241.2 1132l2.4 -3.6l2.4 3.6l-2.4 3.6zM1245.2 1132l2.4 -3.6l2.4 3.6l-2.4 3.6zM1253.7 1132l2.4 -3.6l2.4 3.6l-2.4 3.6zM1258.4 1132l2.4 -3.6l2.4 3.6l-2.4 3.6zM1267.1 1132l2.4 -3.6l2.4 3.6l-2.4 3.6zM1271.8 1132l2.4 -3.6l2.4 3.6l-2.4 3.6zM1226.6 1142h52v1h-52zM1227.6 1142.5l2.4 -3.6l2.4 3.6l-2.4 3.6zM1231.8 1142.5l2.4 -3.6l2.4 3.6l-2.4 3.6zM1241.2 1142.5l2.4 -3.6l2.4 3.6l-2.4 3.6zM1245.2 1142.5l2.4 -3.6l2.4 3.6l-2.4 3.6zM1253.7 1142.5l2.4 -3.6l2.4 3.6l-2.4 3.6zM1258.4 1142.5l2.4 -3.6l2.4 3.6l-2.4 3.6zM1267.1 1142.5l2.4 -3.6l2.4 3.6l-2.4 3.6zM1271.8 1142.5l2.4 -3.6l2.4 3.6l-2.4 3.6z" fill="#21170f"/><path d="M1278.6 1131.5h54v1h-54zM1279.6 1132l2.4 -3.6l2.4 3.6l-2.4 3.6zM1283.8 1132l2.4 -3.6l2.4 3.6l-2.4 3.6zM1293.2 1132l2.4 -3.6l2.4 3.6l-2.4 3.6zM1297.2 1132l2.4 -3.6l2.4 3.6l-2.4 3.6zM1305.7 1132l2.4 -3.6l2.4 3.6l-2.4 3.6zM1310.4 1132l2.4 -3.6l2.4 3.6l-2.4 3.6zM1319.1 1132l2.4 -3.6l2.4 3.6l-2.4 3.6zM1323.8 1132l2.4 -3.6l2.4 3.6l-2.4 3.6zM1278.6 1142h54v1h-54zM1279.6 1142.5l2.4 -3.6l2.4 3.6l-2.4 3.6zM1283.8 1142.5l2.4 -3.6l2.4 3.6l-2.4 3.6zM1293.2 1142.5l2.4 -3.6l2.4 3.6l-2.4 3.6zM1297.2 1142.5l2.4 -3.6l2.4 3.6l-2.4 3.6zM1305.7 1142.5l2.4 -3.6l2.4 3.6l-2.4 3.6zM1310.4 1142.5l2.4 -3.6l2.4 3.6l-2.4 3.6zM1319.1 1142.5l2.4 -3.6l2.4 3.6l-2.4 3.6zM1323.8 1142.5l2.4 -3.6l2.4 3.6l-2.4 3.6z" fill="#21170f"/><path d="M1332.6 1131.5h12.1v1h-12.1zM1333.6 1132l2.4 -3.6l2.4 3.6l-2.4 3.6zM1337.8 1132l2.4 -3.6l2.4 3.6l-2.4 3.6zM1332.6 1142h12.1v1h-12.1zM1333.6 1142.5l2.4 -3.6l2.4 3.6l-2.4 3.6zM1337.8 1142.5l2.4 -3.6l2.4 3.6l-2.4 3.6z" fill="#21170f"/><path d="M1385.8 1131.5h52.2v1h-52.2zM1386.8 1132l2.4 -3.6l2.4 3.6l-2.4 3.6zM1391 1132l2.4 -3.6l2.4 3.6l-2.4 3.6zM1400.4 1132l2.4 -3.6l2.4 3.6l-2.4 3.6zM1404.4 1132l2.4 -3.6l2.4 3.6l-2.4 3.6zM1412.9 1132l2.4 -3.6l2.4 3.6l-2.4 3.6zM1417.6 1132l2.4 -3.6l2.4 3.6l-2.4 3.6zM1426.3 1132l2.4 -3.6l2.4 3.6l-2.4 3.6zM1431 1132l2.4 -3.6l2.4 3.6l-2.4 3.6zM1385.8 1142h52.2v1h-52.2zM1386.8 1142.5l2.4 -3.6l2.4 3.6l-2.4 3.6zM1391 1142.5l2.4 -3.6l2.4 3.6l-2.4 3.6zM1400.4 1142.5l2.4 -3.6l2.4 3.6l-2.4 3.6zM1404.4 1142.5l2.4 -3.6l2.4 3.6l-2.4 3.6zM1412.9 1142.5l2.4 -3.6l2.4 3.6l-2.4 3.6zM1417.6 1142.5l2.4 -3.6l2.4 3.6l-2.4 3.6zM1426.3 1142.5l2.4 -3.6l2.4 3.6l-2.4 3.6zM1431 1142.5l2.4 -3.6l2.4 3.6l-2.4 3.6z" fill="#21170f"/><path d="M1438 1131.5h53.4v1h-53.4zM1439 1132l2.4 -3.6l2.4 3.6l-2.4 3.6zM1443.2 1132l2.4 -3.6l2.4 3.6l-2.4 3.6zM1452.6 1132l2.4 -3.6l2.4 3.6l-2.4 3.6zM1456.6 1132l2.4 -3.6l2.4 3.6l-2.4 3.6zM1465.1 1132l2.4 -3.6l2.4 3.6l-2.4 3.6zM1469.8 1132l2.4 -3.6l2.4 3.6l-2.4 3.6zM1478.5 1132l2.4 -3.6l2.4 3.6l-2.4 3.6zM1483.2 1132l2.4 -3.6l2.4 3.6l-2.4 3.6zM1438 1142h53.4v1h-53.4zM1439 1142.5l2.4 -3.6l2.4 3.6l-2.4 3.6zM1443.2 1142.5l2.4 -3.6l2.4 3.6l-2.4 3.6zM1452.6 1142.5l2.4 -3.6l2.4 3.6l-2.4 3.6zM1456.6 1142.5l2.4 -3.6l2.4 3.6l-2.4 3.6zM1465.1 1142.5l2.4 -3.6l2.4 3.6l-2.4 3.6zM1469.8 1142.5l2.4 -3.6l2.4 3.6l-2.4 3.6zM1478.5 1142.5l2.4 -3.6l2.4 3.6l-2.4 3.6zM1483.2 1142.5l2.4 -3.6l2.4 3.6l-2.4 3.6z" fill="#21170f"/><path d="M1491.4 1131.5h51.5v1h-51.5zM1492.4 1132l2.4 -3.6l2.4 3.6l-2.4 3.6zM1496.6 1132l2.4 -3.6l2.4 3.6l-2.4 3.6zM1506 1132l2.4 -3.6l2.4 3.6l-2.4 3.6zM1510 1132l2.4 -3.6l2.4 3.6l-2.4 3.6zM1518.5 1132l2.4 -3.6l2.4 3.6l-2.4 3.6zM1523.2 1132l2.4 -3.6l2.4 3.6l-2.4 3.6zM1531.9 1132l2.4 -3.6l2.4 3.6l-2.4 3.6zM1536.6 1132l2.4 -3.6l2.4 3.6l-2.4 3.6zM1491.4 1142h51.5v1h-51.5zM1492.4 1142.5l2.4 -3.6l2.4 3.6l-2.4 3.6zM1496.6 1142.5l2.4 -3.6l2.4 3.6l-2.4 3.6zM1506 1142.5l2.4 -3.6l2.4 3.6l-2.4 3.6zM1510 1142.5l2.4 -3.6l2.4 3.6l-2.4 3.6zM1518.5 1142.5l2.4 -3.6l2.4 3.6l-2.4 3.6zM1523.2 1142.5l2.4 -3.6l2.4 3.6l-2.4 3.6zM1531.9 1142.5l2.4 -3.6l2.4 3.6l-2.4 3.6zM1536.6 1142.5l2.4 -3.6l2.4 3.6l-2.4 3.6z" fill="#21170f"/><path d="M1571 1131.5h52.8v1h-52.8zM1572 1132l2.4 -3.6l2.4 3.6l-2.4 3.6zM1576.2 1132l2.4 -3.6l2.4 3.6l-2.4 3.6zM1585.6 1132l2.4 -3.6l2.4 3.6l-2.4 3.6zM1589.6 1132l2.4 -3.6l2.4 3.6l-2.4 3.6zM1598.1 1132l2.4 -3.6l2.4 3.6l-2.4 3.6zM1602.8 1132l2.4 -3.6l2.4 3.6l-2.4 3.6zM1611.5 1132l2.4 -3.6l2.4 3.6l-2.4 3.6zM1616.2 1132l2.4 -3.6l2.4 3.6l-2.4 3.6zM1571 1142h52.8v1h-52.8zM1572 1142.5l2.4 -3.6l2.4 3.6l-2.4 3.6zM1576.2 1142.5l2.4 -3.6l2.4 3.6l-2.4 3.6zM1585.6 1142.5l2.4 -3.6l2.4 3.6l-2.4 3.6zM1589.6 1142.5l2.4 -3.6l2.4 3.6l-2.4 3.6zM1598.1 1142.5l2.4 -3.6l2.4 3.6l-2.4 3.6zM1602.8 1142.5l2.4 -3.6l2.4 3.6l-2.4 3.6zM1611.5 1142.5l2.4 -3.6l2.4 3.6l-2.4 3.6zM1616.2 1142.5l2.4 -3.6l2.4 3.6l-2.4 3.6z" fill="#21170f"/><path d="M1623.8 1131.5h52.7v1h-52.7zM1624.8 1132l2.4 -3.6l2.4 3.6l-2.4 3.6zM1629 1132l2.4 -3.6l2.4 3.6l-2.4 3.6zM1638.4 1132l2.4 -3.6l2.4 3.6l-2.4 3.6zM1642.4 1132l2.4 -3.6l2.4 3.6l-2.4 3.6zM1650.9 1132l2.4 -3.6l2.4 3.6l-2.4 3.6zM1655.6 1132l2.4 -3.6l2.4 3.6l-2.4 3.6zM1664.3 1132l2.4 -3.6l2.4 3.6l-2.4 3.6zM1669 1132l2.4 -3.6l2.4 3.6l-2.4 3.6zM1623.8 1142h52.7v1h-52.7zM1624.8 1142.5l2.4 -3.6l2.4 3.6l-2.4 3.6zM1629 1142.5l2.4 -3.6l2.4 3.6l-2.4 3.6zM1638.4 1142.5l2.4 -3.6l2.4 3.6l-2.4 3.6zM1642.4 1142.5l2.4 -3.6l2.4 3.6l-2.4 3.6zM1650.9 1142.5l2.4 -3.6l2.4 3.6l-2.4 3.6zM1655.6 1142.5l2.4 -3.6l2.4 3.6l-2.4 3.6zM1664.3 1142.5l2.4 -3.6l2.4 3.6l-2.4 3.6zM1669 1142.5l2.4 -3.6l2.4 3.6l-2.4 3.6z" fill="#21170f"/><path d="M1676.5 1131.5h52.4v1h-52.4zM1677.5 1132l2.4 -3.6l2.4 3.6l-2.4 3.6zM1681.7 1132l2.4 -3.6l2.4 3.6l-2.4 3.6zM1691.1 1132l2.4 -3.6l2.4 3.6l-2.4 3.6zM1695.1 1132l2.4 -3.6l2.4 3.6l-2.4 3.6zM1703.6 1132l2.4 -3.6l2.4 3.6l-2.4 3.6zM1708.3 1132l2.4 -3.6l2.4 3.6l-2.4 3.6zM1717 1132l2.4 -3.6l2.4 3.6l-2.4 3.6zM1721.7 1132l2.4 -3.6l2.4 3.6l-2.4 3.6zM1676.5 1142h52.4v1h-52.4zM1677.5 1142.5l2.4 -3.6l2.4 3.6l-2.4 3.6zM1681.7 1142.5l2.4 -3.6l2.4 3.6l-2.4 3.6zM1691.1 1142.5l2.4 -3.6l2.4 3.6l-2.4 3.6zM1695.1 1142.5l2.4 -3.6l2.4 3.6l-2.4 3.6zM1703.6 1142.5l2.4 -3.6l2.4 3.6l-2.4 3.6zM1708.3 1142.5l2.4 -3.6l2.4 3.6l-2.4 3.6zM1717 1142.5l2.4 -3.6l2.4 3.6l-2.4 3.6zM1721.7 1142.5l2.4 -3.6l2.4 3.6l-2.4 3.6z" fill="#21170f"/><path d="M1728.9 1131.5h27.2v1h-27.2zM1729.9 1132l2.4 -3.6l2.4 3.6l-2.4 3.6zM1734.1 1132l2.4 -3.6l2.4 3.6l-2.4 3.6zM1743.5 1132l2.4 -3.6l2.4 3.6l-2.4 3.6zM1747.5 1132l2.4 -3.6l2.4 3.6l-2.4 3.6zM1728.9 1142h27.2v1h-27.2zM1729.9 1142.5l2.4 -3.6l2.4 3.6l-2.4 3.6zM1734.1 1142.5l2.4 -3.6l2.4 3.6l-2.4 3.6zM1743.5 1142.5l2.4 -3.6l2.4 3.6l-2.4 3.6zM1747.5 1142.5l2.4 -3.6l2.4 3.6l-2.4 3.6z" fill="#21170f"/><path d="M1782.8 1131.5h52.2v1h-52.2zM1783.8 1132l2.4 -3.6l2.4 3.6l-2.4 3.6zM1788 1132l2.4 -3.6l2.4 3.6l-2.4 3.6zM1797.4 1132l2.4 -3.6l2.4 3.6l-2.4 3.6zM1801.4 1132l2.4 -3.6l2.4 3.6l-2.4 3.6zM1809.9 1132l2.4 -3.6l2.4 3.6l-2.4 3.6zM1814.6 1132l2.4 -3.6l2.4 3.6l-2.4 3.6zM1823.3 1132l2.4 -3.6l2.4 3.6l-2.4 3.6zM1828 1132l2.4 -3.6l2.4 3.6l-2.4 3.6zM1782.8 1142h52.2v1h-52.2zM1783.8 1142.5l2.4 -3.6l2.4 3.6l-2.4 3.6zM1788 1142.5l2.4 -3.6l2.4 3.6l-2.4 3.6zM1797.4 1142.5l2.4 -3.6l2.4 3.6l-2.4 3.6zM1801.4 1142.5l2.4 -3.6l2.4 3.6l-2.4 3.6zM1809.9 1142.5l2.4 -3.6l2.4 3.6l-2.4 3.6zM1814.6 1142.5l2.4 -3.6l2.4 3.6l-2.4 3.6zM1823.3 1142.5l2.4 -3.6l2.4 3.6l-2.4 3.6zM1828 1142.5l2.4 -3.6l2.4 3.6l-2.4 3.6z" fill="#21170f"/><path d="M1835 1131.5h52.2v1h-52.2zM1836 1132l2.4 -3.6l2.4 3.6l-2.4 3.6zM1840.2 1132l2.4 -3.6l2.4 3.6l-2.4 3.6zM1849.6 1132l2.4 -3.6l2.4 3.6l-2.4 3.6zM1853.6 1132l2.4 -3.6l2.4 3.6l-2.4 3.6zM1862.1 1132l2.4 -3.6l2.4 3.6l-2.4 3.6zM1866.8 1132l2.4 -3.6l2.4 3.6l-2.4 3.6zM1875.5 1132l2.4 -3.6l2.4 3.6l-2.4 3.6zM1880.2 1132l2.4 -3.6l2.4 3.6l-2.4 3.6zM1835 1142h52.2v1h-52.2zM1836 1142.5l2.4 -3.6l2.4 3.6l-2.4 3.6zM1840.2 1142.5l2.4 -3.6l2.4 3.6l-2.4 3.6zM1849.6 1142.5l2.4 -3.6l2.4 3.6l-2.4 3.6zM1853.6 1142.5l2.4 -3.6l2.4 3.6l-2.4 3.6zM1862.1 1142.5l2.4 -3.6l2.4 3.6l-2.4 3.6zM1866.8 1142.5l2.4 -3.6l2.4 3.6l-2.4 3.6zM1875.5 1142.5l2.4 -3.6l2.4 3.6l-2.4 3.6zM1880.2 1142.5l2.4 -3.6l2.4 3.6l-2.4 3.6z" fill="#21170f"/><path d="M1887.2 1131.5h53.8v1h-53.8zM1888.2 1132l2.4 -3.6l2.4 3.6l-2.4 3.6zM1892.4 1132l2.4 -3.6l2.4 3.6l-2.4 3.6zM1901.8 1132l2.4 -3.6l2.4 3.6l-2.4 3.6zM1905.8 1132l2.4 -3.6l2.4 3.6l-2.4 3.6zM1914.3 1132l2.4 -3.6l2.4 3.6l-2.4 3.6zM1919 1132l2.4 -3.6l2.4 3.6l-2.4 3.6zM1927.7 1132l2.4 -3.6l2.4 3.6l-2.4 3.6zM1932.4 1132l2.4 -3.6l2.4 3.6l-2.4 3.6zM1887.2 1142h53.8v1h-53.8zM1888.2 1142.5l2.4 -3.6l2.4 3.6l-2.4 3.6zM1892.4 1142.5l2.4 -3.6l2.4 3.6l-2.4 3.6zM1901.8 1142.5l2.4 -3.6l2.4 3.6l-2.4 3.6zM1905.8 1142.5l2.4 -3.6l2.4 3.6l-2.4 3.6zM1914.3 1142.5l2.4 -3.6l2.4 3.6l-2.4 3.6zM1919 1142.5l2.4 -3.6l2.4 3.6l-2.4 3.6zM1927.7 1142.5l2.4 -3.6l2.4 3.6l-2.4 3.6zM1932.4 1142.5l2.4 -3.6l2.4 3.6l-2.4 3.6z" fill="#21170f"/><path d="M1941 1131.5h26.4v1h-26.4zM1942 1132l2.4 -3.6l2.4 3.6l-2.4 3.6zM1946.2 1132l2.4 -3.6l2.4 3.6l-2.4 3.6zM1955.6 1132l2.4 -3.6l2.4 3.6l-2.4 3.6zM1959.6 1132l2.4 -3.6l2.4 3.6l-2.4 3.6zM1941 1142h26.4v1h-26.4zM1942 1142.5l2.4 -3.6l2.4 3.6l-2.4 3.6zM1946.2 1142.5l2.4 -3.6l2.4 3.6l-2.4 3.6zM1955.6 1142.5l2.4 -3.6l2.4 3.6l-2.4 3.6zM1959.6 1142.5l2.4 -3.6l2.4 3.6l-2.4 3.6z" fill="#21170f"/><path d="M35.7 1176.8h52.3v2h-52.3zM35.7 1188.2h52.3v2h-52.3z" fill="#1b1729"/><path d="M88 1176.8h53.2v2h-53.2zM88 1188.2h53.2v2h-53.2z" fill="#1b1729"/><path d="M511.9 1176.8h52.8v2h-52.8zM511.9 1188.2h52.8v2h-52.8z" fill="#1b1729"/><path d="M908.6 1176.8h53.2v2h-53.2zM908.6 1188.2h53.2v2h-53.2z" fill="#1b1729"/><path d="M961.8 1176.8h52.7v2h-52.7zM961.8 1188.2h52.7v2h-52.7z" fill="#1b1729"/><path d="M1121 1176.8h52.5v2h-52.5zM1121 1188.2h52.5v2h-52.5z" fill="#1b1729"/><path d="M1332.6 1176.8h52.7v2h-52.7zM1332.6 1188.2h52.7v2h-52.7z" fill="#1b1729"/><path d="M1728.9 1176.8h53.4v2h-53.4zM1728.9 1188.2h53.4v2h-53.4z" fill="#1b1729"/><path d="M1782.3 1176.8h52v2h-52zM1782.3 1188.2h52v2h-52z" fill="#1b1729"/></svg>
<div class="t" style="left:974px;top:1219.3px;color:#d2d3d6;font-size:12.8px;font-weight:bold">Ziehen Sie Dateien und Geräte hierhin.</div>
<i style="left:9px;top:1252px;width:2536px;height:4px;background:#1d1f23"></i>
<i style="left:9px;top:1277px;width:2536px;height:2px;background:#1d1f23"></i>
<svg width="14" height="16" style="left:8.55px;top:68px"><path d="M1 0.8 L12 7.8 L1 14.8Z" fill="#6e717a" stroke="#c9cbd1" stroke-width="1.2"/></svg>
<div class="t" style="left:23.35px;top:70px;color:#e8e9eb;font-size:13px;font-weight:bold">Intro</div>
<i style="left:141px;top:68px;width:1.2px;height:1211px;background:#cfd1d6"></i>
<svg width="14" height="16" style="left:140.85px;top:68px"><path d="M1 0.8 L12 7.8 L1 14.8Z" fill="#6e717a" stroke="#c9cbd1" stroke-width="1.2"/></svg>
<div class="t" style="left:155.65px;top:70px;color:#e8e9eb;font-size:13px;font-weight:bold">Verse 1</div>
<i style="left:353px;top:68px;width:1.2px;height:1211px;background:#cfd1d6"></i>
<svg width="14" height="16" style="left:352.53px;top:68px"><path d="M1 0.8 L12 7.8 L1 14.8Z" fill="#6e717a" stroke="#c9cbd1" stroke-width="1.2"/></svg>
<div class="t" style="left:367.33px;top:70px;color:#e8e9eb;font-size:13px;font-weight:bold">Verse 2</div>
<i style="left:565px;top:68px;width:1.2px;height:1211px;background:#cfd1d6"></i>
<svg width="14" height="16" style="left:564.21px;top:68px"><path d="M1 0.8 L12 7.8 L1 14.8Z" fill="#6e717a" stroke="#c9cbd1" stroke-width="1.2"/></svg>
<div class="t" style="left:579.01px;top:70px;color:#e8e9eb;font-size:13px;font-weight:bold">Chorus</div>
<i style="left:750px;top:68px;width:1.2px;height:1211px;background:#cfd1d6"></i>
<svg width="14" height="16" style="left:749.43px;top:68px"><path d="M1 0.8 L12 7.8 L1 14.8Z" fill="#6e717a" stroke="#c9cbd1" stroke-width="1.2"/></svg>
<div class="t" style="left:764.23px;top:70px;color:#e8e9eb;font-size:13px;font-weight:bold">Instrumental</div>
<i style="left:961px;top:68px;width:1.2px;height:1211px;background:#cfd1d6"></i>
<svg width="14" height="16" style="left:961.11px;top:68px"><path d="M1 0.8 L12 7.8 L1 14.8Z" fill="#6e717a" stroke="#c9cbd1" stroke-width="1.2"/></svg>
<div class="t" style="left:975.91px;top:70px;color:#e8e9eb;font-size:13px;font-weight:bold">Verse 3</div>
<i style="left:1173px;top:68px;width:1.2px;height:1211px;background:#cfd1d6"></i>
<svg width="14" height="16" style="left:1172.79px;top:68px"><path d="M1 0.8 L12 7.8 L1 14.8Z" fill="#6e717a" stroke="#c9cbd1" stroke-width="1.2"/></svg>
<div class="t" style="left:1187.59px;top:70px;color:#e8e9eb;font-size:13px;font-weight:bold">Chorus</div>
<i style="left:1385px;top:68px;width:1.2px;height:1211px;background:#cfd1d6"></i>
<svg width="14" height="16" style="left:1384.47px;top:68px"><path d="M1 0.8 L12 7.8 L1 14.8Z" fill="#6e717a" stroke="#c9cbd1" stroke-width="1.2"/></svg>
<div class="t" style="left:1399.27px;top:70px;color:#e8e9eb;font-size:13px;font-weight:bold">Chorus</div>
<i style="left:1570px;top:68px;width:1.2px;height:1211px;background:#cfd1d6"></i>
<svg width="14" height="16" style="left:1569.69px;top:68px"><path d="M1 0.8 L12 7.8 L1 14.8Z" fill="#6e717a" stroke="#c9cbd1" stroke-width="1.2"/></svg>
<div class="t" style="left:1584.49px;top:70px;color:#e8e9eb;font-size:13px;font-weight:bold">Instrumental</div>
<i style="left:1782px;top:68px;width:1.2px;height:1211px;background:#cfd1d6"></i>
<svg width="14" height="16" style="left:1781.37px;top:68px"><path d="M1 0.8 L12 7.8 L1 14.8Z" fill="#6e717a" stroke="#c9cbd1" stroke-width="1.2"/></svg>
<div class="t" style="left:1796.17px;top:70px;color:#e8e9eb;font-size:13px;font-weight:bold">Instrumental</div>
<i style="left:1967px;top:68px;width:1.2px;height:1211px;background:#cfd1d6"></i>
<svg width="14" height="16" style="left:1966.59px;top:68px"><path d="M1 0.8 L12 7.8 L1 14.8Z" fill="#6e717a" stroke="#c9cbd1" stroke-width="1.2"/></svg>
<div class="t" style="left:1981.39px;top:70px;color:#e8e9eb;font-size:13px;font-weight:bold">The End</div>
<i style="left:2073px;top:54px;width:1.5px;height:1228px;background:#b4b7bd"></i>
<i style="left:9px;top:54px;width:2065px;height:14.5px;background:#6d7079;border-top:1.5px solid #c3c5ca;border-bottom:1.5px solid #c3c5ca"></i>
<svg width="16" height="16" style="left:9px;top:54px"><path d="M0.8 1 L11 7.3 L0.8 13.6" fill="none" stroke="#c9cbd1" stroke-width="1.2"/></svg>
<svg width="16" height="16" style="left:2059px;top:54px"><path d="M14.2 1 L4 7.3 L14.2 13.6" fill="none" stroke="#c9cbd1" stroke-width="1.2"/></svg>
<i style="left:9px;top:46.5px;width:1px;height:8px;background:#a9acb3"></i>
<i style="left:9px;top:46.5px;width:2.5px;height:1px;background:#a9acb3"></i>
<div class="t" style="left:14.35px;top:41px;color:#c8cacf;font-size:13px">1</div>
<i style="left:35px;top:52.5px;width:1px;height:1.5px;background:#8e9198"></i>
<i style="left:62px;top:46.5px;width:1px;height:8px;background:#a9acb3"></i>
<i style="left:62px;top:46.5px;width:2.5px;height:1px;background:#a9acb3"></i>
<div class="t" style="left:67.27px;top:41px;color:#c8cacf;font-size:13px">3</div>
<i style="left:88px;top:52.5px;width:1px;height:1.5px;background:#8e9198"></i>
<i style="left:115px;top:46.5px;width:1px;height:8px;background:#a9acb3"></i>
<i style="left:115px;top:46.5px;width:2.5px;height:1px;background:#a9acb3"></i>
<div class="t" style="left:120.19px;top:41px;color:#c8cacf;font-size:13px">5</div>
<i style="left:141px;top:52.5px;width:1px;height:1.5px;background:#8e9198"></i>
<i style="left:168px;top:46.5px;width:1px;height:8px;background:#a9acb3"></i>
<i style="left:168px;top:46.5px;width:2.5px;height:1px;background:#a9acb3"></i>
<div class="t" style="left:173.11px;top:41px;color:#c8cacf;font-size:13px">7</div>
<i style="left:194px;top:52.5px;width:1px;height:1.5px;background:#8e9198"></i>
<i style="left:221px;top:46.5px;width:1px;height:8px;background:#a9acb3"></i>
<i style="left:221px;top:46.5px;width:2.5px;height:1px;background:#a9acb3"></i>
<div class="t" style="left:226.03px;top:41px;color:#c8cacf;font-size:13px">9</div>
<i style="left:247px;top:52.5px;width:1px;height:1.5px;background:#8e9198"></i>
<i style="left:273px;top:46.5px;width:1px;height:8px;background:#a9acb3"></i>
<i style="left:273px;top:46.5px;width:2.5px;height:1px;background:#a9acb3"></i>
<div class="t" style="left:278.95px;top:41px;color:#c8cacf;font-size:13px">11</div>
<i style="left:300px;top:52.5px;width:1px;height:1.5px;background:#8e9198"></i>
<i style="left:326px;top:46.5px;width:1px;height:8px;background:#a9acb3"></i>
<i style="left:326px;top:46.5px;width:2.5px;height:1px;background:#a9acb3"></i>
<div class="t" style="left:331.87px;top:41px;color:#c8cacf;font-size:13px">13</div>
<i style="left:353px;top:52.5px;width:1px;height:1.5px;background:#8e9198"></i>
<i style="left:379px;top:46.5px;width:1px;height:8px;background:#a9acb3"></i>
<i style="left:379px;top:46.5px;width:2.5px;height:1px;background:#a9acb3"></i>
<div class="t" style="left:384.79px;top:41px;color:#c8cacf;font-size:13px">15</div>
<i style="left:406px;top:52.5px;width:1px;height:1.5px;background:#8e9198"></i>
<i style="left:432px;top:46.5px;width:1px;height:8px;background:#a9acb3"></i>
<i style="left:432px;top:46.5px;width:2.5px;height:1px;background:#a9acb3"></i>
<div class="t" style="left:437.71px;top:41px;color:#c8cacf;font-size:13px">17</div>
<i style="left:459px;top:52.5px;width:1px;height:1.5px;background:#8e9198"></i>
<i style="left:485px;top:46.5px;width:1px;height:8px;background:#a9acb3"></i>
<i style="left:485px;top:46.5px;width:2.5px;height:1px;background:#a9acb3"></i>
<div class="t" style="left:490.63px;top:41px;color:#c8cacf;font-size:13px">19</div>
<i style="left:512px;top:52.5px;width:1px;height:1.5px;background:#8e9198"></i>
<i style="left:538px;top:46.5px;width:1px;height:8px;background:#a9acb3"></i>
<i style="left:538px;top:46.5px;width:2.5px;height:1px;background:#a9acb3"></i>
<div class="t" style="left:543.55px;top:41px;color:#c8cacf;font-size:13px">21</div>
<i style="left:565px;top:52.5px;width:1px;height:1.5px;background:#8e9198"></i>
<i style="left:591px;top:46.5px;width:1px;height:8px;background:#a9acb3"></i>
<i style="left:591px;top:46.5px;width:2.5px;height:1px;background:#a9acb3"></i>
<div class="t" style="left:596.47px;top:41px;color:#c8cacf;font-size:13px">23</div>
<i style="left:617px;top:52.5px;width:1px;height:1.5px;background:#8e9198"></i>
<i style="left:644px;top:46.5px;width:1px;height:8px;background:#a9acb3"></i>
<i style="left:644px;top:46.5px;width:2.5px;height:1px;background:#a9acb3"></i>
<div class="t" style="left:649.39px;top:41px;color:#c8cacf;font-size:13px">25</div>
<i style="left:670px;top:52.5px;width:1px;height:1.5px;background:#8e9198"></i>
<i style="left:697px;top:46.5px;width:1px;height:8px;background:#a9acb3"></i>
<i style="left:697px;top:46.5px;width:2.5px;height:1px;background:#a9acb3"></i>
<div class="t" style="left:702.31px;top:41px;color:#c8cacf;font-size:13px">27</div>
<i style="left:723px;top:52.5px;width:1px;height:1.5px;background:#8e9198"></i>
<i style="left:750px;top:46.5px;width:1px;height:8px;background:#a9acb3"></i>
<i style="left:750px;top:46.5px;width:2.5px;height:1px;background:#a9acb3"></i>
<div class="t" style="left:755.23px;top:41px;color:#c8cacf;font-size:13px">29</div>
<i style="left:776px;top:52.5px;width:1px;height:1.5px;background:#8e9198"></i>
<i style="left:803px;top:46.5px;width:1px;height:8px;background:#a9acb3"></i>
<i style="left:803px;top:46.5px;width:2.5px;height:1px;background:#a9acb3"></i>
<div class="t" style="left:808.15px;top:41px;color:#c8cacf;font-size:13px">31</div>
<i style="left:829px;top:52.5px;width:1px;height:1.5px;background:#8e9198"></i>
<i style="left:856px;top:46.5px;width:1px;height:8px;background:#a9acb3"></i>
<i style="left:856px;top:46.5px;width:2.5px;height:1px;background:#a9acb3"></i>
<div class="t" style="left:861.07px;top:41px;color:#c8cacf;font-size:13px">33</div>
<i style="left:882px;top:52.5px;width:1px;height:1.5px;background:#8e9198"></i>
<i style="left:908px;top:46.5px;width:1px;height:8px;background:#a9acb3"></i>
<i style="left:908px;top:46.5px;width:2.5px;height:1px;background:#a9acb3"></i>
<div class="t" style="left:913.99px;top:41px;color:#c8cacf;font-size:13px">35</div>
<i style="left:935px;top:52.5px;width:1px;height:1.5px;background:#8e9198"></i>
<i style="left:961px;top:46.5px;width:1px;height:8px;background:#a9acb3"></i>
<i style="left:961px;top:46.5px;width:2.5px;height:1px;background:#a9acb3"></i>
<div class="t" style="left:966.91px;top:41px;color:#c8cacf;font-size:13px">37</div>
<i style="left:988px;top:52.5px;width:1px;height:1.5px;background:#8e9198"></i>
<i style="left:1014px;top:46.5px;width:1px;height:8px;background:#a9acb3"></i>
<i style="left:1014px;top:46.5px;width:2.5px;height:1px;background:#a9acb3"></i>
<div class="t" style="left:1019.83px;top:41px;color:#c8cacf;font-size:13px">39</div>
<i style="left:1041px;top:52.5px;width:1px;height:1.5px;background:#8e9198"></i>
<i style="left:1067px;top:46.5px;width:1px;height:8px;background:#a9acb3"></i>
<i style="left:1067px;top:46.5px;width:2.5px;height:1px;background:#a9acb3"></i>
<div class="t" style="left:1072.75px;top:41px;color:#c8cacf;font-size:13px">41</div>
<i style="left:1094px;top:52.5px;width:1px;height:1.5px;background:#8e9198"></i>
<i style="left:1120px;top:46.5px;width:1px;height:8px;background:#a9acb3"></i>
<i style="left:1120px;top:46.5px;width:2.5px;height:1px;background:#a9acb3"></i>
<div class="t" style="left:1125.67px;top:41px;color:#c8cacf;font-size:13px">43</div>
<i style="left:1147px;top:52.5px;width:1px;height:1.5px;background:#8e9198"></i>
<i style="left:1173px;top:46.5px;width:1px;height:8px;background:#a9acb3"></i>
<i style="left:1173px;top:46.5px;width:2.5px;height:1px;background:#a9acb3"></i>
<div class="t" style="left:1178.59px;top:41px;color:#c8cacf;font-size:13px">45</div>
<i style="left:1200px;top:52.5px;width:1px;height:1.5px;background:#8e9198"></i>
<i style="left:1226px;top:46.5px;width:1px;height:8px;background:#a9acb3"></i>
<i style="left:1226px;top:46.5px;width:2.5px;height:1px;background:#a9acb3"></i>
<div class="t" style="left:1231.51px;top:41px;color:#c8cacf;font-size:13px">47</div>
<i style="left:1252px;top:52.5px;width:1px;height:1.5px;background:#8e9198"></i>
<i style="left:1279px;top:46.5px;width:1px;height:8px;background:#a9acb3"></i>
<i style="left:1279px;top:46.5px;width:2.5px;height:1px;background:#a9acb3"></i>
<div class="t" style="left:1284.43px;top:41px;color:#c8cacf;font-size:13px">49</div>
<i style="left:1305px;top:52.5px;width:1px;height:1.5px;background:#8e9198"></i>
<i style="left:1332px;top:46.5px;width:1px;height:8px;background:#a9acb3"></i>
<i style="left:1332px;top:46.5px;width:2.5px;height:1px;background:#a9acb3"></i>
<div class="t" style="left:1337.35px;top:41px;color:#c8cacf;font-size:13px">51</div>
<i style="left:1358px;top:52.5px;width:1px;height:1.5px;background:#8e9198"></i>
<i style="left:1385px;top:46.5px;width:1px;height:8px;background:#a9acb3"></i>
<i style="left:1385px;top:46.5px;width:2.5px;height:1px;background:#a9acb3"></i>
<div class="t" style="left:1390.27px;top:41px;color:#c8cacf;font-size:13px">53</div>
<i style="left:1411px;top:52.5px;width:1px;height:1.5px;background:#8e9198"></i>
<i style="left:1438px;top:46.5px;width:1px;height:8px;background:#a9acb3"></i>
<i style="left:1438px;top:46.5px;width:2.5px;height:1px;background:#a9acb3"></i>
<div class="t" style="left:1443.19px;top:41px;color:#c8cacf;font-size:13px">55</div>
<i style="left:1464px;top:52.5px;width:1px;height:1.5px;background:#8e9198"></i>
<i style="left:1491px;top:46.5px;width:1px;height:8px;background:#a9acb3"></i>
<i style="left:1491px;top:46.5px;width:2.5px;height:1px;background:#a9acb3"></i>
<div class="t" style="left:1496.11px;top:41px;color:#c8cacf;font-size:13px">57</div>
<i style="left:1517px;top:52.5px;width:1px;height:1.5px;background:#8e9198"></i>
<i style="left:1544px;top:46.5px;width:1px;height:8px;background:#a9acb3"></i>
<i style="left:1544px;top:46.5px;width:2.5px;height:1px;background:#a9acb3"></i>
<div class="t" style="left:1549.03px;top:41px;color:#c8cacf;font-size:13px">59</div>
<i style="left:1570px;top:52.5px;width:1px;height:1.5px;background:#8e9198"></i>
<i style="left:1596px;top:46.5px;width:1px;height:8px;background:#a9acb3"></i>
<i style="left:1596px;top:46.5px;width:2.5px;height:1px;background:#a9acb3"></i>
<div class="t" style="left:1601.95px;top:41px;color:#c8cacf;font-size:13px">61</div>
<i style="left:1623px;top:52.5px;width:1px;height:1.5px;background:#8e9198"></i>
<i style="left:1649px;top:46.5px;width:1px;height:8px;background:#a9acb3"></i>
<i style="left:1649px;top:46.5px;width:2.5px;height:1px;background:#a9acb3"></i>
<div class="t" style="left:1654.87px;top:41px;color:#c8cacf;font-size:13px">63</div>
<i style="left:1676px;top:52.5px;width:1px;height:1.5px;background:#8e9198"></i>
<i style="left:1702px;top:46.5px;width:1px;height:8px;background:#a9acb3"></i>
<i style="left:1702px;top:46.5px;width:2.5px;height:1px;background:#a9acb3"></i>
<div class="t" style="left:1707.79px;top:41px;color:#c8cacf;font-size:13px">65</div>
<i style="left:1729px;top:52.5px;width:1px;height:1.5px;background:#8e9198"></i>
<i style="left:1755px;top:46.5px;width:1px;height:8px;background:#a9acb3"></i>
<i style="left:1755px;top:46.5px;width:2.5px;height:1px;background:#a9acb3"></i>
<div class="t" style="left:1760.71px;top:41px;color:#c8cacf;font-size:13px">67</div>
<i style="left:1782px;top:52.5px;width:1px;height:1.5px;background:#8e9198"></i>
<i style="left:1808px;top:46.5px;width:1px;height:8px;background:#a9acb3"></i>
<i style="left:1808px;top:46.5px;width:2.5px;height:1px;background:#a9acb3"></i>
<div class="t" style="left:1813.63px;top:41px;color:#c8cacf;font-size:13px">69</div>
<i style="left:1835px;top:52.5px;width:1px;height:1.5px;background:#8e9198"></i>
<i style="left:1861px;top:46.5px;width:1px;height:8px;background:#a9acb3"></i>
<i style="left:1861px;top:46.5px;width:2.5px;height:1px;background:#a9acb3"></i>
<div class="t" style="left:1866.55px;top:41px;color:#c8cacf;font-size:13px">71</div>
<i style="left:1888px;top:52.5px;width:1px;height:1.5px;background:#8e9198"></i>
<i style="left:1914px;top:46.5px;width:1px;height:8px;background:#a9acb3"></i>
<i style="left:1914px;top:46.5px;width:2.5px;height:1px;background:#a9acb3"></i>
<div class="t" style="left:1919.47px;top:41px;color:#c8cacf;font-size:13px">73</div>
<i style="left:1940px;top:52.5px;width:1px;height:1.5px;background:#8e9198"></i>
<i style="left:1967px;top:46.5px;width:1px;height:8px;background:#a9acb3"></i>
<i style="left:1967px;top:46.5px;width:2.5px;height:1px;background:#a9acb3"></i>
<div class="t" style="left:1972.39px;top:41px;color:#c8cacf;font-size:13px">75</div>
<i style="left:1993px;top:52.5px;width:1px;height:1.5px;background:#8e9198"></i>
<i style="left:2020px;top:46.5px;width:1px;height:8px;background:#a9acb3"></i>
<i style="left:2020px;top:46.5px;width:2.5px;height:1px;background:#a9acb3"></i>
<div class="t" style="left:2025.31px;top:41px;color:#c8cacf;font-size:13px">77</div>
<i style="left:2046px;top:52.5px;width:1px;height:1.5px;background:#8e9198"></i>
<i style="left:2073px;top:46.5px;width:1px;height:8px;background:#a9acb3"></i>
<i style="left:2073px;top:46.5px;width:2.5px;height:1px;background:#a9acb3"></i>
<div class="t" style="left:2078.23px;top:41px;color:#c8cacf;font-size:13px">79</div>
<i style="left:2099px;top:52.5px;width:1px;height:1.5px;background:#8e9198"></i>
<i style="left:2126px;top:46.5px;width:1px;height:8px;background:#a9acb3"></i>
<i style="left:2126px;top:46.5px;width:2.5px;height:1px;background:#a9acb3"></i>
<div class="t" style="left:2131.15px;top:41px;color:#c8cacf;font-size:13px">81</div>
<i style="left:2152px;top:52.5px;width:1px;height:1.5px;background:#8e9198"></i>
<i style="left:8px;top:1281px;width:1px;height:7px;background:#a9acb3"></i>
<i style="left:8px;top:1287px;width:2.5px;height:1px;background:#a9acb3"></i>
<div class="t" style="left:12px;top:1282.5px;color:#c8cacf;font-size:13px">0:00</div>
<i style="left:31px;top:1280px;width:1px;height:2px;background:#8e9198"></i>
<i style="left:53px;top:1280px;width:1px;height:2px;background:#8e9198"></i>
<i style="left:75px;top:1280px;width:1px;height:2px;background:#8e9198"></i>
<i style="left:97px;top:1280px;width:1px;height:2px;background:#8e9198"></i>
<i style="left:119px;top:1281px;width:1px;height:7px;background:#a9acb3"></i>
<i style="left:119px;top:1287px;width:2.5px;height:1px;background:#a9acb3"></i>
<div class="t" style="left:122.27px;top:1282.5px;color:#c8cacf;font-size:13px">0:10</div>
<i style="left:141px;top:1280px;width:1px;height:2px;background:#8e9198"></i>
<i style="left:163px;top:1280px;width:1px;height:2px;background:#8e9198"></i>
<i style="left:185px;top:1280px;width:1px;height:2px;background:#8e9198"></i>
<i style="left:207px;top:1280px;width:1px;height:2px;background:#8e9198"></i>
<i style="left:229px;top:1281px;width:1px;height:7px;background:#a9acb3"></i>
<i style="left:229px;top:1287px;width:2.5px;height:1px;background:#a9acb3"></i>
<div class="t" style="left:232.54px;top:1282.5px;color:#c8cacf;font-size:13px">0:20</div>
<i style="left:251px;top:1280px;width:1px;height:2px;background:#8e9198"></i>
<i style="left:273px;top:1280px;width:1px;height:2px;background:#8e9198"></i>
<i style="left:295px;top:1280px;width:1px;height:2px;background:#8e9198"></i>
<i style="left:317px;top:1280px;width:1px;height:2px;background:#8e9198"></i>
<i style="left:339px;top:1281px;width:1px;height:7px;background:#a9acb3"></i>
<i style="left:339px;top:1287px;width:2.5px;height:1px;background:#a9acb3"></i>
<div class="t" style="left:342.81px;top:1282.5px;color:#c8cacf;font-size:13px">0:30</div>
<i style="left:361px;top:1280px;width:1px;height:2px;background:#8e9198"></i>
<i style="left:383px;top:1280px;width:1px;height:2px;background:#8e9198"></i>
<i style="left:405px;top:1280px;width:1px;height:2px;background:#8e9198"></i>
<i style="left:428px;top:1280px;width:1px;height:2px;background:#8e9198"></i>
<i style="left:450px;top:1281px;width:1px;height:7px;background:#a9acb3"></i>
<i style="left:450px;top:1287px;width:2.5px;height:1px;background:#a9acb3"></i>
<div class="t" style="left:453.08px;top:1282.5px;color:#c8cacf;font-size:13px">0:40</div>
<i style="left:472px;top:1280px;width:1px;height:2px;background:#8e9198"></i>
<i style="left:494px;top:1280px;width:1px;height:2px;background:#8e9198"></i>
<i style="left:516px;top:1280px;width:1px;height:2px;background:#8e9198"></i>
<i style="left:538px;top:1280px;width:1px;height:2px;background:#8e9198"></i>
<i style="left:560px;top:1281px;width:1px;height:7px;background:#a9acb3"></i>
<i style="left:560px;top:1287px;width:2.5px;height:1px;background:#a9acb3"></i>
<div class="t" style="left:563.35px;top:1282.5px;color:#c8cacf;font-size:13px">0:50</div>
<i style="left:582px;top:1280px;width:1px;height:2px;background:#8e9198"></i>
<i style="left:604px;top:1280px;width:1px;height:2px;background:#8e9198"></i>
<i style="left:626px;top:1280px;width:1px;height:2px;background:#8e9198"></i>
<i style="left:648px;top:1280px;width:1px;height:2px;background:#8e9198"></i>
<i style="left:670px;top:1281px;width:1px;height:7px;background:#a9acb3"></i>
<i style="left:670px;top:1287px;width:2.5px;height:1px;background:#a9acb3"></i>
<div class="t" style="left:673.62px;top:1282.5px;color:#c8cacf;font-size:13px">1:00</div>
<i style="left:692px;top:1280px;width:1px;height:2px;background:#8e9198"></i>
<i style="left:714px;top:1280px;width:1px;height:2px;background:#8e9198"></i>
<i style="left:736px;top:1280px;width:1px;height:2px;background:#8e9198"></i>
<i style="left:758px;top:1280px;width:1px;height:2px;background:#8e9198"></i>
<i style="left:780px;top:1281px;width:1px;height:7px;background:#a9acb3"></i>
<i style="left:780px;top:1287px;width:2.5px;height:1px;background:#a9acb3"></i>
<div class="t" style="left:783.89px;top:1282.5px;color:#c8cacf;font-size:13px">1:10</div>
<i style="left:802px;top:1280px;width:1px;height:2px;background:#8e9198"></i>
<i style="left:824px;top:1280px;width:1px;height:2px;background:#8e9198"></i>
<i style="left:847px;top:1280px;width:1px;height:2px;background:#8e9198"></i>
<i style="left:869px;top:1280px;width:1px;height:2px;background:#8e9198"></i>
<i style="left:891px;top:1281px;width:1px;height:7px;background:#a9acb3"></i>
<i style="left:891px;top:1287px;width:2.5px;height:1px;background:#a9acb3"></i>
<div class="t" style="left:894.16px;top:1282.5px;color:#c8cacf;font-size:13px">1:20</div>
<i style="left:913px;top:1280px;width:1px;height:2px;background:#8e9198"></i>
<i style="left:935px;top:1280px;width:1px;height:2px;background:#8e9198"></i>
<i style="left:957px;top:1280px;width:1px;height:2px;background:#8e9198"></i>
<i style="left:979px;top:1280px;width:1px;height:2px;background:#8e9198"></i>
<i style="left:1001px;top:1281px;width:1px;height:7px;background:#a9acb3"></i>
<i style="left:1001px;top:1287px;width:2.5px;height:1px;background:#a9acb3"></i>
<div class="t" style="left:1004.43px;top:1282.5px;color:#c8cacf;font-size:13px">1:30</div>
<i style="left:1023px;top:1280px;width:1px;height:2px;background:#8e9198"></i>
<i style="left:1045px;top:1280px;width:1px;height:2px;background:#8e9198"></i>
<i style="left:1067px;top:1280px;width:1px;height:2px;background:#8e9198"></i>
<i style="left:1089px;top:1280px;width:1px;height:2px;background:#8e9198"></i>
<i style="left:1111px;top:1281px;width:1px;height:7px;background:#a9acb3"></i>
<i style="left:1111px;top:1287px;width:2.5px;height:1px;background:#a9acb3"></i>
<div class="t" style="left:1114.7px;top:1282.5px;color:#c8cacf;font-size:13px">1:40</div>
<i style="left:1133px;top:1280px;width:1px;height:2px;background:#8e9198"></i>
<i style="left:1155px;top:1280px;width:1px;height:2px;background:#8e9198"></i>
<i style="left:1177px;top:1280px;width:1px;height:2px;background:#8e9198"></i>
<i style="left:1199px;top:1280px;width:1px;height:2px;background:#8e9198"></i>
<i style="left:1221px;top:1281px;width:1px;height:7px;background:#a9acb3"></i>
<i style="left:1221px;top:1287px;width:2.5px;height:1px;background:#a9acb3"></i>
<div class="t" style="left:1224.97px;top:1282.5px;color:#c8cacf;font-size:13px">1:50</div>
<i style="left:1244px;top:1280px;width:1px;height:2px;background:#8e9198"></i>
<i style="left:1266px;top:1280px;width:1px;height:2px;background:#8e9198"></i>
<i style="left:1288px;top:1280px;width:1px;height:2px;background:#8e9198"></i>
<i style="left:1310px;top:1280px;width:1px;height:2px;background:#8e9198"></i>
<i style="left:1332px;top:1281px;width:1px;height:7px;background:#a9acb3"></i>
<i style="left:1332px;top:1287px;width:2.5px;height:1px;background:#a9acb3"></i>
<div class="t" style="left:1335.24px;top:1282.5px;color:#c8cacf;font-size:13px">2:00</div>
<i style="left:1354px;top:1280px;width:1px;height:2px;background:#8e9198"></i>
<i style="left:1376px;top:1280px;width:1px;height:2px;background:#8e9198"></i>
<i style="left:1398px;top:1280px;width:1px;height:2px;background:#8e9198"></i>
<i style="left:1420px;top:1280px;width:1px;height:2px;background:#8e9198"></i>
<i style="left:1442px;top:1281px;width:1px;height:7px;background:#a9acb3"></i>
<i style="left:1442px;top:1287px;width:2.5px;height:1px;background:#a9acb3"></i>
<div class="t" style="left:1445.51px;top:1282.5px;color:#c8cacf;font-size:13px">2:10</div>
<i style="left:1464px;top:1280px;width:1px;height:2px;background:#8e9198"></i>
<i style="left:1486px;top:1280px;width:1px;height:2px;background:#8e9198"></i>
<i style="left:1508px;top:1280px;width:1px;height:2px;background:#8e9198"></i>
<i style="left:1530px;top:1280px;width:1px;height:2px;background:#8e9198"></i>
<i style="left:1552px;top:1281px;width:1px;height:7px;background:#a9acb3"></i>
<i style="left:1552px;top:1287px;width:2.5px;height:1px;background:#a9acb3"></i>
<div class="t" style="left:1555.78px;top:1282.5px;color:#c8cacf;font-size:13px">2:20</div>
<i style="left:1574px;top:1280px;width:1px;height:2px;background:#8e9198"></i>
<i style="left:1596px;top:1280px;width:1px;height:2px;background:#8e9198"></i>
<i style="left:1618px;top:1280px;width:1px;height:2px;background:#8e9198"></i>
<i style="left:1640px;top:1280px;width:1px;height:2px;background:#8e9198"></i>
<i style="left:1663px;top:1281px;width:1px;height:7px;background:#a9acb3"></i>
<i style="left:1663px;top:1287px;width:2.5px;height:1px;background:#a9acb3"></i>
<div class="t" style="left:1666.05px;top:1282.5px;color:#c8cacf;font-size:13px">2:30</div>
<i style="left:1685px;top:1280px;width:1px;height:2px;background:#8e9198"></i>
<i style="left:1707px;top:1280px;width:1px;height:2px;background:#8e9198"></i>
<i style="left:1729px;top:1280px;width:1px;height:2px;background:#8e9198"></i>
<i style="left:1751px;top:1280px;width:1px;height:2px;background:#8e9198"></i>
<i style="left:1773px;top:1281px;width:1px;height:7px;background:#a9acb3"></i>
<i style="left:1773px;top:1287px;width:2.5px;height:1px;background:#a9acb3"></i>
<div class="t" style="left:1776.32px;top:1282.5px;color:#c8cacf;font-size:13px">2:40</div>
<i style="left:1795px;top:1280px;width:1px;height:2px;background:#8e9198"></i>
<i style="left:1817px;top:1280px;width:1px;height:2px;background:#8e9198"></i>
<i style="left:1839px;top:1280px;width:1px;height:2px;background:#8e9198"></i>
<i style="left:1861px;top:1280px;width:1px;height:2px;background:#8e9198"></i>
<i style="left:1883px;top:1281px;width:1px;height:7px;background:#a9acb3"></i>
<i style="left:1883px;top:1287px;width:2.5px;height:1px;background:#a9acb3"></i>
<div class="t" style="left:1886.59px;top:1282.5px;color:#c8cacf;font-size:13px">2:50</div>
<i style="left:1905px;top:1280px;width:1px;height:2px;background:#8e9198"></i>
<i style="left:1927px;top:1280px;width:1px;height:2px;background:#8e9198"></i>
<i style="left:1949px;top:1280px;width:1px;height:2px;background:#8e9198"></i>
<i style="left:1971px;top:1280px;width:1px;height:2px;background:#8e9198"></i>
<i style="left:1993px;top:1281px;width:1px;height:7px;background:#a9acb3"></i>
<i style="left:1993px;top:1287px;width:2.5px;height:1px;background:#a9acb3"></i>
<div class="t" style="left:1996.86px;top:1282.5px;color:#c8cacf;font-size:13px">3:00</div>
<i style="left:2015px;top:1280px;width:1px;height:2px;background:#8e9198"></i>
<i style="left:2037px;top:1280px;width:1px;height:2px;background:#8e9198"></i>
<i style="left:2060px;top:1280px;width:1px;height:2px;background:#8e9198"></i>
<i style="left:2082px;top:1280px;width:1px;height:2px;background:#8e9198"></i>
<i style="left:2104px;top:1281px;width:1px;height:7px;background:#a9acb3"></i>
<i style="left:2104px;top:1287px;width:2.5px;height:1px;background:#a9acb3"></i>
<div class="t" style="left:2107.13px;top:1282.5px;color:#c8cacf;font-size:13px">3:10</div>
<i style="left:2126px;top:1280px;width:1px;height:2px;background:#8e9198"></i>
<i style="left:2148px;top:1280px;width:1px;height:2px;background:#8e9198"></i>
<i style="left:2170px;top:1280px;width:1px;height:2px;background:#8e9198"></i>
<svg width="10" height="10" style="left:7px;top:1280px"><path d="M1 0 L6 5 L1 6Z" fill="#4fd3e0"/></svg>
<i style="left:2176.5px;top:88px;width:368.5px;height:1164px;background:#30333a"></i>
<i style="left:2176.5px;top:28px;width:368.5px;height:55px;background:#30333a"></i>
<i style="left:2176.5px;top:83px;width:368.5px;height:5px;background:#1d1f23"></i>
<i style="left:2176.5px;top:132px;width:368.5px;height:2.25px;background:#1d1f23"></i>
<i style="left:2176.5px;top:178.25px;width:368.5px;height:2.25px;background:#1d1f23"></i>
<i style="left:2176.5px;top:224.5px;width:368.5px;height:2.25px;background:#1d1f23"></i>
<i style="left:2176.5px;top:270.75px;width:368.5px;height:2.25px;background:#1d1f23"></i>
<i style="left:2176.5px;top:317px;width:368.5px;height:2.25px;background:#1d1f23"></i>
<i style="left:2176.5px;top:363.25px;width:368.5px;height:2.25px;background:#1d1f23"></i>
<i style="left:2176.5px;top:409.5px;width:368.5px;height:2.25px;background:#1d1f23"></i>
<i style="left:2176.5px;top:455.75px;width:368.5px;height:2.25px;background:#1d1f23"></i>
<i style="left:2176.5px;top:502px;width:368.5px;height:2.25px;background:#1d1f23"></i>
<i style="left:2176.5px;top:548.25px;width:368.5px;height:2.25px;background:#1d1f23"></i>
<i style="left:2176.5px;top:594.5px;width:368.5px;height:2.25px;background:#1d1f23"></i>
<i style="left:2176.5px;top:640.75px;width:368.5px;height:2.25px;background:#1d1f23"></i>
<i style="left:2176.5px;top:687px;width:368.5px;height:2.25px;background:#1d1f23"></i>
<i style="left:2176.5px;top:733.25px;width:368.5px;height:2.25px;background:#1d1f23"></i>
<i style="left:2176.5px;top:779.5px;width:368.5px;height:2.25px;background:#1d1f23"></i>
<i style="left:2176.5px;top:825.75px;width:368.5px;height:2.25px;background:#1d1f23"></i>
<i style="left:2176.5px;top:872px;width:368.5px;height:2.25px;background:#1d1f23"></i>
<i style="left:2176.5px;top:918.25px;width:368.5px;height:2.25px;background:#1d1f23"></i>
<i style="left:2176.5px;top:964.5px;width:368.5px;height:2.25px;background:#1d1f23"></i>
<i style="left:2176.5px;top:1010.75px;width:368.5px;height:2.25px;background:#1d1f23"></i>
<i style="left:2176.5px;top:1057px;width:368.5px;height:2.25px;background:#1d1f23"></i>
<i style="left:2176.5px;top:1103.25px;width:368.5px;height:2.25px;background:#1d1f23"></i>
<i style="left:2176.5px;top:1149.5px;width:368.5px;height:2.25px;background:#1d1f23"></i>
<i style="left:2176.5px;top:1195.75px;width:368.5px;height:2.25px;background:#1d1f23"></i>
<i style="left:2176.5px;top:1252px;width:368.5px;height:4px;background:#1d1f23"></i>
<i style="left:2176.5px;top:1256px;width:368.5px;height:21px;background:#30333a"></i>
<i style="left:2176.5px;top:1277px;width:368.5px;height:2px;background:#1d1f23"></i>
<i style="left:2176.5px;top:1279px;width:368.5px;height:27px;background:#30333a"></i>
<i style="left:2181px;top:39.4px;width:35.7px;height:15.3px;background:#1b1c21;border-radius:8px"></i>
<div class="t" style="left:2181px;top:40.5px;width:36px;text-align:center;color:#ececee;font-size:12.5px;font-weight:bold">Del</div>
<i style="left:2229.6px;top:38.2px;width:31.2px;height:18.2px;background:#17181c;border:1.2px solid #c3c5ca"></i>
<svg width="20" height="14" style="left:2235px;top:40px"><path d="M7.6 9.7 L12.8 4.4" stroke="#e6e6e8" stroke-width="1.1"/><circle cx="7.6" cy="9.7" r="1.7" fill="#e6e6e8"/><circle cx="12.8" cy="4.4" r="1.7" fill="#e6e6e8"/></svg>
<i style="left:2264.3px;top:39.1px;width:28.5px;height:15.6px;background:#1b1c21"></i>
<svg width="14" height="14" style="left:2271px;top:40px"><path d="M4.2 7 V5 a2.8 2.8 0 0 1 5.6 0 V7" fill="none" stroke="#e6e6e8" stroke-width="1.4"/><rect x="2.6" y="6.6" width="8.8" height="5.6" fill="#e6e6e8"/></svg>
<svg width="16" height="16" style="left:2181.3px;top:62px"><circle cx="7.5" cy="7.5" r="7.3" fill="#1b1c21"/><path d="M12 7.5 H5 M8 4.5 L4.8 7.5 L8 10.5" fill="none" stroke="#cfd0d4" stroke-width="1.8"/></svg>
<svg width="16" height="16" style="left:2201.3px;top:62px"><circle cx="7.5" cy="7.5" r="7.3" fill="#1b1c21"/><path d="M3 7.5 H10 M7 4.5 L10.2 7.5 L7 10.5" fill="none" stroke="#cfd0d4" stroke-width="1.8"/></svg>
<i style="left:2177px;top:88px;width:123px;height:44px;background:#1dc8b4"></i>
<svg width="16" height="16" style="left:2180.8px;top:91px"><circle cx="8" cy="8" r="7.2" fill="none" stroke="#083a34" stroke-width="1.5"/><path d="M4 6.1 L12 6.1 L8 11.2Z" fill="#083a34"/></svg>
<div class="t" style="left:2206px;top:93px;width:93px;color:#083a34;font-size:12px;font-weight:bold">Big Wave Lead</div>
<i style="left:2304.7px;top:90.2px;width:87px;height:16px;background:#1d1e23"></i>
<div class="t" style="left:2307.5px;top:91.6px;width:74px;color:#e9e9eb;font-size:13px">Synt Bus</div>
<svg width="10" height="10" style="left:2381px;top:93.5px"><path d="M0.5 1.5 H8.5 L4.5 7.5Z" fill="#e9e9eb"/></svg>
<i style="left:2305px;top:112.2px;width:86.7px;height:15.5px;background:#2b2d33;border:1px solid #1b1c20"></i>
<div class="t" style="left:2307.7px;top:112.6px;color:#e9e9eb;font-size:13px">Track In</div>
<i style="left:2393px;top:88px;width:3px;height:44px;background:#2a2c32"></i>
<i style="left:2400.7px;top:91.7px;width:55.5px;height:13.5px;background:#f89bc8"></i>
<div class="t" style="left:2400.7px;top:91.6px;width:55.5px;text-align:center;color:#1c1a1c;font-size:13px;font-weight:bold">29</div>
<i style="left:2462.2px;top:90.2px;width:25.5px;height:16px;background:#1d1e23"></i>
<div class="t" style="left:2462.2px;top:91.8px;width:25.5px;text-align:center;color:#e9e9eb;font-size:12.5px;font-weight:bold">S</div>
<i style="left:2493.3px;top:90.2px;width:26px;height:16px;background:#1d1e23"></i>
<svg width="12" height="12" style="left:2500.3px;top:92.2px"><circle cx="6" cy="6" r="4.6" fill="#ececee"/><path d="M6 2.8 V6 L4 8" stroke="#1d1e23" stroke-width="1.3" fill="none"/></svg>
<i style="left:2400.7px;top:112.2px;width:55.8px;height:15.5px;background:#1d1e23"></i>
<i style="left:2400.7px;top:112.2px;width:28.46px;height:15.5px;background:#168a94"></i>
<div class="t" style="left:2400.7px;top:112.6px;width:55.8px;text-align:center;color:#ececee;font-size:13px">-13.2</div>
<i style="left:2402px;top:113px;width:4.5px;height:4.5px;background:#f59ac8;border-radius:50%"></i>
<i style="left:2462.2px;top:112.2px;width:57px;height:15.5px;background:#1d1e23"></i>
<div class="t" style="left:2462.2px;top:112.6px;width:57px;text-align:center;color:#ececee;font-size:13px">C</div>
<i style="left:2524.8px;top:90px;width:3.2px;height:40px;background:#1d1e23"></i>
<i style="left:2529.8px;top:90px;width:3.2px;height:40px;background:#1d1e23"></i>
<i style="left:2177px;top:134.25px;width:123px;height:44px;background:#98a22f"></i>
<svg width="16" height="16" style="left:2180.8px;top:137.25px"><circle cx="8" cy="8" r="7.2" fill="none" stroke="#262a06" stroke-width="1.5"/><path d="M4 6.1 L12 6.1 L8 11.2Z" fill="#262a06"/></svg>
<div class="t" style="left:2206px;top:139.25px;width:93px;color:#262a06;font-size:12px;font-weight:bold">Organ</div>
<i style="left:2304.7px;top:136.45px;width:87px;height:16px;background:#1d1e23"></i>
<div class="t" style="left:2307.5px;top:137.85px;width:74px;color:#e9e9eb;font-size:13px">Synt Bus</div>
<svg width="10" height="10" style="left:2381px;top:139.75px"><path d="M0.5 1.5 H8.5 L4.5 7.5Z" fill="#e9e9eb"/></svg>
<i style="left:2305px;top:158.45px;width:86.7px;height:15.5px;background:#2b2d33;border:1px solid #1b1c20"></i>
<div class="t" style="left:2307.7px;top:158.85px;color:#e9e9eb;font-size:13px">Track In</div>
<i style="left:2393px;top:134.25px;width:3px;height:44px;background:#2a2c32"></i>
<i style="left:2400.7px;top:137.95px;width:55.5px;height:13.5px;background:#f89bc8"></i>
<div class="t" style="left:2400.7px;top:137.85px;width:55.5px;text-align:center;color:#1c1a1c;font-size:13px;font-weight:bold">30</div>
<i style="left:2462.2px;top:136.45px;width:25.5px;height:16px;background:#1d1e23"></i>
<div class="t" style="left:2462.2px;top:138.05px;width:25.5px;text-align:center;color:#e9e9eb;font-size:12.5px;font-weight:bold">S</div>
<i style="left:2493.3px;top:136.45px;width:26px;height:16px;background:#1d1e23"></i>
<svg width="12" height="12" style="left:2500.3px;top:138.45px"><circle cx="6" cy="6" r="4.6" fill="#ececee"/><path d="M6 2.8 V6 L4 8" stroke="#1d1e23" stroke-width="1.3" fill="none"/></svg>
<i style="left:2400.7px;top:158.45px;width:55.8px;height:15.5px;background:#1d1e23"></i>
<i style="left:2400.7px;top:158.45px;width:32.92px;height:15.5px;background:#168a94"></i>
<div class="t" style="left:2400.7px;top:158.85px;width:55.8px;text-align:center;color:#ececee;font-size:13px">-10.1</div>
<i style="left:2462.2px;top:158.45px;width:57px;height:15.5px;background:#1d1e23"></i>
<div class="t" style="left:2462.2px;top:158.85px;width:57px;text-align:center;color:#ececee;font-size:13px">C</div>
<i style="left:2524.8px;top:136.25px;width:3.2px;height:40px;background:#1d1e23"></i>
<i style="left:2529.8px;top:136.25px;width:3.2px;height:40px;background:#1d1e23"></i>
<i style="left:2177px;top:180.5px;width:123px;height:44px;background:#8b5c4a"></i>
<svg width="16" height="16" style="left:2180.8px;top:183.5px"><circle cx="8" cy="8" r="7.2" fill="none" stroke="#f3e2da" stroke-width="1.5"/><path d="M4 6.1 L12 6.1 L8 11.2Z" fill="#f3e2da"/></svg>
<div class="t" style="left:2206px;top:185.5px;width:93px;color:#f3e2da;font-size:12px;font-weight:bold">Spanish Flame</div>
<i style="left:2304.7px;top:182.7px;width:87px;height:16px;background:#1d1e23"></i>
<div class="t" style="left:2307.5px;top:184.1px;width:74px;color:#e9e9eb;font-size:13px">Guitar Bus</div>
<svg width="10" height="10" style="left:2381px;top:186px"><path d="M0.5 1.5 H8.5 L4.5 7.5Z" fill="#e9e9eb"/></svg>
<i style="left:2305px;top:204.7px;width:86.7px;height:15.5px;background:#2b2d33;border:1px solid #1b1c20"></i>
<div class="t" style="left:2307.7px;top:205.1px;color:#e9e9eb;font-size:13px">Track In</div>
<i style="left:2393px;top:180.5px;width:3px;height:44px;background:#2a2c32"></i>
<i style="left:2400.7px;top:184.2px;width:55.5px;height:13.5px;background:#f89bc8"></i>
<div class="t" style="left:2400.7px;top:184.1px;width:55.5px;text-align:center;color:#1c1a1c;font-size:13px;font-weight:bold">31</div>
<i style="left:2462.2px;top:182.7px;width:25.5px;height:16px;background:#1d1e23"></i>
<div class="t" style="left:2462.2px;top:184.3px;width:25.5px;text-align:center;color:#e9e9eb;font-size:12.5px;font-weight:bold">S</div>
<i style="left:2493.3px;top:182.7px;width:26px;height:16px;background:#1d1e23"></i>
<svg width="12" height="12" style="left:2500.3px;top:184.7px"><circle cx="6" cy="6" r="4.6" fill="#ececee"/><path d="M6 2.8 V6 L4 8" stroke="#1d1e23" stroke-width="1.3" fill="none"/></svg>
<i style="left:2400.7px;top:204.7px;width:55.8px;height:15.5px;background:#1d1e23"></i>
<i style="left:2400.7px;top:204.7px;width:46.31px;height:15.5px;background:#168a94"></i>
<div class="t" style="left:2400.7px;top:205.1px;width:55.8px;text-align:center;color:#ececee;font-size:13px">-0.3</div>
<i style="left:2462.2px;top:204.7px;width:57px;height:15.5px;background:#1d1e23"></i>
<i style="left:2473.8px;top:204.7px;width:16.9px;height:15.5px;background:#168a94"></i>
<div class="t" style="left:2462.2px;top:205.1px;width:57px;text-align:center;color:#ececee;font-size:13px">30L</div>
<i style="left:2524.8px;top:182.5px;width:3.2px;height:40px;background:#1d1e23"></i>
<i style="left:2529.8px;top:182.5px;width:3.2px;height:40px;background:#1d1e23"></i>
<i style="left:2177px;top:226.75px;width:123px;height:44px;background:#cd603d"></i>
<svg width="16" height="16" style="left:2180.8px;top:229.75px"><circle cx="8" cy="8" r="7.2" fill="none" stroke="#3a1208" stroke-width="1.5"/><path d="M4 6.1 L12 6.1 L8 11.2Z" fill="#3a1208"/></svg>
<div class="t" style="left:2206px;top:231.75px;width:93px;color:#3a1208;font-size:12px;font-weight:bold">Spanish Flame</div>
<i style="left:2304.7px;top:228.95px;width:87px;height:16px;background:#1d1e23"></i>
<div class="t" style="left:2307.5px;top:230.35px;width:74px;color:#e9e9eb;font-size:13px">Guitar Bus</div>
<svg width="10" height="10" style="left:2381px;top:232.25px"><path d="M0.5 1.5 H8.5 L4.5 7.5Z" fill="#e9e9eb"/></svg>
<i style="left:2305px;top:250.95px;width:86.7px;height:15.5px;background:#2b2d33;border:1px solid #1b1c20"></i>
<div class="t" style="left:2307.7px;top:251.35px;color:#e9e9eb;font-size:13px">Track In</div>
<i style="left:2393px;top:226.75px;width:3px;height:44px;background:#2a2c32"></i>
<i style="left:2400.7px;top:230.45px;width:55.5px;height:13.5px;background:#f89bc8"></i>
<div class="t" style="left:2400.7px;top:230.35px;width:55.5px;text-align:center;color:#1c1a1c;font-size:13px;font-weight:bold">32</div>
<i style="left:2462.2px;top:228.95px;width:25.5px;height:16px;background:#1d1e23"></i>
<div class="t" style="left:2462.2px;top:230.55px;width:25.5px;text-align:center;color:#e9e9eb;font-size:12.5px;font-weight:bold">S</div>
<i style="left:2493.3px;top:228.95px;width:26px;height:16px;background:#1d1e23"></i>
<svg width="12" height="12" style="left:2500.3px;top:230.95px"><circle cx="6" cy="6" r="4.6" fill="#ececee"/><path d="M6 2.8 V6 L4 8" stroke="#1d1e23" stroke-width="1.3" fill="none"/></svg>
<i style="left:2400.7px;top:250.95px;width:55.8px;height:15.5px;background:#1d1e23"></i>
<i style="left:2400.7px;top:250.95px;width:36.83px;height:15.5px;background:#168a94"></i>
<div class="t" style="left:2400.7px;top:251.35px;width:55.8px;text-align:center;color:#ececee;font-size:13px">-7.5</div>
<i style="left:2462.2px;top:250.95px;width:57px;height:15.5px;background:#1d1e23"></i>
<i style="left:2490.7px;top:250.95px;width:16.3px;height:15.5px;background:#168a94"></i>
<div class="t" style="left:2462.2px;top:251.35px;width:57px;text-align:center;color:#ececee;font-size:13px">30R</div>
<i style="left:2524.8px;top:228.75px;width:3.2px;height:40px;background:#1d1e23"></i>
<i style="left:2529.8px;top:228.75px;width:3.2px;height:40px;background:#1d1e23"></i>
<i style="left:2177px;top:273px;width:123px;height:44px;background:#6993e6"></i>
<svg width="16" height="16" style="left:2180.8px;top:276px"><circle cx="8" cy="8" r="7.2" fill="none" stroke="#0f2555" stroke-width="1.5"/><path d="M4 6.1 L12 6.1 L8 11.2Z" fill="#0f2555"/></svg>
<div class="t" style="left:2206px;top:278px;width:93px;color:#0f2555;font-size:12px;font-weight:bold">String Ensemb</div>
<i style="left:2304.7px;top:275.2px;width:87px;height:16px;background:#1d1e23"></i>
<div class="t" style="left:2307.5px;top:276.6px;width:74px;color:#e9e9eb;font-size:13px">Synt Bus</div>
<svg width="10" height="10" style="left:2381px;top:278.5px"><path d="M0.5 1.5 H8.5 L4.5 7.5Z" fill="#e9e9eb"/></svg>
<i style="left:2305px;top:297.2px;width:86.7px;height:15.5px;background:#2b2d33;border:1px solid #1b1c20"></i>
<div class="t" style="left:2307.7px;top:297.6px;color:#e9e9eb;font-size:13px">Track In</div>
<i style="left:2393px;top:273px;width:3px;height:44px;background:#2a2c32"></i>
<i style="left:2400.7px;top:276.7px;width:55.5px;height:13.5px;background:#f89bc8"></i>
<div class="t" style="left:2400.7px;top:276.6px;width:55.5px;text-align:center;color:#1c1a1c;font-size:13px;font-weight:bold">33</div>
<i style="left:2462.2px;top:275.2px;width:25.5px;height:16px;background:#1d1e23"></i>
<div class="t" style="left:2462.2px;top:276.8px;width:25.5px;text-align:center;color:#e9e9eb;font-size:12.5px;font-weight:bold">S</div>
<i style="left:2493.3px;top:275.2px;width:26px;height:16px;background:#1d1e23"></i>
<svg width="12" height="12" style="left:2500.3px;top:277.2px"><circle cx="6" cy="6" r="4.6" fill="#ececee"/><path d="M6 2.8 V6 L4 8" stroke="#1d1e23" stroke-width="1.3" fill="none"/></svg>
<i style="left:2400.7px;top:297.2px;width:55.8px;height:15.5px;background:#1d1e23"></i>
<i style="left:2400.7px;top:297.2px;width:20.09px;height:15.5px;background:#168a94"></i>
<div class="t" style="left:2400.7px;top:297.6px;width:55.8px;text-align:center;color:#ececee;font-size:13px">-20.0</div>
<i style="left:2402px;top:298px;width:4.5px;height:4.5px;background:#f59ac8;border-radius:50%"></i>
<i style="left:2462.2px;top:297.2px;width:57px;height:15.5px;background:#1d1e23"></i>
<div class="t" style="left:2462.2px;top:297.6px;width:57px;text-align:center;color:#ececee;font-size:13px">C</div>
<i style="left:2524.8px;top:275px;width:3.2px;height:40px;background:#1d1e23"></i>
<i style="left:2529.8px;top:275px;width:3.2px;height:40px;background:#1d1e23"></i>
<i style="left:2177px;top:319.25px;width:123px;height:44px;background:#98a22f"></i>
<svg width="16" height="16" style="left:2180.8px;top:322.25px"><circle cx="8" cy="8" r="7.2" fill="none" stroke="#262a06" stroke-width="1.5"/><path d="M4 6.1 L12 6.1 L8 11.2Z" fill="#262a06"/></svg>
<div class="t" style="left:2206px;top:324.25px;width:93px;color:#262a06;font-size:12px;font-weight:bold">12 Strings Cho</div>
<i style="left:2304.7px;top:321.45px;width:87px;height:16px;background:#1d1e23"></i>
<div class="t" style="left:2307.5px;top:322.85px;width:74px;color:#e9e9eb;font-size:13px">Guitar Bus</div>
<svg width="10" height="10" style="left:2381px;top:324.75px"><path d="M0.5 1.5 H8.5 L4.5 7.5Z" fill="#e9e9eb"/></svg>
<i style="left:2305px;top:343.45px;width:86.7px;height:15.5px;background:#2b2d33;border:1px solid #1b1c20"></i>
<div class="t" style="left:2307.7px;top:343.85px;color:#e9e9eb;font-size:13px">Track In</div>
<i style="left:2393px;top:319.25px;width:3px;height:44px;background:#2a2c32"></i>
<i style="left:2400.7px;top:322.95px;width:55.5px;height:13.5px;background:#f89bc8"></i>
<div class="t" style="left:2400.7px;top:322.85px;width:55.5px;text-align:center;color:#1c1a1c;font-size:13px;font-weight:bold">34</div>
<i style="left:2462.2px;top:321.45px;width:25.5px;height:16px;background:#1d1e23"></i>
<div class="t" style="left:2462.2px;top:323.05px;width:25.5px;text-align:center;color:#e9e9eb;font-size:12.5px;font-weight:bold">S</div>
<i style="left:2493.3px;top:321.45px;width:26px;height:16px;background:#1d1e23"></i>
<svg width="12" height="12" style="left:2500.3px;top:323.45px"><circle cx="6" cy="6" r="4.6" fill="#ececee"/><path d="M6 2.8 V6 L4 8" stroke="#1d1e23" stroke-width="1.3" fill="none"/></svg>
<i style="left:2400.7px;top:343.45px;width:55.8px;height:15.5px;background:#1d1e23"></i>
<i style="left:2400.7px;top:343.45px;width:46.31px;height:15.5px;background:#168a94"></i>
<div class="t" style="left:2400.7px;top:343.85px;width:55.8px;text-align:center;color:#ececee;font-size:13px">0</div>
<i style="left:2462.2px;top:343.45px;width:57px;height:15.5px;background:#1d1e23"></i>
<div class="t" style="left:2462.2px;top:343.85px;width:57px;text-align:center;color:#ececee;font-size:13px">C</div>
<i style="left:2524.8px;top:321.25px;width:3.2px;height:40px;background:#1d1e23"></i>
<i style="left:2529.8px;top:321.25px;width:3.2px;height:40px;background:#1d1e23"></i>
<i style="left:2177px;top:365.5px;width:123px;height:44px;background:#b98659"></i>
<svg width="16" height="16" style="left:2180.8px;top:368.5px"><circle cx="8" cy="8" r="6.9" fill="none" stroke="#3a2614" stroke-width="1.3"/><path d="M4.5 5.5h6M5.5 8h5.5M5.5 10.5h5.5" stroke="#3a2614" stroke-width="1.2"/></svg>
<div class="t" style="left:2206px;top:370.5px;width:93px;color:#3a2614;font-size:12px;font-weight:bold">Ovation Guitar</div>
<i style="left:2304.7px;top:367.7px;width:87px;height:16px;background:#1d1e23"></i>
<div class="t" style="left:2307.5px;top:369.1px;width:74px;color:#e9e9eb;font-size:13px">Guitar Bus</div>
<svg width="10" height="10" style="left:2381px;top:371px"><path d="M0.5 1.5 H8.5 L4.5 7.5Z" fill="#e9e9eb"/></svg>
<i style="left:2305px;top:389.7px;width:86.7px;height:15.5px;background:#2b2d33;border:1px solid #1b1c20"></i>
<div class="t" style="left:2307.7px;top:390.1px;color:#e9e9eb;font-size:13px">Track In</div>
<i style="left:2393px;top:365.5px;width:3px;height:44px;background:#2a2c32"></i>
<i style="left:2400.7px;top:369.2px;width:55.5px;height:13.5px;background:#f89bc8"></i>
<div class="t" style="left:2400.7px;top:369.1px;width:55.5px;text-align:center;color:#1c1a1c;font-size:13px;font-weight:bold">35</div>
<i style="left:2462.2px;top:367.7px;width:25.5px;height:16px;background:#1d1e23"></i>
<div class="t" style="left:2462.2px;top:369.3px;width:25.5px;text-align:center;color:#e9e9eb;font-size:12.5px;font-weight:bold">S</div>
<i style="left:2400.7px;top:389.7px;width:55.8px;height:15.5px;background:#1d1e23"></i>
<i style="left:2400.7px;top:389.7px;width:40.73px;height:15.5px;background:#168a94"></i>
<div class="t" style="left:2400.7px;top:390.1px;width:55.8px;text-align:center;color:#ececee;font-size:13px">-5.0</div>
<i style="left:2462.2px;top:389.7px;width:57px;height:15.5px;background:#1d1e23"></i>
<i style="left:2472.8px;top:389.7px;width:17.9px;height:15.5px;background:#168a94"></i>
<div class="t" style="left:2462.2px;top:390.1px;width:57px;text-align:center;color:#ececee;font-size:13px">32L</div>
<i style="left:2524.8px;top:367.5px;width:3.2px;height:40px;background:#1d1e23"></i>
<i style="left:2529.8px;top:367.5px;width:3.2px;height:40px;background:#1d1e23"></i>
<i style="left:2177px;top:409.5px;width:5px;height:46.25px;background:#b98659"></i>
<i style="left:2181.5px;top:411.75px;width:1.5px;height:44px;background:#1d1f23"></i>
<i style="left:2183px;top:411.75px;width:117px;height:44px;background:#98a22f"></i>
<svg width="16" height="16" style="left:2187px;top:414.75px"><circle cx="8" cy="8" r="7.2" fill="none" stroke="#262a06" stroke-width="1.5"/><path d="M4 6.1 L12 6.1 L8 11.2Z" fill="#262a06"/></svg>
<div class="t" style="left:2211px;top:416.75px;width:88px;color:#262a06;font-size:12px;font-weight:bold">Ovation Acou</div>
<i style="left:2304.7px;top:413.95px;width:87px;height:16px;background:#1d1e23"></i>
<div class="t" style="left:2307.5px;top:415.35px;width:74px;color:#e9e9eb;font-size:13px">Ovation Guit</div>
<svg width="10" height="10" style="left:2381px;top:417.25px"><path d="M0.5 1.5 H8.5 L4.5 7.5Z" fill="#e9e9eb"/></svg>
<i style="left:2305px;top:435.95px;width:86.7px;height:15.5px;background:#2b2d33;border:1px solid #1b1c20"></i>
<i style="left:2393px;top:411.75px;width:3px;height:44px;background:#2a2c32"></i>
<i style="left:2400.7px;top:415.45px;width:55.5px;height:13.5px;background:#f89bc8"></i>
<div class="t" style="left:2400.7px;top:415.35px;width:55.5px;text-align:center;color:#1c1a1c;font-size:13px;font-weight:bold">36</div>
<i style="left:2462.2px;top:413.95px;width:25.5px;height:16px;background:#1d1e23"></i>
<div class="t" style="left:2462.2px;top:415.55px;width:25.5px;text-align:center;color:#e9e9eb;font-size:12.5px;font-weight:bold">S</div>
<i style="left:2493.3px;top:413.95px;width:26px;height:16px;background:#1d1e23"></i>
<svg width="12" height="12" style="left:2500.3px;top:415.95px"><circle cx="6" cy="6" r="4.6" fill="#ececee"/><path d="M6 2.8 V6 L4 8" stroke="#1d1e23" stroke-width="1.3" fill="none"/></svg>
<i style="left:2400.7px;top:435.95px;width:55.8px;height:15.5px;background:#1d1e23"></i>
<i style="left:2400.7px;top:435.95px;width:46.31px;height:15.5px;background:#168a94"></i>
<div class="t" style="left:2400.7px;top:436.35px;width:55.8px;text-align:center;color:#ececee;font-size:13px">0</div>
<i style="left:2462.2px;top:435.95px;width:57px;height:15.5px;background:#1d1e23"></i>
<div class="t" style="left:2462.2px;top:436.35px;width:57px;text-align:center;color:#ececee;font-size:13px">C</div>
<i style="left:2524.8px;top:413.75px;width:3.2px;height:40px;background:#1d1e23"></i>
<i style="left:2529.8px;top:413.75px;width:3.2px;height:40px;background:#1d1e23"></i>
<i style="left:2177px;top:455.75px;width:5px;height:46.25px;background:#b98659"></i>
<i style="left:2181.5px;top:458px;width:1.5px;height:44px;background:#1d1f23"></i>
<i style="left:2183px;top:458px;width:117px;height:44px;background:#8b5c4a"></i>
<svg width="16" height="16" style="left:2187px;top:461px"><circle cx="8" cy="8" r="7.2" fill="none" stroke="#f3e2da" stroke-width="1.5"/><path d="M4 6.1 L12 6.1 L8 11.2Z" fill="#f3e2da"/></svg>
<div class="t" style="left:2211px;top:463px;width:88px;color:#f3e2da;font-size:12px;font-weight:bold">Ovation Chuk</div>
<i style="left:2304.7px;top:460.2px;width:87px;height:16px;background:#1d1e23"></i>
<div class="t" style="left:2307.5px;top:461.6px;width:74px;color:#e9e9eb;font-size:13px">Ovation Guit</div>
<svg width="10" height="10" style="left:2381px;top:463.5px"><path d="M0.5 1.5 H8.5 L4.5 7.5Z" fill="#e9e9eb"/></svg>
<i style="left:2305px;top:482.2px;width:86.7px;height:15.5px;background:#2b2d33;border:1px solid #1b1c20"></i>
<i style="left:2393px;top:458px;width:3px;height:44px;background:#2a2c32"></i>
<i style="left:2400.7px;top:461.7px;width:55.5px;height:13.5px;background:#f89bc8"></i>
<div class="t" style="left:2400.7px;top:461.6px;width:55.5px;text-align:center;color:#1c1a1c;font-size:13px;font-weight:bold">37</div>
<i style="left:2462.2px;top:460.2px;width:25.5px;height:16px;background:#1d1e23"></i>
<div class="t" style="left:2462.2px;top:461.8px;width:25.5px;text-align:center;color:#e9e9eb;font-size:12.5px;font-weight:bold">S</div>
<i style="left:2493.3px;top:460.2px;width:26px;height:16px;background:#1d1e23"></i>
<svg width="12" height="12" style="left:2500.3px;top:462.2px"><circle cx="6" cy="6" r="4.6" fill="#ececee"/><path d="M6 2.8 V6 L4 8" stroke="#1d1e23" stroke-width="1.3" fill="none"/></svg>
<i style="left:2400.7px;top:482.2px;width:55.8px;height:15.5px;background:#1d1e23"></i>
<i style="left:2400.7px;top:482.2px;width:46.31px;height:15.5px;background:#168a94"></i>
<div class="t" style="left:2400.7px;top:482.6px;width:55.8px;text-align:center;color:#ececee;font-size:13px">0</div>
<i style="left:2462.2px;top:482.2px;width:57px;height:15.5px;background:#1d1e23"></i>
<div class="t" style="left:2462.2px;top:482.6px;width:57px;text-align:center;color:#ececee;font-size:13px">C</div>
<i style="left:2524.8px;top:460px;width:3.2px;height:40px;background:#1d1e23"></i>
<i style="left:2529.8px;top:460px;width:3.2px;height:40px;background:#1d1e23"></i>
<i style="left:2177px;top:504.25px;width:123px;height:44px;background:#53ad3c"></i>
<svg width="16" height="16" style="left:2180.8px;top:507.25px"><circle cx="8" cy="8" r="6.9" fill="none" stroke="#0c2e06" stroke-width="1.3"/><path d="M4.5 5.5h6M5.5 8h5.5M5.5 10.5h5.5" stroke="#0c2e06" stroke-width="1.2"/></svg>
<div class="t" style="left:2206px;top:509.25px;width:93px;color:#0c2e06;font-size:12px;font-weight:bold">Ac. Guitar 2</div>
<i style="left:2304.7px;top:506.45px;width:87px;height:16px;background:#1d1e23"></i>
<div class="t" style="left:2307.5px;top:507.85px;width:74px;color:#e9e9eb;font-size:13px">Guitar Bus</div>
<svg width="10" height="10" style="left:2381px;top:509.75px"><path d="M0.5 1.5 H8.5 L4.5 7.5Z" fill="#e9e9eb"/></svg>
<i style="left:2305px;top:528.45px;width:86.7px;height:15.5px;background:#2b2d33;border:1px solid #1b1c20"></i>
<div class="t" style="left:2307.7px;top:528.85px;color:#e9e9eb;font-size:13px">Track In</div>
<i style="left:2393px;top:504.25px;width:3px;height:44px;background:#2a2c32"></i>
<i style="left:2400.7px;top:507.95px;width:55.5px;height:13.5px;background:#f89bc8"></i>
<div class="t" style="left:2400.7px;top:507.85px;width:55.5px;text-align:center;color:#1c1a1c;font-size:13px;font-weight:bold">38</div>
<i style="left:2462.2px;top:506.45px;width:25.5px;height:16px;background:#1d1e23"></i>
<div class="t" style="left:2462.2px;top:508.05px;width:25.5px;text-align:center;color:#e9e9eb;font-size:12.5px;font-weight:bold">S</div>
<i style="left:2400.7px;top:528.45px;width:55.8px;height:15.5px;background:#1d1e23"></i>
<i style="left:2400.7px;top:528.45px;width:42.41px;height:15.5px;background:#168a94"></i>
<div class="t" style="left:2400.7px;top:528.85px;width:55.8px;text-align:center;color:#ececee;font-size:13px">-3.3</div>
<i style="left:2462.2px;top:528.45px;width:57px;height:15.5px;background:#1d1e23"></i>
<i style="left:2490.7px;top:528.45px;width:19px;height:15.5px;background:#168a94"></i>
<div class="t" style="left:2462.2px;top:528.85px;width:57px;text-align:center;color:#ececee;font-size:13px">34R</div>
<i style="left:2524.8px;top:506.25px;width:3.2px;height:40px;background:#1d1e23"></i>
<i style="left:2529.8px;top:506.25px;width:3.2px;height:40px;background:#1d1e23"></i>
<i style="left:2177px;top:548.25px;width:5px;height:46.25px;background:#53ad3c"></i>
<i style="left:2181.5px;top:550.5px;width:1.5px;height:44px;background:#1d1f23"></i>
<i style="left:2183px;top:550.5px;width:117px;height:44px;background:#53ad3c"></i>
<svg width="16" height="16" style="left:2187px;top:553.5px"><circle cx="8" cy="8" r="7.2" fill="none" stroke="#0c2e06" stroke-width="1.5"/><path d="M4 6.1 L12 6.1 L8 11.2Z" fill="#0c2e06"/></svg>
<div class="t" style="left:2211px;top:555.5px;width:88px;color:#0c2e06;font-size:12px;font-weight:bold">Steel Strings</div>
<i style="left:2304.7px;top:552.7px;width:87px;height:16px;background:#1d1e23"></i>
<div class="t" style="left:2307.5px;top:554.1px;width:74px;color:#e9e9eb;font-size:13px">Ac. Guitar 2</div>
<svg width="10" height="10" style="left:2381px;top:556px"><path d="M0.5 1.5 H8.5 L4.5 7.5Z" fill="#e9e9eb"/></svg>
<i style="left:2305px;top:574.7px;width:86.7px;height:15.5px;background:#2b2d33;border:1px solid #1b1c20"></i>
<i style="left:2393px;top:550.5px;width:3px;height:44px;background:#2a2c32"></i>
<i style="left:2400.7px;top:554.2px;width:55.5px;height:13.5px;background:#f89bc8"></i>
<div class="t" style="left:2400.7px;top:554.1px;width:55.5px;text-align:center;color:#1c1a1c;font-size:13px;font-weight:bold">39</div>
<i style="left:2462.2px;top:552.7px;width:25.5px;height:16px;background:#1d1e23"></i>
<div class="t" style="left:2462.2px;top:554.3px;width:25.5px;text-align:center;color:#e9e9eb;font-size:12.5px;font-weight:bold">S</div>
<i style="left:2493.3px;top:552.7px;width:26px;height:16px;background:#1d1e23"></i>
<svg width="12" height="12" style="left:2500.3px;top:554.7px"><circle cx="6" cy="6" r="4.6" fill="#ececee"/><path d="M6 2.8 V6 L4 8" stroke="#1d1e23" stroke-width="1.3" fill="none"/></svg>
<i style="left:2400.7px;top:574.7px;width:55.8px;height:15.5px;background:#1d1e23"></i>
<i style="left:2400.7px;top:574.7px;width:46.31px;height:15.5px;background:#168a94"></i>
<div class="t" style="left:2400.7px;top:575.1px;width:55.8px;text-align:center;color:#ececee;font-size:13px">0</div>
<i style="left:2462.2px;top:574.7px;width:57px;height:15.5px;background:#1d1e23"></i>
<div class="t" style="left:2462.2px;top:575.1px;width:57px;text-align:center;color:#ececee;font-size:13px">C</div>
<i style="left:2524.8px;top:552.5px;width:3.2px;height:40px;background:#1d1e23"></i>
<i style="left:2529.8px;top:552.5px;width:3.2px;height:40px;background:#1d1e23"></i>
<i style="left:2177px;top:594.5px;width:5px;height:46.25px;background:#53ad3c"></i>
<i style="left:2181.5px;top:596.75px;width:1.5px;height:44px;background:#1d1f23"></i>
<i style="left:2183px;top:596.75px;width:117px;height:44px;background:#f6a3b2"></i>
<svg width="16" height="16" style="left:2187px;top:599.75px"><circle cx="8" cy="8" r="7.2" fill="none" stroke="#4a2430" stroke-width="1.5"/><path d="M4 6.1 L12 6.1 L8 11.2Z" fill="#4a2430"/></svg>
<div class="t" style="left:2211px;top:601.75px;width:88px;color:#4a2430;font-size:12px;font-weight:bold">Ovation Chuk</div>
<i style="left:2304.7px;top:598.95px;width:87px;height:16px;background:#1d1e23"></i>
<div class="t" style="left:2307.5px;top:600.35px;width:74px;color:#e9e9eb;font-size:13px">Ac. Guitar 2</div>
<svg width="10" height="10" style="left:2381px;top:602.25px"><path d="M0.5 1.5 H8.5 L4.5 7.5Z" fill="#e9e9eb"/></svg>
<i style="left:2305px;top:620.95px;width:86.7px;height:15.5px;background:#2b2d33;border:1px solid #1b1c20"></i>
<i style="left:2393px;top:596.75px;width:3px;height:44px;background:#2a2c32"></i>
<i style="left:2400.7px;top:600.45px;width:55.5px;height:13.5px;background:#f89bc8"></i>
<div class="t" style="left:2400.7px;top:600.35px;width:55.5px;text-align:center;color:#1c1a1c;font-size:13px;font-weight:bold">40</div>
<i style="left:2462.2px;top:598.95px;width:25.5px;height:16px;background:#1d1e23"></i>
<div class="t" style="left:2462.2px;top:600.55px;width:25.5px;text-align:center;color:#e9e9eb;font-size:12.5px;font-weight:bold">S</div>
<i style="left:2493.3px;top:598.95px;width:26px;height:16px;background:#1d1e23"></i>
<svg width="12" height="12" style="left:2500.3px;top:600.95px"><circle cx="6" cy="6" r="4.6" fill="#ececee"/><path d="M6 2.8 V6 L4 8" stroke="#1d1e23" stroke-width="1.3" fill="none"/></svg>
<i style="left:2400.7px;top:620.95px;width:55.8px;height:15.5px;background:#1d1e23"></i>
<i style="left:2400.7px;top:620.95px;width:46.31px;height:15.5px;background:#168a94"></i>
<div class="t" style="left:2400.7px;top:621.35px;width:55.8px;text-align:center;color:#ececee;font-size:13px">0</div>
<i style="left:2462.2px;top:620.95px;width:57px;height:15.5px;background:#1d1e23"></i>
<div class="t" style="left:2462.2px;top:621.35px;width:57px;text-align:center;color:#ececee;font-size:13px">C</div>
<i style="left:2524.8px;top:598.75px;width:3.2px;height:40px;background:#1d1e23"></i>
<i style="left:2529.8px;top:598.75px;width:3.2px;height:40px;background:#1d1e23"></i>
<i style="left:2177px;top:643px;width:123px;height:44px;background:#f9a03a"></i>
<svg width="16" height="16" style="left:2180.8px;top:646px"><circle cx="8" cy="8" r="7.2" fill="none" stroke="#3a2006" stroke-width="1.5"/><path d="M4 6.1 L12 6.1 L8 11.2Z" fill="#3a2006"/></svg>
<div class="t" style="left:2206px;top:648px;width:93px;color:#3a2006;font-size:12px;font-weight:bold">Footsteps Wal</div>
<i style="left:2304.7px;top:645.2px;width:87px;height:16px;background:#1d1e23"></i>
<div class="t" style="left:2307.5px;top:646.6px;width:74px;color:#e9e9eb;font-size:13px">FX Bus</div>
<svg width="10" height="10" style="left:2381px;top:648.5px"><path d="M0.5 1.5 H8.5 L4.5 7.5Z" fill="#e9e9eb"/></svg>
<i style="left:2305px;top:667.2px;width:86.7px;height:15.5px;background:#2b2d33;border:1px solid #1b1c20"></i>
<div class="t" style="left:2307.7px;top:667.6px;color:#e9e9eb;font-size:13px">Track In</div>
<i style="left:2393px;top:643px;width:3px;height:44px;background:#2a2c32"></i>
<i style="left:2400.7px;top:646.7px;width:55.5px;height:13.5px;background:#f89bc8"></i>
<div class="t" style="left:2400.7px;top:646.6px;width:55.5px;text-align:center;color:#1c1a1c;font-size:13px;font-weight:bold">41</div>
<i style="left:2462.2px;top:645.2px;width:25.5px;height:16px;background:#1d1e23"></i>
<div class="t" style="left:2462.2px;top:646.8px;width:25.5px;text-align:center;color:#e9e9eb;font-size:12.5px;font-weight:bold">S</div>
<i style="left:2400.7px;top:667.2px;width:55.8px;height:15.5px;background:#1d1e23"></i>
<div class="t" style="left:2400.7px;top:667.6px;width:55.8px;text-align:center;color:#ececee;font-size:13px">−∞</div>
<i style="left:2402px;top:668px;width:4.5px;height:4.5px;background:#f59ac8;border-radius:50%"></i>
<i style="left:2462.2px;top:667.2px;width:57px;height:15.5px;background:#1d1e23"></i>
<i style="left:2490.7px;top:667.2px;width:27.8px;height:15.5px;background:#168a94"></i>
<div class="t" style="left:2462.2px;top:667.6px;width:57px;text-align:center;color:#ececee;font-size:13px">49R</div>
<i style="left:2463.5px;top:668px;width:4.5px;height:4.5px;background:#f59ac8;border-radius:50%"></i>
<i style="left:2524.8px;top:645px;width:3.2px;height:40px;background:#1d1e23"></i>
<i style="left:2529.8px;top:645px;width:3.2px;height:40px;background:#1d1e23"></i>
<i style="left:2177px;top:689.25px;width:123px;height:44px;background:#f7ef97"></i>
<svg width="16" height="16" style="left:2180.8px;top:692.25px"><circle cx="8" cy="8" r="7.2" fill="none" stroke="#3a3616" stroke-width="1.5"/><path d="M4 6.1 L12 6.1 L8 11.2Z" fill="#3a3616"/></svg>
<div class="t" style="left:2206px;top:694.25px;width:93px;color:#3a3616;font-size:12px;font-weight:bold">Balm cricket</div>
<i style="left:2304.7px;top:691.45px;width:87px;height:16px;background:#1d1e23"></i>
<div class="t" style="left:2307.5px;top:692.85px;width:74px;color:#e9e9eb;font-size:13px">FX Bus</div>
<svg width="10" height="10" style="left:2381px;top:694.75px"><path d="M0.5 1.5 H8.5 L4.5 7.5Z" fill="#e9e9eb"/></svg>
<i style="left:2305px;top:713.45px;width:86.7px;height:15.5px;background:#2b2d33;border:1px solid #1b1c20"></i>
<div class="t" style="left:2307.7px;top:713.85px;color:#e9e9eb;font-size:13px">Track In</div>
<i style="left:2393px;top:689.25px;width:3px;height:44px;background:#2a2c32"></i>
<i style="left:2400.7px;top:692.95px;width:55.5px;height:13.5px;background:#f89bc8"></i>
<div class="t" style="left:2400.7px;top:692.85px;width:55.5px;text-align:center;color:#1c1a1c;font-size:13px;font-weight:bold">42</div>
<i style="left:2462.2px;top:691.45px;width:25.5px;height:16px;background:#1d1e23"></i>
<div class="t" style="left:2462.2px;top:693.05px;width:25.5px;text-align:center;color:#e9e9eb;font-size:12.5px;font-weight:bold">S</div>
<i style="left:2400.7px;top:713.45px;width:55.8px;height:15.5px;background:#1d1e23"></i>
<div class="t" style="left:2400.7px;top:713.85px;width:55.8px;text-align:center;color:#ececee;font-size:13px">−∞</div>
<i style="left:2402px;top:714.25px;width:4.5px;height:4.5px;background:#f59ac8;border-radius:50%"></i>
<i style="left:2462.2px;top:713.45px;width:57px;height:15.5px;background:#1d1e23"></i>
<i style="left:2462.5px;top:713.45px;width:28.2px;height:15.5px;background:#168a94"></i>
<div class="t" style="left:2462.2px;top:713.85px;width:57px;text-align:center;color:#ececee;font-size:13px">50L</div>
<i style="left:2524.8px;top:691.25px;width:3.2px;height:40px;background:#1d1e23"></i>
<i style="left:2529.8px;top:691.25px;width:3.2px;height:40px;background:#1d1e23"></i>
<i style="left:2177px;top:735.5px;width:123px;height:44px;background:#f7ef97"></i>
<svg width="16" height="16" style="left:2180.8px;top:738.5px"><circle cx="8" cy="8" r="7.2" fill="none" stroke="#3a3616" stroke-width="1.5"/><path d="M4 6.1 L12 6.1 L8 11.2Z" fill="#3a3616"/></svg>
<div class="t" style="left:2206px;top:740.5px;width:93px;color:#3a3616;font-size:12px;font-weight:bold">Balm cricket 2</div>
<i style="left:2304.7px;top:737.7px;width:87px;height:16px;background:#1d1e23"></i>
<div class="t" style="left:2307.5px;top:739.1px;width:74px;color:#e9e9eb;font-size:13px">FX Bus</div>
<svg width="10" height="10" style="left:2381px;top:741px"><path d="M0.5 1.5 H8.5 L4.5 7.5Z" fill="#e9e9eb"/></svg>
<i style="left:2305px;top:759.7px;width:86.7px;height:15.5px;background:#2b2d33;border:1px solid #1b1c20"></i>
<div class="t" style="left:2307.7px;top:760.1px;color:#e9e9eb;font-size:13px">Track In</div>
<i style="left:2393px;top:735.5px;width:3px;height:44px;background:#2a2c32"></i>
<i style="left:2400.7px;top:739.2px;width:55.5px;height:13.5px;background:#f89bc8"></i>
<div class="t" style="left:2400.7px;top:739.1px;width:55.5px;text-align:center;color:#1c1a1c;font-size:13px;font-weight:bold">43</div>
<i style="left:2462.2px;top:737.7px;width:25.5px;height:16px;background:#1d1e23"></i>
<div class="t" style="left:2462.2px;top:739.3px;width:25.5px;text-align:center;color:#e9e9eb;font-size:12.5px;font-weight:bold">S</div>
<i style="left:2400.7px;top:759.7px;width:55.8px;height:15.5px;background:#1d1e23"></i>
<div class="t" style="left:2400.7px;top:760.1px;width:55.8px;text-align:center;color:#ececee;font-size:13px">−∞</div>
<i style="left:2402px;top:760.5px;width:4.5px;height:4.5px;background:#f59ac8;border-radius:50%"></i>
<i style="left:2462.2px;top:759.7px;width:57px;height:15.5px;background:#1d1e23"></i>
<i style="left:2490.7px;top:759.7px;width:27.8px;height:15.5px;background:#168a94"></i>
<div class="t" style="left:2462.2px;top:760.1px;width:57px;text-align:center;color:#ececee;font-size:13px">50R</div>
<i style="left:2524.8px;top:737.5px;width:3.2px;height:40px;background:#1d1e23"></i>
<i style="left:2529.8px;top:737.5px;width:3.2px;height:40px;background:#1d1e23"></i>
<i style="left:2177px;top:781.75px;width:123px;height:44px;background:#f27022"></i>
<svg width="16" height="16" style="left:2180.8px;top:784.75px"><circle cx="8" cy="8" r="7.2" fill="none" stroke="#3c1704" stroke-width="1.5"/><path d="M4 6.1 L12 6.1 L8 11.2Z" fill="#3c1704"/></svg>
<div class="t" style="left:2206px;top:786.75px;width:93px;color:#3c1704;font-size:12px;font-weight:bold">Dustin 1</div>
<i style="left:2304.7px;top:783.95px;width:87px;height:16px;background:#1d1e23"></i>
<div class="t" style="left:2307.5px;top:785.35px;width:74px;color:#e9e9eb;font-size:13px">Voc Bus</div>
<svg width="10" height="10" style="left:2381px;top:787.25px"><path d="M0.5 1.5 H8.5 L4.5 7.5Z" fill="#e9e9eb"/></svg>
<i style="left:2305px;top:805.95px;width:86.7px;height:15.5px;background:#2b2d33;border:1px solid #1b1c20"></i>
<div class="t" style="left:2307.7px;top:806.35px;color:#e9e9eb;font-size:13px">Track In</div>
<i style="left:2393px;top:781.75px;width:3px;height:44px;background:#2a2c32"></i>
<i style="left:2400.7px;top:785.45px;width:55.5px;height:13.5px;background:#f89bc8"></i>
<div class="t" style="left:2400.7px;top:785.35px;width:55.5px;text-align:center;color:#1c1a1c;font-size:13px;font-weight:bold">44</div>
<i style="left:2462.2px;top:783.95px;width:25.5px;height:16px;background:#1d1e23"></i>
<div class="t" style="left:2462.2px;top:785.55px;width:25.5px;text-align:center;color:#e9e9eb;font-size:12.5px;font-weight:bold">S</div>
<i style="left:2400.7px;top:805.95px;width:55.8px;height:15.5px;background:#1d1e23"></i>
<i style="left:2400.7px;top:805.95px;width:40.73px;height:15.5px;background:#168a94"></i>
<div class="t" style="left:2400.7px;top:806.35px;width:55.8px;text-align:center;color:#ececee;font-size:13px">-4.9</div>
<i style="left:2462.2px;top:805.95px;width:57px;height:15.5px;background:#1d1e23"></i>
<div class="t" style="left:2462.2px;top:806.35px;width:57px;text-align:center;color:#ececee;font-size:13px">C</div>
<i style="left:2524.8px;top:783.75px;width:3.2px;height:40px;background:#1d1e23"></i>
<i style="left:2529.8px;top:783.75px;width:3.2px;height:40px;background:#1d1e23"></i>
<i style="left:2177px;top:828px;width:123px;height:44px;background:#fde650"></i>
<svg width="16" height="16" style="left:2180.8px;top:831px"><circle cx="8" cy="8" r="7.2" fill="none" stroke="#3a3206" stroke-width="1.5"/><path d="M4 6.1 L12 6.1 L8 11.2Z" fill="#3a3206"/></svg>
<div class="t" style="left:2206px;top:833px;width:93px;color:#3a3206;font-size:12px;font-weight:bold">Dustin 2</div>
<i style="left:2304.7px;top:830.2px;width:87px;height:16px;background:#1d1e23"></i>
<div class="t" style="left:2307.5px;top:831.6px;width:74px;color:#e9e9eb;font-size:13px">Voc Bus</div>
<svg width="10" height="10" style="left:2381px;top:833.5px"><path d="M0.5 1.5 H8.5 L4.5 7.5Z" fill="#e9e9eb"/></svg>
<i style="left:2305px;top:852.2px;width:86.7px;height:15.5px;background:#2b2d33;border:1px solid #1b1c20"></i>
<div class="t" style="left:2307.7px;top:852.6px;color:#e9e9eb;font-size:13px">Track In</div>
<i style="left:2393px;top:828px;width:3px;height:44px;background:#2a2c32"></i>
<i style="left:2400.7px;top:831.7px;width:55.5px;height:13.5px;background:#f89bc8"></i>
<div class="t" style="left:2400.7px;top:831.6px;width:55.5px;text-align:center;color:#1c1a1c;font-size:13px;font-weight:bold">45</div>
<i style="left:2462.2px;top:830.2px;width:25.5px;height:16px;background:#1d1e23"></i>
<div class="t" style="left:2462.2px;top:831.8px;width:25.5px;text-align:center;color:#e9e9eb;font-size:12.5px;font-weight:bold">S</div>
<i style="left:2400.7px;top:852.2px;width:55.8px;height:15.5px;background:#1d1e23"></i>
<i style="left:2400.7px;top:852.2px;width:39.62px;height:15.5px;background:#168a94"></i>
<div class="t" style="left:2400.7px;top:852.6px;width:55.8px;text-align:center;color:#ececee;font-size:13px">-5.9</div>
<i style="left:2402px;top:853px;width:4.5px;height:4.5px;background:#f59ac8;border-radius:50%"></i>
<i style="left:2462.2px;top:852.2px;width:57px;height:15.5px;background:#1d1e23"></i>
<div class="t" style="left:2462.2px;top:852.6px;width:57px;text-align:center;color:#ececee;font-size:13px">C</div>
<i style="left:2524.8px;top:830px;width:3.2px;height:40px;background:#1d1e23"></i>
<i style="left:2529.8px;top:830px;width:3.2px;height:40px;background:#1d1e23"></i>
<i style="left:2177px;top:874.25px;width:123px;height:44px;background:#41f3a6"></i>
<svg width="16" height="16" style="left:2180.8px;top:877.25px"><circle cx="8" cy="8" r="7.2" fill="none" stroke="#053a22" stroke-width="1.5"/><path d="M4 6.1 L12 6.1 L8 11.2Z" fill="#053a22"/></svg>
<div class="t" style="left:2206px;top:879.25px;width:93px;color:#053a22;font-size:12px;font-weight:bold">Dustin 3</div>
<i style="left:2304.7px;top:876.45px;width:87px;height:16px;background:#1d1e23"></i>
<div class="t" style="left:2307.5px;top:877.85px;width:74px;color:#e9e9eb;font-size:13px">Voc Bus</div>
<svg width="10" height="10" style="left:2381px;top:879.75px"><path d="M0.5 1.5 H8.5 L4.5 7.5Z" fill="#e9e9eb"/></svg>
<i style="left:2305px;top:898.45px;width:86.7px;height:15.5px;background:#2b2d33;border:1px solid #1b1c20"></i>
<div class="t" style="left:2307.7px;top:898.85px;color:#e9e9eb;font-size:13px">Track In</div>
<i style="left:2393px;top:874.25px;width:3px;height:44px;background:#2a2c32"></i>
<i style="left:2400.7px;top:877.95px;width:55.5px;height:13.5px;background:#f89bc8"></i>
<div class="t" style="left:2400.7px;top:877.85px;width:55.5px;text-align:center;color:#1c1a1c;font-size:13px;font-weight:bold">46</div>
<i style="left:2462.2px;top:876.45px;width:25.5px;height:16px;background:#1d1e23"></i>
<div class="t" style="left:2462.2px;top:878.05px;width:25.5px;text-align:center;color:#e9e9eb;font-size:12.5px;font-weight:bold">S</div>
<i style="left:2400.7px;top:898.45px;width:55.8px;height:15.5px;background:#1d1e23"></i>
<i style="left:2400.7px;top:898.45px;width:32.92px;height:15.5px;background:#168a94"></i>
<div class="t" style="left:2400.7px;top:898.85px;width:55.8px;text-align:center;color:#ececee;font-size:13px">-10.0</div>
<i style="left:2462.2px;top:898.45px;width:57px;height:15.5px;background:#1d1e23"></i>
<div class="t" style="left:2462.2px;top:898.85px;width:57px;text-align:center;color:#ececee;font-size:13px">C</div>
<i style="left:2524.8px;top:876.25px;width:3.2px;height:40px;background:#1d1e23"></i>
<i style="left:2529.8px;top:876.25px;width:3.2px;height:40px;background:#1d1e23"></i>
<i style="left:2177px;top:920.5px;width:123px;height:44px;background:#1dc8b4"></i>
<svg width="16" height="16" style="left:2180.8px;top:923.5px"><circle cx="8" cy="8" r="7.2" fill="none" stroke="#083a34" stroke-width="1.5"/><path d="M4 6.1 L12 6.1 L8 11.2Z" fill="#083a34"/></svg>
<div class="t" style="left:2206px;top:925.5px;width:93px;color:#083a34;font-size:12px;font-weight:bold">Dustin 4</div>
<i style="left:2304.7px;top:922.7px;width:87px;height:16px;background:#1d1e23"></i>
<div class="t" style="left:2307.5px;top:924.1px;width:74px;color:#e9e9eb;font-size:13px">Voc Bus</div>
<svg width="10" height="10" style="left:2381px;top:926px"><path d="M0.5 1.5 H8.5 L4.5 7.5Z" fill="#e9e9eb"/></svg>
<i style="left:2305px;top:944.7px;width:86.7px;height:15.5px;background:#2b2d33;border:1px solid #1b1c20"></i>
<div class="t" style="left:2307.7px;top:945.1px;color:#e9e9eb;font-size:13px">Track In</div>
<i style="left:2393px;top:920.5px;width:3px;height:44px;background:#2a2c32"></i>
<i style="left:2400.7px;top:924.2px;width:55.5px;height:13.5px;background:#f89bc8"></i>
<div class="t" style="left:2400.7px;top:924.1px;width:55.5px;text-align:center;color:#1c1a1c;font-size:13px;font-weight:bold">47</div>
<i style="left:2462.2px;top:922.7px;width:25.5px;height:16px;background:#1d1e23"></i>
<div class="t" style="left:2462.2px;top:924.3px;width:25.5px;text-align:center;color:#e9e9eb;font-size:12.5px;font-weight:bold">S</div>
<i style="left:2400.7px;top:944.7px;width:55.8px;height:15.5px;background:#1d1e23"></i>
<i style="left:2400.7px;top:944.7px;width:40.73px;height:15.5px;background:#168a94"></i>
<div class="t" style="left:2400.7px;top:945.1px;width:55.8px;text-align:center;color:#ececee;font-size:13px">-5.0</div>
<i style="left:2462.2px;top:944.7px;width:57px;height:15.5px;background:#1d1e23"></i>
<div class="t" style="left:2462.2px;top:945.1px;width:57px;text-align:center;color:#ececee;font-size:13px">C</div>
<i style="left:2524.8px;top:922.5px;width:3.2px;height:40px;background:#1d1e23"></i>
<i style="left:2529.8px;top:922.5px;width:3.2px;height:40px;background:#1d1e23"></i>
<i style="left:2177px;top:966.75px;width:123px;height:44px;background:#0e8dd3"></i>
<svg width="16" height="16" style="left:2180.8px;top:969.75px"><circle cx="8" cy="8" r="7.2" fill="none" stroke="#05263a" stroke-width="1.5"/><path d="M4 6.1 L12 6.1 L8 11.2Z" fill="#05263a"/></svg>
<div class="t" style="left:2206px;top:971.75px;width:93px;color:#05263a;font-size:12px;font-weight:bold">Darcy</div>
<i style="left:2304.7px;top:968.95px;width:87px;height:16px;background:#1d1e23"></i>
<div class="t" style="left:2307.5px;top:970.35px;width:74px;color:#e9e9eb;font-size:13px">Voc Bus</div>
<svg width="10" height="10" style="left:2381px;top:972.25px"><path d="M0.5 1.5 H8.5 L4.5 7.5Z" fill="#e9e9eb"/></svg>
<i style="left:2305px;top:990.95px;width:86.7px;height:15.5px;background:#2b2d33;border:1px solid #1b1c20"></i>
<div class="t" style="left:2307.7px;top:991.35px;color:#e9e9eb;font-size:13px">Track In</div>
<i style="left:2393px;top:966.75px;width:3px;height:44px;background:#2a2c32"></i>
<i style="left:2400.7px;top:970.45px;width:55.5px;height:13.5px;background:#f89bc8"></i>
<div class="t" style="left:2400.7px;top:970.35px;width:55.5px;text-align:center;color:#1c1a1c;font-size:13px;font-weight:bold">48</div>
<i style="left:2462.2px;top:968.95px;width:25.5px;height:16px;background:#1d1e23"></i>
<div class="t" style="left:2462.2px;top:970.55px;width:25.5px;text-align:center;color:#e9e9eb;font-size:12.5px;font-weight:bold">S</div>
<i style="left:2400.7px;top:990.95px;width:55.8px;height:15.5px;background:#1d1e23"></i>
<i style="left:2400.7px;top:990.95px;width:35.15px;height:15.5px;background:#168a94"></i>
<div class="t" style="left:2400.7px;top:991.35px;width:55.8px;text-align:center;color:#ececee;font-size:13px">-8.8</div>
<i style="left:2462.2px;top:990.95px;width:57px;height:15.5px;background:#1d1e23"></i>
<i style="left:2482.8px;top:990.95px;width:7.9px;height:15.5px;background:#168a94"></i>
<div class="t" style="left:2462.2px;top:991.35px;width:57px;text-align:center;color:#ececee;font-size:13px">14L</div>
<i style="left:2524.8px;top:968.75px;width:3.2px;height:40px;background:#1d1e23"></i>
<i style="left:2529.8px;top:968.75px;width:3.2px;height:40px;background:#1d1e23"></i>
<i style="left:2177px;top:1013px;width:123px;height:44px;background:#22aeea"></i>
<svg width="16" height="16" style="left:2180.8px;top:1016px"><circle cx="8" cy="8" r="7.2" fill="none" stroke="#05304a" stroke-width="1.5"/><path d="M4 6.1 L12 6.1 L8 11.2Z" fill="#05304a"/></svg>
<div class="t" style="left:2206px;top:1018px;width:93px;color:#05304a;font-size:12px;font-weight:bold">Christy Backgr</div>
<i style="left:2304.7px;top:1015.2px;width:87px;height:16px;background:#1d1e23"></i>
<div class="t" style="left:2307.5px;top:1016.6px;width:74px;color:#e9e9eb;font-size:13px">Voc Bus</div>
<svg width="10" height="10" style="left:2381px;top:1018.5px"><path d="M0.5 1.5 H8.5 L4.5 7.5Z" fill="#e9e9eb"/></svg>
<i style="left:2305px;top:1037.2px;width:86.7px;height:15.5px;background:#2b2d33;border:1px solid #1b1c20"></i>
<div class="t" style="left:2307.7px;top:1037.6px;color:#e9e9eb;font-size:13px">Track In</div>
<i style="left:2393px;top:1013px;width:3px;height:44px;background:#2a2c32"></i>
<i style="left:2400.7px;top:1016.7px;width:55.5px;height:13.5px;background:#f89bc8"></i>
<div class="t" style="left:2400.7px;top:1016.6px;width:55.5px;text-align:center;color:#1c1a1c;font-size:13px;font-weight:bold">49</div>
<i style="left:2462.2px;top:1015.2px;width:25.5px;height:16px;background:#1d1e23"></i>
<div class="t" style="left:2462.2px;top:1016.8px;width:25.5px;text-align:center;color:#e9e9eb;font-size:12.5px;font-weight:bold">S</div>
<i style="left:2400.7px;top:1037.2px;width:55.8px;height:15.5px;background:#1d1e23"></i>
<i style="left:2400.7px;top:1037.2px;width:32.92px;height:15.5px;background:#168a94"></i>
<div class="t" style="left:2400.7px;top:1037.6px;width:55.8px;text-align:center;color:#ececee;font-size:13px">-10.0</div>
<i style="left:2462.2px;top:1037.2px;width:57px;height:15.5px;background:#1d1e23"></i>
<div class="t" style="left:2462.2px;top:1037.6px;width:57px;text-align:center;color:#ececee;font-size:13px">C</div>
<i style="left:2524.8px;top:1015px;width:3.2px;height:40px;background:#1d1e23"></i>
<i style="left:2529.8px;top:1015px;width:3.2px;height:40px;background:#1d1e23"></i>
<i style="left:2177px;top:1059.25px;width:123px;height:44px;background:#a3b4fb"></i>
<svg width="16" height="16" style="left:2180.8px;top:1062.25px"><circle cx="8" cy="8" r="7.2" fill="none" stroke="#1e2650" stroke-width="1.5"/><path d="M4 6.1 L12 6.1 L8 11.2Z" fill="#1e2650"/></svg>
<div class="t" style="left:2206px;top:1064.25px;width:93px;color:#1e2650;font-size:12px;font-weight:bold">Christy Backgr</div>
<i style="left:2304.7px;top:1061.45px;width:87px;height:16px;background:#1d1e23"></i>
<div class="t" style="left:2307.5px;top:1062.85px;width:74px;color:#e9e9eb;font-size:13px">Voc Bus</div>
<svg width="10" height="10" style="left:2381px;top:1064.75px"><path d="M0.5 1.5 H8.5 L4.5 7.5Z" fill="#e9e9eb"/></svg>
<i style="left:2305px;top:1083.45px;width:86.7px;height:15.5px;background:#2b2d33;border:1px solid #1b1c20"></i>
<div class="t" style="left:2307.7px;top:1083.85px;color:#e9e9eb;font-size:13px">Track In</div>
<i style="left:2393px;top:1059.25px;width:3px;height:44px;background:#2a2c32"></i>
<i style="left:2400.7px;top:1062.95px;width:55.5px;height:13.5px;background:#f89bc8"></i>
<div class="t" style="left:2400.7px;top:1062.85px;width:55.5px;text-align:center;color:#1c1a1c;font-size:13px;font-weight:bold">50</div>
<i style="left:2462.2px;top:1061.45px;width:25.5px;height:16px;background:#1d1e23"></i>
<div class="t" style="left:2462.2px;top:1063.05px;width:25.5px;text-align:center;color:#e9e9eb;font-size:12.5px;font-weight:bold">S</div>
<i style="left:2400.7px;top:1083.45px;width:55.8px;height:15.5px;background:#1d1e23"></i>
<i style="left:2400.7px;top:1083.45px;width:32.92px;height:15.5px;background:#168a94"></i>
<div class="t" style="left:2400.7px;top:1083.85px;width:55.8px;text-align:center;color:#ececee;font-size:13px">-10.0</div>
<i style="left:2462.2px;top:1083.45px;width:57px;height:15.5px;background:#1d1e23"></i>
<i style="left:2490.7px;top:1083.45px;width:8.8px;height:15.5px;background:#168a94"></i>
<div class="t" style="left:2462.2px;top:1083.85px;width:57px;text-align:center;color:#ececee;font-size:13px">17R</div>
<i style="left:2524.8px;top:1061.25px;width:3.2px;height:40px;background:#1d1e23"></i>
<i style="left:2529.8px;top:1061.25px;width:3.2px;height:40px;background:#1d1e23"></i>
<i style="left:2177px;top:1105.5px;width:123px;height:44px;background:#b98558"></i>
<svg width="16" height="16" style="left:2180.8px;top:1108.5px"><circle cx="8" cy="8" r="7.2" fill="none" stroke="#3a2612" stroke-width="1.5"/><path d="M4 6.1 L12 6.1 L8 11.2Z" fill="#3a2612"/></svg>
<div class="t" style="left:2206px;top:1110.5px;width:93px;color:#3a2612;font-size:12px;font-weight:bold">Snare Loop</div>
<i style="left:2304.7px;top:1107.7px;width:87px;height:16px;background:#1d1e23"></i>
<div class="t" style="left:2307.5px;top:1109.1px;width:74px;color:#e9e9eb;font-size:13px">Drums Bus</div>
<svg width="10" height="10" style="left:2381px;top:1111px"><path d="M0.5 1.5 H8.5 L4.5 7.5Z" fill="#e9e9eb"/></svg>
<i style="left:2305px;top:1129.7px;width:86.7px;height:15.5px;background:#2b2d33;border:1px solid #1b1c20"></i>
<div class="t" style="left:2307.7px;top:1130.1px;color:#e9e9eb;font-size:13px">Track In</div>
<i style="left:2393px;top:1105.5px;width:3px;height:44px;background:#2a2c32"></i>
<i style="left:2400.7px;top:1109.2px;width:55.5px;height:13.5px;background:#f89bc8"></i>
<div class="t" style="left:2400.7px;top:1109.1px;width:55.5px;text-align:center;color:#1c1a1c;font-size:13px;font-weight:bold">51</div>
<i style="left:2462.2px;top:1107.7px;width:25.5px;height:16px;background:#1d1e23"></i>
<div class="t" style="left:2462.2px;top:1109.3px;width:25.5px;text-align:center;color:#e9e9eb;font-size:12.5px;font-weight:bold">S</div>
<i style="left:2400.7px;top:1129.7px;width:55.8px;height:15.5px;background:#1d1e23"></i>
<i style="left:2400.7px;top:1129.7px;width:38.5px;height:15.5px;background:#168a94"></i>
<div class="t" style="left:2400.7px;top:1130.1px;width:55.8px;text-align:center;color:#ececee;font-size:13px">-6.8</div>
<i style="left:2462.2px;top:1129.7px;width:57px;height:15.5px;background:#1d1e23"></i>
<div class="t" style="left:2462.2px;top:1130.1px;width:57px;text-align:center;color:#ececee;font-size:13px">C</div>
<i style="left:2524.8px;top:1107.5px;width:3.2px;height:40px;background:#1d1e23"></i>
<i style="left:2529.8px;top:1107.5px;width:3.2px;height:40px;background:#1d1e23"></i>
<i style="left:2177px;top:1151.75px;width:123px;height:44px;background:#9b83e6"></i>
<svg width="16" height="16" style="left:2180.8px;top:1154.75px"><circle cx="8" cy="8" r="7.2" fill="none" stroke="#22184a" stroke-width="1.5"/><path d="M4 6.1 L12 6.1 L8 11.2Z" fill="#22184a"/></svg>
<div class="t" style="left:2206px;top:1156.75px;width:93px;color:#22184a;font-size:12px;font-weight:bold">Reverse Crash</div>
<i style="left:2304.7px;top:1153.95px;width:87px;height:16px;background:#1d1e23"></i>
<div class="t" style="left:2307.5px;top:1155.35px;width:74px;color:#e9e9eb;font-size:13px">FX Bus</div>
<svg width="10" height="10" style="left:2381px;top:1157.25px"><path d="M0.5 1.5 H8.5 L4.5 7.5Z" fill="#e9e9eb"/></svg>
<i style="left:2305px;top:1175.95px;width:86.7px;height:15.5px;background:#2b2d33;border:1px solid #1b1c20"></i>
<div class="t" style="left:2307.7px;top:1176.35px;color:#e9e9eb;font-size:13px">Track In</div>
<i style="left:2393px;top:1151.75px;width:3px;height:44px;background:#2a2c32"></i>
<i style="left:2400.7px;top:1155.45px;width:55.5px;height:13.5px;background:#f89bc8"></i>
<div class="t" style="left:2400.7px;top:1155.35px;width:55.5px;text-align:center;color:#1c1a1c;font-size:13px;font-weight:bold">52</div>
<i style="left:2462.2px;top:1153.95px;width:25.5px;height:16px;background:#1d1e23"></i>
<div class="t" style="left:2462.2px;top:1155.55px;width:25.5px;text-align:center;color:#e9e9eb;font-size:12.5px;font-weight:bold">S</div>
<i style="left:2400.7px;top:1175.95px;width:55.8px;height:15.5px;background:#1d1e23"></i>
<i style="left:2400.7px;top:1175.95px;width:39.62px;height:15.5px;background:#168a94"></i>
<div class="t" style="left:2400.7px;top:1176.35px;width:55.8px;text-align:center;color:#ececee;font-size:13px">-5.7</div>
<i style="left:2462.2px;top:1175.95px;width:57px;height:15.5px;background:#1d1e23"></i>
<div class="t" style="left:2462.2px;top:1176.35px;width:57px;text-align:center;color:#ececee;font-size:13px">C</div>
<i style="left:2524.8px;top:1153.75px;width:3.2px;height:40px;background:#1d1e23"></i>
<i style="left:2529.8px;top:1153.75px;width:3.2px;height:40px;background:#1d1e23"></i>
<i style="left:2177px;top:1256px;width:123px;height:21px;background:#f6ec80"></i>
<svg width="16" height="16" style="left:2181px;top:1258.5px"><circle cx="8" cy="8" r="6.9" fill="none" stroke="#2b2a0e" stroke-width="1.3"/><path d="M6 4.6 L11 8 L6 11.4Z" fill="#2b2a0e"/></svg>
<div class="t" style="left:2209px;top:1259.5px;color:#2b2a0e;font-size:13px;font-weight:bold">Main</div>
<div class="t" style="left:2100px;top:1256px;width:70px;text-align:right;color:#7c7e85;font-size:21px;font-weight:bold;letter-spacing:1px">1/1</div>
<i style="left:2304.4px;top:1258.3px;width:87.5px;height:15.4px;background:#1d1e23"></i>
<div class="t" style="left:2318px;top:1259.8px;color:#e9e9eb;font-size:13px">1/2</div>
<svg width="10" height="10" style="left:2381px;top:1262px"><path d="M0.5 1.5 H8.5 L4.5 7.5Z" fill="#e9e9eb"/></svg>
<i style="left:2393px;top:1256px;width:3px;height:21px;background:#2a2c32"></i>
<i style="left:2400px;top:1258.3px;width:56.6px;height:15.4px;background:#1d1e23"></i>
<i style="left:2400px;top:1258.3px;width:47.4px;height:15.4px;background:#168a94"></i>
<div class="t" style="left:2400px;top:1259.8px;width:47px;text-align:center;color:#ececee;font-size:13px">0</div>
<i style="left:2462px;top:1258.3px;width:57px;height:15.4px;background:#1d1e23"></i>
<i style="left:2462px;top:1258.3px;width:48px;height:15.4px;background:#4b7fd6"></i>
<div class="t" style="left:2462px;top:1259.8px;width:48px;text-align:center;color:#ececee;font-size:13px">0</div>
<i style="left:2524.8px;top:1258px;width:3.2px;height:17px;background:#1d1e23"></i>
<i style="left:2529.8px;top:1258px;width:3.2px;height:17px;background:#1d1e23"></i>
<i style="left:2178px;top:1285.8px;width:17px;height:14.5px;background:#f89bc8"></i>
<svg width="17" height="15" style="left:2178px;top:1285.8px"><path d="M3.5 5v5M6 3v9M8.5 2v11M11 4v7M13.5 6v3" stroke="#1c1a1c" stroke-width="1.2"/></svg>
<i style="left:2200.2px;top:1285.8px;width:42.6px;height:14.7px;background:#1d1e23"></i>
<i style="left:2200.2px;top:1285.8px;width:12.5px;height:14.7px;background:#168a94"></i>
<div class="t" style="left:2204px;top:1287px;color:#ececee;font-size:13px">1.00x</div>
<i style="left:2257px;top:1285.8px;width:18.7px;height:14.7px;background:#1d1e23"></i>
<div class="t" style="left:2257px;top:1287px;width:18.7px;text-align:center;color:#ececee;font-size:12.5px">H</div>
<i style="left:2279.6px;top:1285.8px;width:18.2px;height:14.7px;background:#1d1e23"></i>
<div class="t" style="left:2279.6px;top:1287px;width:18.2px;text-align:center;color:#ececee;font-size:12.5px">W</div>
<i style="left:6px;top:8.5px;width:2542px;height:1299.5px;border:2.5px solid #9b9ea6;border-radius:6px"></i>
</div></body></html>
